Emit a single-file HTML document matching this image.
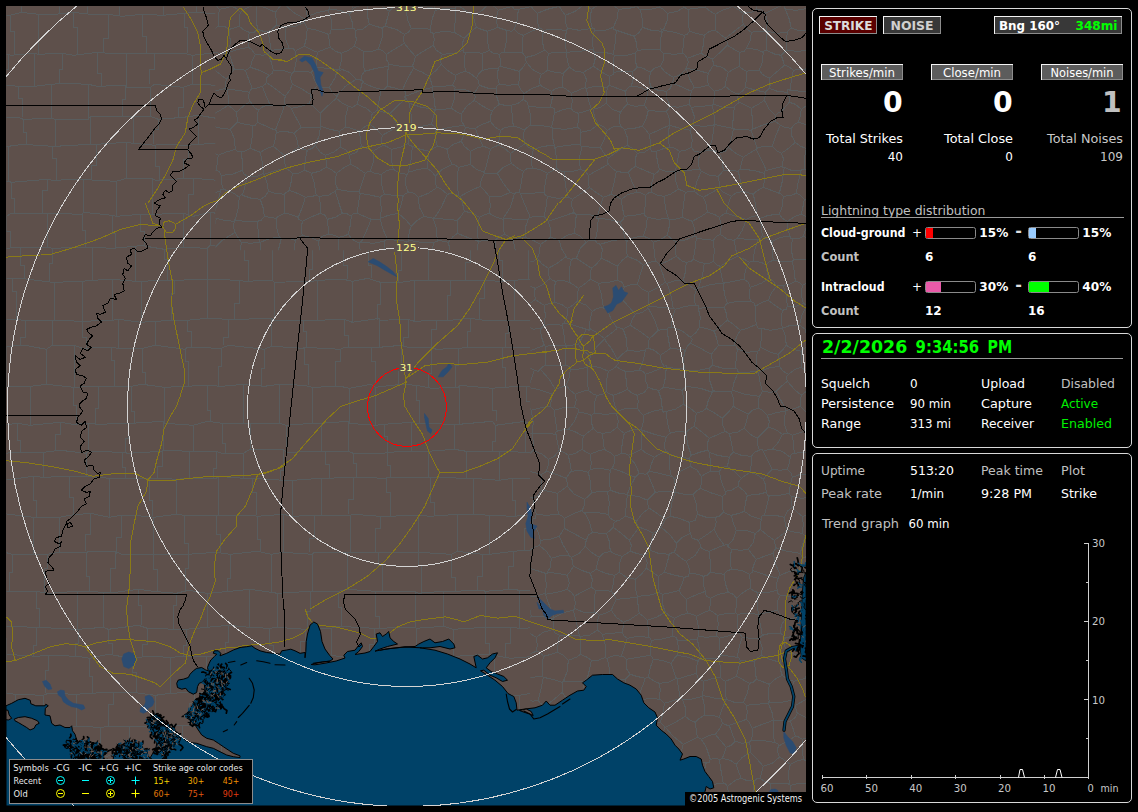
<!DOCTYPE html>
<html lang="en">
<head>
<meta charset="utf-8">
<title>Lightning detector - Astrogenic Systems</title>
<style>
html,body{margin:0;padding:0;background:#000;}
body{width:1138px;height:812px;position:relative;overflow:hidden;font-family:"DejaVu Sans","Liberation Sans",sans-serif;}
svg.map{position:absolute;left:6px;top:6px;width:800px;height:800px;display:block;}
svg.ui{position:absolute;left:0;top:0;width:1138px;height:812px;display:block;}
</style>
</head>
<body>
<svg class="map" width="800" height="800" viewBox="6 6 800 800">
<rect x="6" y="6" width="800" height="800" fill="#5e504b"/>
<defs><clipPath id="csw"><path d="M6 6H215V250H530V806H6Z"/></clipPath><clipPath id="cne"><path d="M215 6H806V806H530V250H215Z"/></clipPath></defs>
<g fill="none" stroke="#595d5e" stroke-width="1" shape-rendering="crispEdges" transform="translate(0.3 0.3)">
<path clip-path="url(#cne)" d="M533 524L522 532L511 539M533 524L532 522L532 519M532 519L521 518L510 516M518 474L519 483L521 493M521 493L518 492L517 495M523 392L525 388L528 387M523 392L523 398L523 404M523 404L529 406L531 410M531 410L542 407L550 406M528 387L541 390L552 394M552 394L551 400L550 406M573 566L572 560L571 557M573 566L581 570L590 573M571 557L579 553L585 546M599 557L591 552L585 546M599 557L597 563L596 569M590 573L593 571L596 569M590 573L592 579L591 587M596 569L605 573L614 575M614 575L613 584L611 591M611 591L603 590L595 590M591 587L594 589L595 590M639 613L638 607L637 597M639 613L630 619L623 622M637 597L627 598L616 599M616 599L613 605L611 610M611 610L616 617L623 622M533 524L538 532L540 540M540 540L540 543L539 545M516 551L521 554L526 554M539 545L532 548L526 554M540 540L550 539L559 536M559 536L563 545L569 555M569 555L561 555L551 558M539 545L546 551L551 558M573 566L570 571L567 575M567 575L557 573L547 572M571 557L569 556L569 555M551 558L550 567L547 572M834 652L835 648L834 643M810 637L808 647L806 654M810 637L815 634L822 633M829 658L833 654L834 652M829 658L819 658L808 658M808 658L808 656L806 654M822 633L827 637L834 643M810 637L807 636L805 634M806 654L796 654L787 653M787 653L784 645L784 638M805 634L796 635L784 638M828 550L823 541L820 535M704 827L706 828L705 826M726 825L715 825L705 826M749 824L760 823L772 819M772 819L776 825L778 828M778 828L789 827L798 825M770 783L770 796L773 806M770 783L764 781L760 778M760 778L757 778L754 781M754 781L753 790L751 800M751 800L763 802L773 806M789 783L780 783L770 783M789 783L788 773L790 764M763 766L761 773L760 778M763 766L772 763L779 757M779 757L783 759L790 764M763 766L756 758L750 752M741 778L738 771L736 764M741 778L746 780L754 781M750 752L742 757L736 764M722 496L722 504L723 512M722 496L712 493L700 488M723 512L719 516L715 517M700 488L696 491L693 494M715 517L706 517L697 514M693 494L696 504L697 514M523 469L523 464L523 460M523 469L533 472L541 474M548 459L548 465L546 471M548 459L542 454L533 450M541 474L545 472L546 471M533 450L529 454L523 460M559 450L557 442L556 434M559 450L554 456L548 459M556 434L545 433L532 433M533 450L533 442L532 433M523 469L520 470L518 474M523 460L515 455L506 447M531 410L533 422L532 433M556 434L555 432L557 431M557 431L555 419L554 410M550 406L552 408L554 410M532 433L532 432L532 433M558 514L546 515L536 514M558 514L557 503L557 493M536 514L534 506L533 498M557 493L549 491L541 490M533 498L538 495L541 490M532 519L535 518L536 514M521 493L528 496L533 498M541 474L541 483L541 490M523 404L516 406L510 411M532 433L521 435L510 435M507 383L516 386L523 392M829 170L827 171L823 174M823 174L823 181L824 191M827 218L823 207L819 198M824 191L822 195L819 198M830 388L831 381L831 374M809 388L808 378L810 371M809 388L816 389L826 392M810 371L815 369L823 368M826 392L827 391L830 388M831 374L827 371L823 368M818 279L810 281L802 285M818 279L817 266L817 256M817 256L805 259L793 259M802 285L799 282L795 281M795 281L794 271L792 261M792 261L793 260L793 259M828 284L832 282L835 279M828 284L824 283L818 279M817 256L818 257L817 256M823 368L824 357L823 348M823 348L823 348L825 346M825 346L827 337L829 330M832 299L825 302L817 308M817 308L819 318L823 326M829 330L825 329L823 326M800 406L792 409L786 410M800 406L800 401L801 395M801 395L794 389L787 381M787 381L781 386L776 391M776 391L780 399L786 410M559 536L562 531L564 528M558 514L561 515L564 518M564 518L564 522L564 528M585 546L585 544L586 540M564 528L575 534L586 540M619 572L619 563L622 556M619 572L616 574L614 575M599 557L603 553L610 551M610 551L615 554L622 556M675 492L675 485L674 479M675 492L664 491L655 492M649 471L648 472L647 473M649 471L659 473L671 476M671 476L673 477L674 479M647 473L651 482L655 492M636 521L642 513L649 508M636 521L632 518L625 516M649 508L647 503L647 500M625 516L626 504L627 495M627 495L638 496L647 500M584 499L588 496L591 493M584 499L574 494L567 486M591 493L590 481L588 472M588 472L580 470L571 471M567 486L567 483L566 478M571 471L569 473L566 478M557 493L560 491L567 486M582 510L574 513L564 518M582 510L584 505L584 499M610 490L607 492L607 491M610 490L609 479L610 470M607 491L598 491L591 493M610 470L600 468L590 469M590 469L590 469L588 472M546 471L556 474L566 478M559 450L565 453L568 455M568 455L570 464L571 471M616 599L614 595L611 591M595 590L594 602L594 612M611 610L605 613L599 615M594 612L598 614L599 615M559 635L558 642L557 652M559 635L568 635L579 635M580 654L580 647L580 636M580 654L576 657L568 660M568 660L563 655L557 652M579 635L580 637L580 636M700 488L701 483L701 476M675 492L675 491L675 492M674 479L680 471L690 466M675 492L684 494L693 494M701 476L697 470L690 466M686 432L689 429L694 426M686 432L687 443L691 455M694 426L702 432L709 438M709 438L707 443L707 450M707 450L699 452L691 455M669 454L669 466L671 476M669 454L679 457L689 458M690 466L691 462L689 458M365 261L371 260L380 259M389 269L384 263L380 259M193 240L200 243L209 245M216 218L213 231L209 245M216 218L214 219L213 216M198 213L206 215L213 216M220 191L207 194L196 193M220 191L217 204L213 216M223 189L221 182L221 175M223 189L220 189L220 191M221 175L219 171L216 170M216 170L206 172L198 175M230 129L234 138L235 149M230 129L221 128L213 126M213 126L209 137L208 147M235 149L225 152L218 155M218 155L213 152L208 147M216 170L217 162L218 155M198 148L203 147L208 147M319 255L328 257L339 261M319 255L319 248L318 241M328 234L322 236L318 241M328 234L334 235L338 237M338 237L338 250L339 261M365 261L363 259L358 257M358 257L349 262L343 264M314 261L317 257L319 255M314 261L304 261L295 259M302 235L310 237L318 241M302 235L300 236L295 240M295 259L294 250L295 240M526 819L533 822L538 823M526 819L517 823L512 829M505 805L512 806L521 807M521 807L525 812L526 819M540 822L540 823L538 823M540 822L546 826L554 827M545 594L549 605L554 617M545 594L557 592L567 589M554 617L564 612L573 610M567 589L571 592L574 596M574 596L575 603L574 608M573 610L574 609L574 608M567 575L569 583L567 589M591 587L583 591L574 596M594 612L583 612L574 608M599 615L597 621L597 630M597 630L589 635L580 636M579 635L576 621L573 610M523 594L521 585L521 579M523 594L526 595L529 596M529 596L536 596L545 593M545 593L546 585L545 573M521 579L524 574L529 568M545 573L536 570L529 568M497 570L509 574L521 579M511 599L518 596L523 594M547 572L547 573L545 573M545 594L545 592L545 593M526 554L526 562L529 568M677 640L678 647L677 655M677 640L687 640L697 639M700 659L699 648L697 639M700 659L698 659L698 661M698 661L688 657L677 655M623 622L623 626L622 632M597 630L600 632L602 634M602 634L612 633L622 632M700 659L710 658L718 658M718 658L720 666L720 677M696 673L696 667L698 661M696 673L698 678L703 681M703 681L713 678L720 677M826 392L825 400L823 408M809 388L806 391L801 395M800 406L805 411L810 414M823 408L816 412L810 414M828 550L825 553L824 556M805 536L813 536L819 534M805 536L802 545L800 553M819 534L821 534L820 535M800 553L801 556L802 557M802 557L813 556L824 556M828 572L825 563L824 556M829 658L830 666L831 674M808 658L808 667L805 678M805 678L812 681L817 685M817 685L825 681L831 674M819 823L819 822L819 823M819 823L810 820L803 819M803 819L802 823L798 825M748 823L739 820L732 820M748 823L750 812L751 800M732 820L729 812L726 801M751 800L740 799L727 800M727 800L728 800L726 801M749 824L748 823L748 823M726 825L728 822L732 820M774 808L772 813L772 819M774 808L773 806L773 806M751 800L750 799L751 800M705 826L707 816L707 806M707 806L716 802L726 801M727 786L735 780L741 778M727 786L728 791L727 800M773 720L772 720L773 720M773 720L762 724L752 728M752 728L752 735L751 740M751 740L761 740L774 742M773 720L773 731L774 742M750 752L750 746L749 742M779 757L777 750L778 746M749 742L749 742L751 740M774 742L778 744L778 746M801 811L794 807L789 803M801 811L808 802L815 794M789 803L791 793L790 785M790 785L799 783L808 784M808 784L810 788L813 788M815 794L814 792L813 788M774 808L782 804L789 803M803 819L801 815L801 811M828 801L823 812L819 823M828 801L820 797L815 794M789 783L788 784L790 785M810 762L809 775L808 784M810 762L808 762L803 759M803 759L796 761L790 764M557 431L564 429L568 429M554 410L564 407L574 407M568 429L574 421L578 412M574 407L578 409L578 412M819 534L822 526L824 517M824 517L830 515L835 513M802 533L803 524L802 516M802 533L805 536L805 536M824 517L819 515L815 512M802 516L809 515L815 512M763 451L769 449L772 449M763 451L767 459L772 469M772 469L780 470L787 469M787 469L789 463L790 457M772 449L782 451L790 457M795 281L789 284L783 285M792 261L783 261L773 260M769 278L767 273L766 265M769 278L774 282L776 286M783 285L780 285L776 286M773 260L768 262L766 265M832 299L830 292L828 284M825 234L820 240L816 243M817 256L817 248L816 243M827 219L825 228L825 234M827 219L827 219L827 218M785 411L777 412L767 415M785 411L784 423L787 433M787 433L786 433L782 434M782 434L775 429L768 427M768 427L769 421L767 415M776 391L770 392L762 391M786 410L785 409L785 411M762 391L760 395L759 396M759 396L758 402L758 408M758 408L762 410L767 415M810 414L809 420L810 426M810 426L801 432L792 435M792 435L789 433L787 433M772 449L778 442L782 434M790 457L791 454L794 453M794 453L793 442L792 435M670 433L667 422L666 411M670 433L677 431L686 432M696 413L690 408L683 404M696 413L695 420L694 426M683 404L675 409L666 411M690 337L692 339L690 343M690 337L681 330L671 327M690 343L687 346L685 350M671 327L668 327L667 329M667 329L668 339L670 348M685 350L679 349L670 348M738 372L747 372L757 371M738 372L737 369L735 368M735 368L736 358L737 349M737 349L747 352L757 351M757 351L756 361L757 371M732 390L745 394L759 396M732 390L734 381L738 372M762 391L760 383L758 372M758 372L756 373L757 371M731 391L731 392L732 390M731 391L721 391L713 391M709 368L709 379L713 391M709 368L711 366L712 365M712 365L723 368L735 368M714 331L720 326L727 320M714 331L716 337L718 345M718 345L728 345L734 345M734 345L736 337L740 330M727 320L733 324L740 330M699 327L706 328L714 331M699 327L700 317L698 308M698 308L710 307L724 307M724 307L726 313L727 320M699 327L696 332L690 337M690 343L702 349L711 354M711 354L715 349L718 345M712 365L712 361L711 354M737 349L736 346L734 345M758 372L767 368L779 366M760 347L770 352L778 354M760 347L759 350L757 351M778 354L779 361L779 366M810 371L805 370L801 367M787 381L786 377L788 374M801 367L795 369L788 374M788 374L783 371L779 366M823 348L814 348L807 346M823 326L814 329L805 329M805 329L807 338L807 346M778 354L782 350L786 345M801 367L801 359L801 351M786 345L793 349L801 351M807 346L804 348L801 351M606 533L610 530L613 527M606 533L600 533L592 532M584 512L589 521L592 532M584 512L595 512L608 514M608 514L610 518L615 521M613 527L613 524L615 521M610 551L609 541L606 533M629 540L631 545L630 551M629 540L621 533L613 527M622 556L625 554L630 551M586 540L588 535L592 532M582 510L583 512L584 512M607 491L609 502L608 514M625 516L619 520L615 521M610 490L619 493L627 494M627 494L628 495L627 495M636 521L637 525L639 527M639 527L635 532L629 540M612 468L614 463L614 456M612 468L623 472L635 477M614 456L617 455L621 453M621 453L624 453L628 455M628 455L635 464L639 473M635 477L636 476L639 473M627 494L630 486L635 477M610 470L611 468L612 468M647 473L645 474L639 473M655 492L650 497L647 500M568 455L575 453L582 449M568 429L576 432L583 436M582 449L582 442L583 436M590 469L591 463L590 454M582 449L586 452L590 454M614 456L611 453L604 449M590 454L597 451L604 449M763 451L762 449L759 450M768 427L761 434L757 438M759 450L757 443L757 438M750 472L751 463L751 456M750 472L756 474L763 479M763 479L768 473L772 469M759 450L754 452L751 456M701 476L706 473L710 471M707 450L708 450L709 452M691 455L690 456L689 458M710 471L710 460L709 452M738 486L731 490L725 491M738 486L738 482L741 478M741 478L734 471L727 466M725 491L721 481L719 471M719 471L722 467L727 466M750 472L745 475L741 478M751 456L741 455L733 452M733 452L730 455L729 457M729 457L728 462L727 466M722 496L725 494L725 491M710 471L715 471L719 471M729 457L717 455L709 452M763 479L765 484L766 492M738 486L744 491L747 495M766 492L758 494L747 495M731 515L727 514L723 512M731 515L739 513L744 511M744 511L745 503L747 495M802 533L795 532L787 530M787 530L785 524L784 517M802 516L797 512L792 507M784 517L787 511L792 507M766 492L767 495L769 495M761 519L761 516L764 515M761 519L751 516L744 511M764 515L767 504L769 495M566 30L565 41L566 52M566 30L567 29L567 28M566 52L580 51L593 49M593 49L592 41L594 30M594 30L594 28L592 28M567 28L579 30L592 28M208 -8L207 -10L204 -14M208 -8L222 -11L233 -11M213 126L213 125L210 122M210 122L199 124L190 124M327 219L328 228L328 234M327 219L325 215L320 213M302 235L301 229L302 221M302 221L310 217L320 213M342 213L335 217L327 219M342 213L338 201L335 191M335 191L328 195L319 196M320 213L320 204L319 196M284 213L290 214L298 217M284 213L284 204L284 194M284 194L285 193L289 190M298 217L302 207L305 197M289 190L297 193L305 197M298 217L298 219L302 221M319 196L318 196L316 195M305 197L312 196L316 195M337 189L335 182L336 173M337 189L348 191L359 191M336 173L344 167L350 164M350 164L356 167L365 173M359 191L362 182L365 173M223 189L232 192L239 197M239 197L238 207L235 220M216 218L224 220L234 221M235 220L234 219L234 221M264 216L261 220L257 221M264 216L263 208L260 199M239 197L241 194L242 195M257 221L245 221L235 220M242 195L251 198L260 199M284 213L278 216L276 218M284 194L275 193L268 191M276 218L269 217L264 216M268 191L265 196L260 199M221 175L232 174L242 170M235 149L237 151L241 151M241 151L242 161L242 170M242 195L245 185L247 176M264 174L263 174L263 173M264 174L267 184L268 191M263 173L257 176L247 176M242 170L243 173L247 176M237 122L245 124L252 125M237 122L235 124L230 129M241 151L244 151L250 148M252 125L252 136L250 148M263 173L262 162L260 152M250 148L255 150L260 152M237 122L237 118L236 112M258 110L257 116L257 122M258 110L254 107L250 101M252 125L255 125L257 122M236 112L244 105L250 101M361 242L361 241L359 243M361 242L366 231L371 219M359 243L352 239L348 234M348 234L350 225L351 216M371 219L364 216L357 213M351 216L353 213L357 213M384 241L384 251L380 259M384 241L373 243L361 242M358 257L360 251L359 243M338 237L343 236L348 234M342 213L346 213L351 216M335 191L337 188L337 189M360 193L359 193L359 191M360 193L358 204L357 213M276 218L276 226L279 237M259 242L258 232L257 221M259 242L261 243L260 242M260 242L270 238L279 237M295 240L289 238L281 238M279 237L280 237L281 238M704 827L694 824L686 823M634 823L637 826L636 826M634 823L621 823L610 820M610 820L610 820L608 822M531 616L542 616L553 619M531 616L528 619L527 621M527 621L527 626L528 632M553 629L543 632L536 637M553 629L553 622L553 619M536 637L531 634L528 632M554 617L552 619L553 619M529 596L529 606L531 616M510 618L517 620L527 621M509 642L518 635L528 632M559 635L555 633L553 629M557 652L551 654L543 656M543 656L540 652L536 651M536 651L537 645L536 637M516 657L526 655L536 651M718 658L719 657L721 655M697 639L697 638L698 636M719 638L719 647L721 655M719 638L717 636L716 636M698 636L706 637L716 636M696 673L686 676L677 679M671 663L674 658L677 655M671 663L673 670L676 678M676 678L678 679L677 679M655 746L660 737L665 727M655 746L645 742L637 736M644 720L652 722L660 722M644 720L641 723L638 725M665 727L663 725L660 722M637 736L638 730L638 725M623 701L626 699L627 699M623 701L620 710L616 720M616 720L627 724L638 725M644 720L639 709L638 700M638 700L632 700L627 699M639 613L644 617L647 620M647 620L648 629L648 637M622 632L623 635L627 638M627 638L637 636L648 637M647 620L656 617L665 612M672 636L661 639L651 640M672 636L673 625L674 618M674 618L670 616L665 612M648 637L650 638L651 640M616 720L615 723L611 724M627 746L620 743L611 738M627 746L632 741L637 736M611 738L611 730L611 724M563 681L564 680L562 682M563 681L575 681L583 681M562 682L562 687L562 692M562 692L567 700L574 707M574 707L579 703L587 697M587 697L584 690L583 681M623 701L616 698L606 694M611 724L606 720L599 717M599 717L600 707L600 700M606 694L604 698L600 700M793 681L792 690L792 700M793 681L786 678L782 675M782 675L776 678L769 684M792 700L781 702L769 702M769 702L768 694L769 684M787 653L782 656L780 662M805 678L798 680L793 681M780 662L780 669L782 675M805 634L802 624L800 617M780 633L783 635L784 638M780 633L781 625L784 620M784 620L791 618L800 617M822 633L823 625L825 616M825 616L812 614L802 615M800 617L802 615L802 615M826 614L826 607L824 598M825 616L826 616L826 614M817 434L816 441L817 449M821 452L819 452L817 449M810 426L815 429L817 434M809 453L802 452L794 453M809 453L813 450L817 449M719 638L730 635L738 632M738 632L737 622L737 614M716 636L718 624L717 615M717 615L727 613L735 613M737 614L735 612L735 613M803 574L814 575L825 574M803 574L804 583L804 593M825 574L825 584L822 596M804 593L814 596L822 596M800 570L802 562L802 557M800 570L803 573L803 574M828 572L827 573L825 574M824 598L822 597L822 596M801 596L802 605L802 615M801 596L803 594L804 593M831 775L822 782L813 788M810 762L818 763L823 760M831 775L831 769L829 764M823 760L826 762L829 764M752 728L749 722L746 719M749 742L742 743L735 741M735 741L732 734L729 725M729 725L738 722L746 719M768 703L772 713L773 720M768 703L756 704L746 705M746 719L747 711L746 705M768 703L768 701L769 702M749 683L747 693L743 702M749 683L753 682L756 679M756 679L764 682L769 684M746 705L745 704L743 702M642 430L641 441L641 449M642 430L654 434L666 437M641 449L646 453L654 457M666 437L664 444L665 451M665 451L659 454L654 457M624 433L622 442L621 453M624 433L633 429L641 429M641 429L641 430L642 430M628 455L633 453L641 449M670 433L668 434L666 437M643 415L643 422L641 429M643 415L652 411L662 409M662 409L663 412L666 411M649 471L651 464L654 457M669 454L667 451L665 451M555 389L553 393L552 394M555 389L561 387L566 385M574 407L576 400L575 394M566 385L570 390L575 394M578 412L586 413L591 415M583 436L589 431L593 428M591 415L591 422L593 428M604 449L603 441L602 433M602 433L597 432L593 428M624 433L620 430L617 427M602 433L610 432L617 427M815 512L813 504L811 497M792 507L791 501L791 496M811 497L801 498L791 496M809 453L808 465L809 474M787 469L791 473L792 477M809 474L800 474L792 477M769 495L779 495L789 493M792 477L790 484L789 493M784 517L775 515L764 515M789 493L790 495L791 496M733 406L740 410L748 414M733 406L728 412L722 418M748 414L746 422L744 428M744 428L737 432L729 433M722 418L722 424L725 431M725 431L728 433L729 433M731 391L733 398L733 406M758 408L752 410L748 414M706 408L708 400L712 392M706 408L713 412L722 418M713 391L714 390L712 392M757 438L750 434L744 428M733 452L731 442L729 433M706 408L702 411L696 413M709 438L718 434L725 431M737 238L742 230L746 219M737 238L746 239L758 239M758 239L760 239L762 235M762 235L761 226L760 218M746 219L750 217L757 215M757 215L757 216L760 218M753 261L761 262L766 265M753 261L754 251L758 239M773 260L772 252L772 241M772 241L767 239L762 235M720 234L727 239L734 240M720 234L721 225L719 217M734 240L735 239L737 238M746 219L736 216L726 213M719 217L723 214L726 213M829 170L831 162L831 151M806 148L809 146L814 144M806 148L804 159L804 169M804 169L812 170L823 174M831 151L822 148L814 144M796 193L791 195L783 196M796 193L798 181L801 170M784 167L791 170L801 170M784 167L782 181L779 193M779 193L781 194L783 196M804 169L801 169L801 170M819 198L812 198L804 199M804 199L800 195L796 193M795 142L800 146L806 148M795 142L787 149L781 153M782 166L783 158L781 153M782 166L782 167L784 167M763 187L756 191L753 194M763 187L771 190L779 193M753 194L755 203L757 215M779 214L782 206L783 196M779 214L768 215L760 218M787 221L795 216L801 214M787 221L787 229L790 236M803 236L799 238L792 238M803 236L806 227L811 221M811 221L805 216L801 214M792 238L790 238L790 236M804 199L803 205L801 214M779 214L782 218L787 221M772 241L780 237L790 236M816 243L809 239L803 236M793 259L791 250L792 238M827 219L820 220L811 221M528 387L531 379L534 370M555 389L549 379L540 369M540 369L538 371L534 370M565 365L554 365L545 365M565 365L569 366L570 369M566 385L569 377L570 369M540 369L543 366L545 365M508 372L515 367L523 362M534 370L528 367L523 362M518 349L519 351L520 352M523 362L522 356L520 352M709 368L698 370L686 370M712 392L700 388L685 386M685 386L685 378L686 370M683 404L683 397L682 390M685 386L684 388L682 390M685 350L683 358L684 368M686 370L684 369L684 368M723 283L721 275L720 266M723 283L733 281L744 279M720 266L729 260L737 256M744 279L745 270L749 262M737 256L744 259L749 262M750 287L748 282L744 279M750 287L749 294L750 301M727 303L738 301L750 301M727 303L724 293L723 283M723 283L724 282L723 283M769 278L761 283L750 287M753 261L751 261L749 262M734 240L735 247L737 256M760 347L761 338L761 328M786 345L785 335L782 328M782 328L770 330L761 328M727 303L725 305L724 307M750 301L754 303L755 306M740 330L747 328L756 324M755 306L755 315L756 324M776 286L771 293L768 300M755 306L762 302L768 300M756 324L758 328L761 328M698 636L698 626L696 616M717 615L713 612L709 610M709 610L702 613L696 616M672 636L676 637L677 640M674 618L680 615L687 613M687 613L692 614L696 616M710 598L710 604L709 610M710 598L706 596L705 591M687 613L686 606L686 599M705 591L697 594L686 599M637 597L638 598L637 596M619 572L626 577L635 579M637 596L635 588L635 579M618 9L629 8L637 6M618 9L617 18L613 27M634 36L625 33L616 30M634 36L639 32L642 27M642 27L642 19L640 9M613 27L613 29L616 30M637 6L639 9L640 9M662 31L660 40L660 49M662 31L651 30L642 27M634 36L636 42L637 50M660 49L649 49L637 50M593 49L594 52L594 52M594 30L605 30L613 27M616 30L615 42L613 54M613 54L604 52L594 52M637 50L635 53L635 53M635 53L626 55L614 55M613 54L612 54L614 55M567 28L565 21L565 15M565 15L575 11L584 4M592 28L590 20L591 9M591 9L588 7L584 4M618 9L612 4L609 -1M591 9L601 3L609 -1M613 -10L621 -12L632 -14M638 -7L636 -1L637 6M638 -7L634 -11L632 -14M609 -1L608 -2L609 -1M609 -1L610 -7L613 -10M657 -16L647 -12L638 -7M465 52L464 61L465 71M465 52L463 52L463 50M455 75L459 73L465 71M455 75L447 70L441 64M463 50L454 53L442 54M441 64L440 58L442 54M584 4L581 -2L580 -9M609 -1L598 -8L589 -15M580 -9L585 -11L589 -15M211 260L199 263L187 267M211 260L211 272L213 284M219 9L218 18L218 26M219 9L225 8L231 6M231 6L236 8L240 12M240 12L239 18L239 26M218 26L224 26L229 29M239 26L233 28L229 29M210 1L203 6L195 14M210 1L215 4L219 9M196 26L201 28L208 31M208 31L212 30L218 26M208 -8L208 -2L210 1M233 -11L234 -10L234 -10M234 -10L233 -2L231 6M248 47L248 39L249 32M248 47L238 49L229 52M249 32L244 30L239 26M229 52L230 42L229 29M359 131L365 126L370 124M359 131L360 137L361 146M370 124L377 130L382 135M361 146L367 148L373 151M373 151L379 147L383 145M383 145L381 141L382 135M372 113L371 117L370 124M372 113L366 108L357 104M345 127L345 117L348 106M345 127L351 128L359 131M357 104L352 107L348 106M345 127L342 129L339 131M349 155L356 152L361 146M349 155L346 150L340 147M340 147L340 140L339 131M349 155L350 160L350 164M370 171L368 171L365 173M370 171L373 162L373 151M391 149L391 159L393 169M391 149L386 146L383 145M393 169L387 170L381 174M381 174L374 173L370 171M393 169L400 173L406 174M381 174L381 183L384 194M406 174L405 184L408 192M408 192L406 193L403 195M403 195L394 195L384 194M360 193L371 195L380 197M384 194L382 195L380 197M349 -12L346 -12L346 -9M328 -8L329 -8L330 -6M346 -9L339 -8L330 -6M328 -8L315 -8L304 -9M302 -21L303 -15L302 -11M302 -11L303 -9L304 -9M210 122L211 120L211 115M211 115L208 108L204 102M236 112L232 108L228 105M211 115L220 110L228 105M189 84L197 88L206 94M204 102L204 98L206 94M249 92L238 90L227 89M249 92L248 97L250 101M228 105L228 97L227 89M268 53L263 55L255 54M268 53L271 62L273 70M273 70L272 73L269 75M269 75L259 70L250 67M250 67L252 60L255 54M248 47L251 49L255 54M271 50L269 39L268 31M271 50L270 51L268 53M268 31L263 31L257 29M257 29L254 32L249 32M271 50L279 49L289 48M289 48L293 48L295 51M292 73L282 70L273 70M292 73L292 73L294 71M294 71L296 60L295 51M292 73L290 77L292 84M292 84L302 89L310 94M311 72L303 71L294 71M311 72L314 79L317 85M310 94L315 88L317 85M348 106L342 103L336 98M339 131L330 129L320 126M320 126L320 118L320 113M320 113L327 106L336 98M336 173L332 170L326 167M316 195L314 183L311 173M311 173L319 171L326 167M340 147L333 152L325 155M320 126L320 126L320 127M320 127L319 135L315 145M315 145L320 152L325 155M326 167L326 161L325 155M286 168L284 161L284 155M286 168L290 171L292 173M292 173L298 173L304 170M304 170L305 159L307 150M284 155L291 152L298 147M298 147L303 149L307 150M264 174L276 170L286 168M273 146L267 148L260 152M273 146L279 151L284 155M289 190L291 181L292 173M311 173L307 171L304 170M315 145L312 148L307 150M320 127L311 127L301 127M298 147L297 140L294 133M294 133L296 131L301 127M273 146L275 139L276 132M294 133L285 131L276 132M320 113L314 107L309 103M309 103L301 106L291 108M301 127L295 116L291 108M257 122L266 126L275 130M276 132L276 130L275 130M241 242L237 236L235 232M241 242L240 252L236 261M235 232L222 240L212 250M236 261L224 258L214 255M214 255L213 251L212 250M259 242L250 243L241 242M234 221L233 227L235 232M209 245L211 248L212 250M211 260L212 258L214 255M262 86L265 84L266 82M262 86L266 96L270 105M266 82L277 90L285 96M270 105L277 105L284 106M285 96L284 100L285 105M285 105L284 106L284 106M252 88L248 78L245 70M252 88L256 88L262 86M245 70L247 69L250 67M269 75L266 78L266 82M258 110L263 106L270 105M252 88L250 90L249 92M292 84L290 89L285 96M275 130L280 117L284 106M310 94L311 97L309 103M291 108L289 106L285 105M260 242L260 249L262 258M253 264L258 260L262 258M713 240L714 251L713 261M713 240L704 239L696 238M696 238L695 247L693 259M693 259L699 262L704 263M704 263L709 263L713 261M720 234L716 236L713 240M720 266L717 265L713 261M723 283L711 284L698 288M698 288L702 276L704 263M649 338L653 335L658 330M649 338L641 332L630 325M658 330L654 319L648 308M648 308L642 312L635 314M630 325L632 319L635 314M540 822L542 813L543 804M521 807L524 801L528 798M528 798L535 803L543 804M636 806L630 800L624 797M636 806L635 815L634 823M610 820L609 811L611 804M624 797L617 800L611 804M577 786L580 791L581 798M577 786L584 781L593 774M593 774L599 778L604 782M581 798L592 797L602 797M604 782L602 789L602 797M662 836L662 832L660 828M636 826L647 825L657 826M657 826L660 826L660 828M636 806L643 805L650 801M650 801L654 802L655 803M657 826L656 815L655 803M686 823L683 819L679 817M660 828L669 822L679 817M640 779L637 768L637 761M640 779L634 784L625 787M625 787L622 782L617 777M617 777L616 773L617 766M617 766L622 761L629 756M629 756L633 759L637 761M650 801L648 793L645 781M645 781L644 781L640 779M624 797L626 792L625 787M604 782L610 780L617 777M611 804L606 802L602 797M597 758L597 757L596 759M597 758L607 763L617 766M596 759L595 765L593 774M627 746L628 750L629 756M597 758L599 751L602 744M602 744L606 741L611 738M656 754L647 756L637 761M656 754L656 749L655 746M707 806L705 802L702 800M727 786L725 783L723 783M723 783L713 784L701 783M701 783L702 783L700 784M702 800L701 793L700 784M679 817L678 811L679 806M702 800L690 802L679 806M655 803L663 800L672 797M679 806L674 802L672 797M658 777L665 779L674 784M658 777L657 765L657 755M657 755L668 756L679 758M679 779L677 782L674 784M679 779L678 769L680 760M679 758L680 759L680 760M645 781L652 780L658 777M672 797L674 791L674 784M656 754L656 755L657 755M700 784L688 781L679 779M701 783L703 774L706 762M706 762L694 762L680 760M592 824L587 812L581 800M592 824L591 826L590 828M590 828L583 829L579 830M579 830L572 825L564 820M581 800L575 804L566 810M564 820L564 814L566 810M581 798L581 798L581 800M608 822L599 823L592 824M554 827L560 824L564 820M543 804L546 801L550 799M550 799L558 804L566 810M520 677L521 677L521 678M519 694L520 686L521 678M543 656L542 665L542 676M521 678L532 677L542 676M568 660L567 671L563 681M562 682L552 679L543 677M543 677L543 677L542 676M525 719L526 709L530 700M525 719L535 719L547 717M545 706L547 712L547 717M545 706L540 703L538 700M538 700L532 701L530 700M562 692L555 698L545 706M543 677L541 687L538 700M519 694L523 698L530 700M759 638L750 638L742 637M759 638L762 648L761 655M742 637L739 646L737 657M754 661L758 657L761 655M754 661L748 661L740 660M740 660L739 658L737 657M780 633L770 633L762 635M780 662L769 659L761 655M762 635L761 636L759 638M721 655L730 656L737 657M738 632L739 633L742 637M756 679L755 669L754 661M749 683L742 679L736 676M736 676L738 669L740 660M736 676L730 679L725 681M720 677L723 680L725 681M676 678L668 682L659 683M677 679L678 687L680 698M664 703L671 701L680 698M664 703L661 700L659 699M659 699L660 689L659 683M664 703L663 712L660 722M638 700L637 701L638 700M659 699L650 698L638 700M630 674L636 676L645 678M630 674L626 668L626 659M626 659L638 657L650 655M648 677L645 678L645 678M648 677L650 667L653 659M653 659L652 657L650 655M627 699L627 690L625 679M625 679L628 676L630 674M638 700L641 689L645 678M627 638L624 647L621 656M621 656L623 656L626 659M651 640L650 648L650 655M659 683L654 681L648 677M671 663L661 660L653 659M584 721L583 726L585 733M584 721L580 718L574 715M570 717L572 715L574 715M570 717L567 729L563 743M585 733L582 737L576 744M563 743L571 743L576 744M602 744L593 739L585 733M599 717L591 720L584 721M574 707L574 711L574 715M587 697L594 699L600 700M548 718L548 717L547 717M548 718L558 717L570 717M585 757L590 757L596 759M585 757L581 749L576 744M587 678L596 681L605 685M587 678L589 670L591 660M591 660L598 660L605 657M610 679L607 683L605 685M610 679L609 668L607 658M605 657L607 659L607 658M583 681L585 680L587 678M606 694L607 689L605 685M580 654L587 657L591 660M602 634L605 645L605 657M625 679L618 680L610 679M621 656L614 655L607 658M787 530L781 535L774 540M761 519L760 525L760 529M760 529L767 535L774 540M731 515L733 523L736 530M736 530L745 530L755 533M760 529L759 530L755 533M800 553L787 551L776 548M774 540L775 545L776 548M801 596L790 596L780 595M784 620L781 616L777 610M780 595L777 601L777 610M762 635L760 624L758 614M777 610L768 612L758 614M737 614L747 613L758 614M758 614L757 614L758 614M817 685L817 689L819 694M819 694L819 696L820 696M792 700L792 702L795 705M819 694L808 698L795 705M823 760L824 751L823 741M823 741L829 738L835 738M683 744L689 741L697 737M683 744L673 736L665 727M697 737L696 730L695 722M665 727L675 722L685 716M695 722L690 720L685 716M665 727L664 727L665 727M679 758L681 751L683 744M680 698L681 698L682 699M682 699L685 707L685 716M701 739L706 747L710 759M701 739L709 735L715 734M715 734L720 740L726 747M710 759L715 758L719 759M726 747L724 753L722 758M722 758L720 759L719 759M706 762L709 762L710 759M697 737L698 737L701 739M735 741L731 745L726 747M722 723L727 725L729 725M722 723L719 729L715 734M723 783L721 772L719 759M736 764L730 760L722 758M719 717L722 708L726 699M719 717L713 715L704 715M704 715L704 705L702 696M726 699L715 698L702 695M726 699L728 700L726 699M702 695L702 695L702 696M722 723L721 719L719 717M743 702L734 702L726 699M695 722L699 718L704 715M682 699L691 699L702 696M703 681L703 689L702 695M725 681L725 690L726 699M575 394L582 391L588 390M570 369L577 369L587 367M588 390L587 380L587 367M617 359L618 363L616 366M617 359L611 348L604 339M616 366L612 369L608 371M604 339L596 347L590 356M590 356L589 361L590 366M608 371L599 367L590 366M594 413L605 414L616 413M594 413L594 402L597 395M597 395L602 394L606 391M617 411L614 404L613 395M617 411L617 413L616 413M613 395L608 393L606 391M591 415L591 415L594 413M617 427L618 421L616 413M588 390L593 394L597 395M608 371L606 382L606 391M590 366L588 366L587 367M637 408L626 408L617 411M637 408L638 401L637 395M637 395L632 393L627 389M627 389L621 392L613 395M643 415L640 412L637 408M616 366L620 369L625 371M625 371L626 381L627 389M817 492L815 482L813 476M817 492L825 492L834 493M836 475L831 473L824 471M824 471L818 473L813 476M811 497L814 496L817 492M809 474L811 476L813 476M835 513L834 502L834 493M821 452L823 460L824 471M763 187L764 181L764 173M782 166L775 168L766 170M764 173L765 170L766 170M742 191L740 180L738 171M742 191L735 193L731 196M731 196L723 192L719 188M738 171L730 170L723 170M719 188L719 183L718 176M723 170L721 173L718 176M753 194L747 192L742 191M740 169L753 170L764 173M740 169L739 169L738 171M726 213L728 203L731 196M719 217L714 214L707 212M719 188L712 192L703 197M707 212L706 204L703 197M696 238L696 236L694 236M707 212L701 216L692 221M694 236L694 228L692 221M795 142L791 135L791 128M814 144L814 137L817 128M791 128L794 124L798 122M817 128L808 125L798 122M545 365L545 356L545 346M520 352L531 350L544 345M544 345L545 346L545 346M518 331L522 328L529 327M529 327L533 329L540 328M544 345L541 336L540 328M535 299L531 302L528 304M535 299L539 302L544 305M544 305L545 315L544 325M528 304L528 315L529 327M540 328L541 328L544 325M662 409L661 399L658 390M682 390L671 388L663 387M658 390L659 390L663 387M637 395L644 392L648 387M658 390L653 389L648 387M684 368L675 368L666 367M663 387L665 378L666 367M799 325L790 325L782 328M799 325L802 314L806 306M782 328L781 319L782 310M803 303L806 305L806 306M803 303L796 306L787 306M787 306L786 309L782 310M805 329L801 326L799 325M782 328L782 329L782 328M817 308L811 308L806 306M768 300L776 306L782 310M802 285L801 295L803 303M783 285L786 295L787 306M715 517L716 522L714 529M736 530L733 539L727 546M727 546L727 544L724 545M714 529L718 537L724 545M675 492L671 504L670 516M697 514L695 520L689 522M689 522L679 518L670 516M698 540L707 534L714 529M698 540L692 538L690 533M689 522L689 527L690 533M649 508L658 514L665 519M665 519L666 518L670 516M686 561L695 555L700 547M686 561L689 568L689 573M689 573L698 574L703 576M709 551L705 550L700 547M709 551L710 562L710 572M710 572L707 575L703 576M698 540L700 544L700 547M724 545L718 547L709 551M705 591L703 584L703 576M686 599L681 594L679 590M689 573L688 576L684 577M679 590L682 583L684 577M665 612L662 603L662 594M679 590L672 592L662 594M637 596L649 595L659 592M662 594L660 593L659 592M660 -13L660 -4L659 7M660 -13L670 -11L681 -6M681 -6L681 -0L684 7M684 7L677 11L667 13M667 13L663 9L659 7M657 -16L659 -15L660 -13M640 9L650 9L659 7M689 31L688 20L688 9M689 31L687 34L684 35M684 35L674 32L663 30M663 30L667 20L667 13M688 9L687 9L684 7M662 31L661 29L663 30M673 77L681 74L686 68M673 77L665 72L660 66M660 66L663 60L663 53M663 53L674 54L682 53M682 53L684 54L687 58M687 58L688 62L686 68M686 68L688 69L686 68M684 35L683 45L682 53M660 49L661 51L663 53M706 -16L695 -15L685 -15M688 9L695 8L705 7M705 7L705 -1L708 -13M708 -13L708 -15L706 -16M681 -6L682 -10L685 -15M715 14L710 11L705 7M715 14L722 10L733 6M733 6L733 -1L733 -10M708 -13L719 -15L730 -14M733 -10L732 -12L730 -14M566 30L553 29L543 30M566 52L566 51L566 52M543 30L542 41L544 50M566 52L556 52L548 53M544 50L546 51L548 53M395 -16L406 -15L414 -12M417 -15L415 -12L414 -12M433 -6L433 1L434 8M433 -6L425 -9L417 -15M434 8L423 6L411 5M411 5L411 -3L414 -12M395 -16L394 -15L393 -12M393 -12L383 -11L374 -11M349 -12L359 -7L370 -4M370 -4L373 -7L374 -11M441 64L436 70L429 76M433 45L436 50L442 54M433 45L423 51L415 56M429 76L422 72L413 68M413 68L413 66L412 66M415 56L414 61L412 66M311 72L315 68L316 67M317 85L322 87L329 87M316 67L327 68L337 69M337 69L335 77L329 87M336 98L337 96L336 96M329 87L332 92L336 96M372 113L374 112L377 110M357 104L359 94L362 82M377 110L379 99L381 89M381 89L373 87L362 82M390 113L399 104L406 98M390 113L393 117L397 125M397 125L403 126L409 128M409 103L408 102L406 98M409 103L411 116L411 127M409 128L409 128L411 127M377 110L384 112L390 113M402 90L405 91L405 96M402 90L396 88L387 86M405 96L404 97L406 98M381 89L384 89L387 86M382 135L391 130L397 125M391 149L400 147L408 143M408 143L409 135L409 128M431 124L433 117L435 109M431 124L421 126L411 127M435 109L421 107L409 103M565 15L562 11L559 6M543 30L541 28L539 28M539 28L537 21L537 13M537 13L547 9L559 6M569 -13L574 -12L580 -9M569 -13L563 -8L559 -3M559 6L560 2L559 -3M488 -11L494 -12L503 -13M433 -6L438 -14L442 -19M830 12L829 8L825 2M828 -4L826 -3L825 2M818 -21L818 -21L818 -20M818 -20L823 -13L828 -4M694 87L689 78L686 68M694 87L699 87L708 85M686 68L697 70L708 73M708 85L707 78L708 73M725 38L727 42L727 45M725 38L720 34L715 30M727 45L721 51L712 59M704 35L709 31L715 30M704 35L703 45L701 53M701 53L706 56L712 59M739 52L739 59L739 66M739 52L732 48L727 45M739 66L733 69L728 72M728 72L722 67L713 65M713 65L713 62L712 59M689 31L696 33L704 35M715 14L715 21L715 30M687 58L695 55L701 53M708 73L711 68L713 65M208 31L208 41L210 52M229 52L230 54L229 53M229 53L221 53L210 52M245 70L240 69L234 69M229 53L231 60L234 69M186 50L199 52L209 54M210 52L210 52L209 54M408 172L418 169L427 168M408 172L411 158L412 146M427 168L428 158L429 151M412 146L420 149L429 151M408 143L409 145L412 146M406 174L407 174L408 172M437 146L433 148L429 151M437 146L435 138L435 130M431 124L434 126L435 130M515 283L520 283L524 282M535 299L534 292L535 288M511 303L520 304L528 304M524 282L530 286L535 288M495 240L496 253L499 263M495 240L487 240L478 241M478 241L477 241L478 241M478 241L477 250L474 256M482 267L478 262L474 256M268 31L272 29L276 25M289 48L285 38L285 27M276 25L281 26L285 27M262 258L269 258L274 261M295 259L294 262L292 262M281 238L278 250L276 260M669 219L675 219L682 217M669 219L669 226L667 235M682 217L686 219L692 221M694 236L684 240L675 241M667 235L672 239L675 241M671 327L672 318L675 309M698 308L698 305L695 305M675 309L685 306L695 305M698 288L697 288L696 290M695 305L694 296L696 290M545 346L555 345L565 345M544 325L554 324L562 325M562 325L564 336L565 345M590 356L583 350L578 344M565 365L565 355L566 345M578 344L571 345L566 345M566 345L565 347L565 345M562 325L562 323L564 323M578 344L583 335L586 329M586 329L574 325L564 323M548 718L548 729L546 737M563 743L562 743L560 745M560 745L553 742L546 737M510 736L520 740L531 746M511 720L516 720L523 720M523 720L530 733L534 742M534 742L533 743L531 746M525 719L524 719L523 720M546 737L540 740L534 742M780 595L777 593L777 590M758 614L757 603L757 592M757 592L768 592L777 590M816 721L815 721L815 719M816 721L814 727L815 734M815 719L805 717L797 713M815 734L809 737L802 739M802 739L797 736L795 736M795 736L793 729L790 721M790 721L795 717L797 713M820 696L818 707L815 719M823 741L820 737L815 734M795 705L796 710L797 713M803 759L802 749L802 739M778 746L785 742L795 736M773 720L782 720L790 721M740 169L741 163L743 157M766 170L761 159L756 149M743 157L749 153L756 149M719 153L722 160L723 170M719 153L725 151L728 147M743 157L734 152L728 147M719 153L714 150L708 150M708 150L712 139L714 125M732 128L722 126L714 124M732 128L734 128L733 129M728 147L731 139L733 129M714 125L712 125L714 124M734 107L723 107L713 104M734 107L735 105L739 102M739 102L737 98L738 94M738 94L731 91L725 86M725 86L721 89L714 91M713 104L714 97L714 91M732 128L733 117L734 107M714 124L714 116L712 105M712 105L713 103L713 104M745 87L756 90L765 92M745 87L743 90L738 94M751 108L745 105L739 102M751 108L758 104L764 100M765 92L765 96L764 100M746 71L741 68L739 66M746 71L746 80L745 87M728 72L726 79L725 86M708 85L712 89L714 91M660 355L661 362L664 366M660 355L654 350L648 348M664 366L656 370L645 374M645 350L643 360L639 370M645 350L645 349L648 348M639 370L643 371L645 374M670 348L666 351L660 355M666 367L666 365L664 366M667 329L663 329L658 330M649 338L648 344L648 348M648 387L645 380L645 374M627 350L637 351L645 350M627 350L622 354L617 359M625 371L632 371L639 370M627 350L626 338L623 329M630 325L626 327L623 329M690 533L682 537L676 543M686 561L681 558L674 552M674 552L676 547L676 543M665 519L662 525L661 527M676 543L670 535L661 527M639 527L645 529L653 533M653 533L658 530L661 527M694 87L693 88L691 91M673 77L673 80L672 83M672 83L680 86L691 91M519 71L508 68L500 66M519 71L522 68L526 62M526 62L525 58L526 57M500 66L500 59L499 54M522 52L512 52L504 52M522 52L524 55L526 57M504 52L502 52L499 54M523 35L522 42L522 52M523 35L518 33L514 29M506 30L511 31L514 29M506 30L506 41L504 52M539 28L531 31L523 35M544 50L534 55L526 57M562 87L562 81L563 73M562 87L556 88L551 91M563 73L555 72L547 70M551 91L545 88L540 85M540 85L539 80L541 74M541 74L543 73L547 70M566 52L567 60L569 67M569 67L565 71L563 73M548 53L547 63L547 70M526 62L532 69L541 74M489 50L493 53L499 54M489 50L485 52L482 53M482 53L482 63L482 70M500 66L498 67L498 68M498 68L491 68L482 70M465 52L473 52L482 53M465 71L470 73L476 78M482 70L478 74L476 78M451 108L443 109L435 109M451 108L454 99L454 89M435 109L434 99L432 87M452 85L455 87L454 89M452 85L443 86L432 86M432 86L432 86L432 87M435 130L450 127L464 125M435 109L435 109L435 109M464 125L461 121L461 114M461 114L454 110L451 108M474 100L475 97L474 93M474 100L466 106L461 114M474 93L464 89L454 89M405 96L418 91L432 87M455 75L455 79L452 85M474 93L477 88L479 85M476 78L478 80L479 85M429 76L431 82L432 86M413 68L406 81L402 90M434 8L435 9L435 10M435 10L445 8L455 8M461 -5L451 -14L442 -19M461 -5L460 -0L459 6M459 6L455 6L455 8M430 29L432 18L435 10M430 29L430 32L433 33M433 33L443 31L454 32M455 8L455 19L454 32M463 50L462 43L464 38M433 45L434 39L433 33M464 38L459 35L454 32M346 -9L350 1L353 8M330 -6L330 1L329 9M329 9L340 10L349 14M353 8L352 11L349 14M411 5L407 5L406 7M430 29L422 28L411 28M411 28L407 19L406 7M393 -12L395 -3L397 5M406 7L401 5L397 5M412 66L400 66L389 64M387 86L387 77L388 66M389 64L388 64L388 66M337 69L340 70L339 68M336 96L345 86L356 79M356 79L349 72L339 68M362 82L363 81L361 80M356 79L358 79L361 80M388 66L376 68L364 71M361 80L361 76L364 71M542 -12L551 -7L559 -3M520 -14L515 -10L509 -9M520 -14L525 -9L532 -2M509 -9L510 -3L512 6M531 6L530 3L532 -2M531 6L524 8L518 9M518 9L514 9L512 6M503 -13L507 -11L509 -9M542 -12L536 -7L532 -2M537 13L533 9L531 6M514 29L517 20L518 9M489 3L495 7L498 10M489 3L482 10L473 16M498 10L496 17L497 27M476 27L474 20L473 16M476 27L481 29L487 31M487 31L493 29L497 27M488 -11L488 -10L487 -10M487 -10L489 -3L489 3M512 6L505 8L498 10M487 -10L476 -10L465 -9M461 -5L463 -7L465 -9M459 6L467 11L473 16M506 30L503 29L497 27M464 38L470 32L476 27M489 50L487 40L487 31M818 -20L810 -13L804 -7M789 -11L795 -10L804 -7M825 2L819 2L810 5M804 -7L806 -2L810 5M766 31L767 21L765 13M766 31L758 31L751 32M751 32L747 29L743 24M756 9L761 9L765 13M756 9L751 12L743 13M743 13L742 19L743 24M746 48L744 51L739 52M746 48L750 40L751 32M725 38L734 31L743 24M733 6L739 10L743 13M225 88L218 90L209 92M225 88L225 84L226 79M226 79L216 71L207 66M209 92L208 80L204 69M204 69L207 69L207 66M206 94L209 93L209 92M227 89L225 89L225 88M234 69L229 75L226 79M209 54L207 60L207 66M408 192L414 193L418 197M427 168L432 172L435 176M418 197L428 193L437 187M435 176L435 183L437 187M437 146L442 147L447 149M435 176L442 169L452 164M447 149L448 156L452 164M447 194L441 189L437 187M447 194L451 193L458 195M458 195L457 180L458 167M452 164L454 164L458 167M295 51L298 49L304 46M316 67L316 60L317 52M317 52L310 49L304 46M283 3L278 8L275 12M283 3L283 -1L284 -4M278 -9L269 -8L256 -5M278 -9L279 -6L284 -4M275 12L264 7L256 5M256 5L255 3L255 4M255 4L255 -0L255 -4M256 -5L255 -4L255 -4M256 -24L256 -13L256 -5M302 -11L294 -6L284 -4M257 29L256 16L256 5M276 25L276 20L275 12M240 12L246 8L255 4M234 -10L245 -7L255 -4M667 235L659 240L653 242M675 241L675 250L676 256M653 242L654 251L655 261M655 261L657 262L659 264M659 264L667 261L676 256M693 259L691 261L686 262M696 290L690 286L683 280M683 280L685 272L686 262M686 262L682 261L676 256M673 308L671 297L667 283M673 308L660 307L649 306M649 306L648 299L648 292M648 292L656 288L665 282M665 282L666 283L667 283M675 309L675 309L673 308M683 280L676 280L667 283M648 308L647 307L649 306M659 264L663 275L665 282M589 328L590 318L592 311M589 328L596 332L604 338M604 338L611 333L617 328M617 328L611 319L606 308M592 311L597 308L603 307M603 307L603 308L606 308M604 339L605 339L604 338M586 329L589 330L589 328M623 329L618 327L617 328M635 314L628 306L621 298M621 298L613 302L606 308M507 759L514 761L523 759M531 746L530 749L530 754M523 759L527 757L530 754M506 784L517 785L526 783M523 759L524 770L526 783M528 798L527 792L526 784M526 783L525 785L526 784M800 570L789 571L780 575M776 548L774 550L773 553M773 553L775 563L780 575M777 590L776 584L778 578M780 575L779 575L778 578M735 613L736 605L736 598M757 592L754 591L750 588M750 588L743 592L736 598M710 598L718 594L728 592M728 592L733 594L736 598M710 572L716 573L724 574M728 592L725 583L724 574M772 146L763 146L757 148M772 146L776 134L780 125M757 148L754 140L751 130M775 121L779 124L780 125M775 121L762 125L752 129M752 129L751 130L751 130M781 153L777 151L772 146M756 149L757 148L757 148M791 128L784 127L780 125M733 129L742 129L751 130M798 122L800 116L801 109M801 109L795 104L789 102M789 102L783 109L775 115M775 115L776 118L775 121M751 108L752 118L752 129M775 115L769 109L764 100M714 125L703 126L693 125M712 105L701 106L691 107M693 125L694 116L691 107M691 91L690 96L689 104M691 107L689 104L689 104M669 219L669 220L668 218M668 218L657 219L647 217M653 242L649 238L643 236M647 217L646 227L643 236M598 218L608 219L620 222M598 218L597 230L595 240M600 244L597 243L595 240M600 244L613 240L625 239M620 222L623 230L625 239M708 150L703 151L700 152M700 152L694 151L691 147M693 125L690 129L690 130M691 147L692 140L690 130M718 176L709 175L701 171M700 152L698 160L699 169M701 171L700 169L699 169M703 197L699 195L694 191M701 171L697 180L694 191M682 217L683 205L685 192M694 191L691 191L685 192M669 554L658 553L650 550M669 554L667 562L664 572M646 568L652 572L658 576M646 568L647 562L644 555M644 555L649 552L650 550M664 572L661 574L658 576M674 552L670 553L669 554M653 533L651 541L650 550M684 577L675 575L664 572M635 579L641 574L646 568M659 592L658 583L658 576M630 551L636 553L644 555M614 55L613 62L613 72M594 52L595 58L593 66M613 72L613 74L609 76M609 76L602 72L593 66M569 67L575 71L583 72M593 66L588 69L583 72M571 93L578 90L585 87M571 93L572 101L571 108M591 109L588 99L586 88M591 109L585 111L578 113M585 87L585 88L586 88M571 108L573 111L578 113M562 87L566 89L571 93M583 72L586 79L585 87M606 103L606 96L607 87M606 103L600 107L593 109M593 109L591 108L591 109M607 87L595 86L586 88M609 85L609 81L609 76M609 85L609 85L607 87M530 125L530 114L528 106M530 125L540 125L551 127M528 106L539 107L550 107M551 127L553 120L554 113M554 113L554 108L550 107M525 143L528 147L533 149M525 143L523 136L524 130M533 149L543 146L554 145M552 128L552 136L554 145M552 128L552 127L551 127M524 130L527 127L530 125M552 128L565 129L577 127M577 127L578 121L578 113M571 108L563 109L554 113M551 91L552 98L550 107M370 -4L369 -1L370 -0M397 5L392 8L389 11M389 11L379 4L370 -0M353 8L360 5L367 4M370 -0L369 3L367 4M404 43L394 49L386 54M404 43L403 39L404 34M404 34L396 29L385 26M378 49L382 50L386 54M378 49L382 37L382 28M382 28L384 26L385 26M415 56L409 49L404 43M389 64L386 59L386 54M411 28L408 32L404 34M389 11L387 18L385 26M364 71L363 60L363 51M363 51L372 51L378 49M369 24L367 15L367 4M369 24L376 26L382 28M339 68L341 61L341 53M363 51L358 48L354 46M341 53L348 50L354 46M317 52L324 49L330 47M341 53L335 51L330 47M369 24L362 29L355 30M354 46L356 40L355 30M349 14L352 22L352 28M355 30L354 28L352 28M755 -12L756 -10L757 -9M757 -9L769 -9L784 -7M784 -8L785 -8L784 -7M733 -10L742 -11L755 -12M756 9L756 -1L757 -9M782 5L782 -1L784 -7M782 5L775 8L765 13M789 -11L786 -8L784 -8M810 5L810 5L808 8M782 5L784 6L785 9M808 8L796 10L785 9M823 124L823 118L821 109M817 128L818 124L823 124M801 109L805 106L811 102M811 102L815 107L821 109M811 102L811 98L811 91M811 91L810 89L813 88M813 88L821 87L832 83M832 83L833 76L832 71M805 69L806 68L808 65M805 69L809 78L813 88M832 71L832 69L830 68M830 68L820 65L808 65M811 91L801 91L790 90M805 69L798 69L793 70M793 70L791 80L790 90M789 102L789 97L787 92M765 92L766 91L769 88M769 88L777 91L787 92M787 92L787 89L790 90M504 265L510 261L515 258M524 282L527 270L528 262M528 262L521 259L515 258M504 234L508 236L513 240M504 234L498 237L495 240M515 258L515 250L513 240M503 219L503 218L503 218M503 219L503 227L504 234M503 218L515 219L528 219M528 219L525 227L525 237M513 240L519 237L525 237M503 218L510 207L514 194M519 192L516 192L514 194M519 192L519 192L520 193M528 219L529 217L530 217M530 217L524 203L520 193M547 173L539 169L532 168M547 173L545 182L544 192M532 168L527 168L523 171M523 171L521 182L519 192M544 192L531 193L520 193M489 196L484 190L480 186M489 196L490 205L489 213M480 186L469 191L460 196M489 213L483 215L479 217M479 217L473 213L464 211M460 196L462 202L464 211M503 219L496 217L489 213M514 194L513 193L510 192M510 192L501 196L489 196M478 241L477 230L479 217M478 241L467 237L457 233M457 220L457 226L457 233M457 220L460 217L464 211M434 218L447 219L457 220M434 218L441 207L447 194M458 195L459 196L460 196M564 323L567 315L567 308M592 311L586 305L577 301M577 301L571 306L567 308M544 305L550 303L554 302M554 302L561 304L567 308M598 283L601 294L603 307M598 283L596 282L590 279M577 301L577 296L578 288M590 279L584 284L578 288M600 244L602 249L601 258M595 240L589 240L586 242M601 258L596 264L591 268M586 242L580 248L576 258M591 268L582 262L576 258M389 269L398 266L408 260M408 260L409 260L411 262M384 241L385 240L387 239M408 260L407 250L406 241M406 241L397 240L387 239M371 219L377 219L380 219M387 239L382 227L380 219M403 195L401 204L398 213M380 197L381 209L380 218M398 213L388 215L380 218M380 219L380 220L380 218M328 10L331 20L331 29M328 10L318 12L307 16M307 28L317 30L328 34M307 28L306 26L304 22M331 29L330 33L328 34M304 22L304 21L305 19M307 16L307 18L305 19M329 9L329 9L328 10M352 28L341 29L331 29M304 -9L305 5L307 16M304 46L306 38L307 28M330 47L329 41L328 34M285 27L295 26L304 22M283 3L293 12L305 19M627 256L637 260L643 265M627 256L622 260L617 266M643 265L640 274L637 284M617 266L617 272L617 280M637 284L631 284L624 287M624 287L622 282L617 280M655 261L649 262L643 265M643 236L634 237L627 240M627 240L626 247L627 256M601 258L608 261L617 266M625 239L626 241L627 240M648 292L642 289L637 284M598 283L608 282L617 280M590 279L590 273L591 268M621 298L621 292L624 287M552 784L548 783L544 779M552 784L560 781L567 778M544 779L543 772L542 763M542 763L551 760L559 755M559 755L564 760L567 768M567 768L568 772L567 778M550 799L550 791L552 784M526 784L534 781L544 779M577 786L571 782L567 778M530 754L535 758L542 763M560 745L561 749L559 755M585 757L575 761L567 768M752 570L753 566L756 559M752 570L752 572L749 574M749 574L741 570L731 569M756 559L751 553L748 549M748 549L740 550L731 549M731 549L730 560L731 569M773 553L764 556L756 559M778 578L766 575L752 570M750 588L750 580L749 574M724 574L726 571L731 569M755 533L753 542L748 549M727 546L730 548L731 549M647 217L644 215L644 213M620 222L623 219L624 216M624 216L634 215L644 213M691 147L685 150L679 151M679 151L677 161L675 171M699 169L688 170L675 171M675 171L675 173L675 171M685 192L681 190L678 189M675 171L675 179L678 189M668 218L665 207L664 196M678 189L670 194L664 196M645 195L645 204L644 213M645 195L649 192L651 192M664 196L657 195L651 192M672 83L670 88L666 91M689 104L678 107L670 106M670 106L666 97L666 91M650 72L643 68L637 67M650 72L649 81L651 87M651 87L649 87L647 90M647 90L640 87L631 86M631 86L633 78L632 71M637 67L634 70L632 71M635 53L635 61L637 67M660 66L654 68L650 72M666 91L658 90L651 87M613 72L622 71L632 71M625 91L628 87L631 86M625 91L617 88L609 85M690 130L680 128L669 125M670 106L668 109L666 111M669 125L669 118L666 111M577 127L580 129L580 132M593 109L594 116L598 124M580 132L590 130L598 124M580 169L579 157L582 146M580 169L573 171L564 171M555 147L567 145L580 144M555 147L556 158L556 168M580 144L581 146L582 146M556 168L561 171L564 171M554 145L554 148L555 147M580 132L580 138L580 144M547 173L551 171L556 168M532 168L531 159L533 149M600 147L592 147L582 146M600 147L604 139L607 130M598 124L604 127L607 130M608 158L607 161L608 164M608 158L603 152L600 147M580 169L585 171L588 175M588 175L599 169L608 164M511 105L505 105L499 104M511 105L518 103L523 99M518 84L508 85L499 84M518 84L521 90L524 93M499 104L496 95L496 88M524 93L523 94L523 99M496 88L496 86L499 84M513 126L512 116L511 105M513 126L505 127L500 130M492 111L494 108L499 104M492 111L490 116L490 121M490 121L495 127L500 130M524 130L518 127L513 126M528 106L527 102L523 99M519 71L519 79L518 84M498 68L497 76L499 84M540 85L532 88L524 93M474 100L481 105L492 111M479 85L488 88L496 88M830 12L830 20L826 25M808 8L808 17L809 29M809 29L818 28L826 25M826 25L828 27L832 30M832 30L831 40L832 48M830 68L831 60L830 50M832 48L832 48L830 50M763 52L762 62L759 70M763 52L764 50L766 50M766 50L775 54L781 55M759 70L762 74L769 78M769 78L776 72L784 65M781 55L783 61L784 65M746 48L756 49L763 52M746 71L753 70L759 70M766 31L766 31L767 31M767 31L766 42L766 50M769 88L770 84L769 78M793 70L788 66L784 65M786 50L786 40L787 32M786 50L797 51L809 50M808 30L808 40L810 48M808 30L798 30L791 28M791 28L789 29L787 32M809 50L811 49L810 48M767 31L777 33L787 32M781 55L785 51L786 50M808 65L809 56L809 50M809 29L809 29L808 30M830 50L821 49L810 48M785 9L789 19L791 28M530 217L537 216L544 216M544 192L544 194L547 196M544 216L546 205L547 196M564 171L565 185L568 197M547 196L557 198L568 197M525 237L533 240L540 244M548 221L546 219L544 216M548 221L550 228L550 237M550 237L545 241L540 244M528 262L533 261L537 258M540 244L539 253L537 258M406 241L408 241L408 240M398 213L406 220L411 226M411 226L409 231L408 240M418 197L419 207L424 216M411 226L417 220L424 216M434 218L433 217L433 218M424 216L428 217L433 218M679 151L675 148L669 147M669 125L668 125L669 125M669 147L668 136L669 125M603 197L597 193L589 187M603 197L600 206L597 216M589 187L581 193L572 199M597 216L587 214L576 214M572 199L571 205L574 212M576 214L573 213L574 212M588 175L588 182L589 187M568 197L570 198L572 199M598 218L596 218L597 216M574 233L580 236L586 242M574 233L575 225L576 214M548 221L560 217L574 212M574 233L567 235L559 240M550 237L554 238L559 240M628 172L622 172L616 171M628 172L632 182L637 192M616 171L614 181L611 194M637 192L628 194L621 199M621 199L616 196L611 194M608 164L612 168L616 171M603 197L606 196L611 194M624 216L622 207L621 199M645 195L642 193L637 192M470 151L476 148L483 146M470 151L464 146L461 141M483 146L478 136L475 128M461 141L464 134L465 127M465 127L470 128L475 128M447 149L453 144L461 141M458 167L463 166L470 164M470 164L470 156L470 151M464 125L464 125L465 127M490 121L482 124L475 128M484 173L492 173L497 173M484 173L485 173L484 172M484 172L487 162L490 149M497 173L503 167L511 163M510 153L510 157L511 163M510 153L504 148L498 145M498 145L493 147L490 149M510 192L503 183L497 173M480 186L481 179L484 173M470 164L476 169L484 172M483 146L486 147L490 149M523 171L516 167L511 163M525 143L517 149L510 153M500 130L499 138L498 145M548 268L557 263L566 256M548 268L548 274L550 278M550 278L552 280L555 281M555 281L562 280L569 282M569 282L569 270L571 259M571 259L567 258L566 256M559 240L561 248L566 256M537 258L542 264L548 268M535 288L543 284L550 278M554 302L554 292L555 281M578 288L574 285L569 282M576 258L575 258L571 259M455 260L454 263L453 263M455 260L450 251L448 242M448 242L443 241L437 240M430 261L431 251L434 242M437 240L437 241L434 242M474 256L464 257L455 260M457 233L453 236L448 242M433 218L436 228L437 240M408 240L421 242L434 242M620 126L623 128L624 129M620 126L619 118L620 112M624 129L634 128L642 126M620 112L623 108L627 104M627 104L635 106L644 105M642 126L646 118L648 110M644 105L647 109L648 110M608 158L617 151L627 145M607 130L614 126L620 126M627 145L627 137L624 129M606 103L612 109L620 112M625 91L626 97L627 104M647 90L647 96L644 105M666 111L658 111L648 110M669 125L658 130L649 134M649 134L645 129L642 126M659 169L658 171L654 174M659 169L657 161L656 151M654 174L644 170L635 166M656 151L651 151L650 148M650 148L644 152L637 153M635 166L635 158L637 153M675 171L666 171L659 169M651 192L651 184L654 174M669 147L664 148L656 151M628 172L631 169L635 166M649 134L650 140L650 148M627 145L632 148L637 153"/>
<path clip-path="url(#csw)" d="M-50 -25L-21 -27L21 -25L55 -23L90 -26L122 -25L163 -27L196 -25L224 -27L257 -25L283 -26L314 -24L344 -24L387 -25L421 -23L460 -25L486 -25L517 -25L557 -23M-50 16L-32 14L-21 16L10 15L21 12L38 14L55 14L73 12L90 14L108 14L122 16L142 14L163 15L184 13L196 12L224 14L227 15L257 14L263 13L283 12L306 12L314 14L337 14L344 14L368 14L387 12L412 14L421 13L443 14L460 14L486 13L513 14L517 12L543 12L557 14M-32 55L-21 52L8 54L10 55L34 53L38 54L62 53L73 55L97 52L108 53L126 53L142 53L154 53L184 53L192 55L219 52L227 51L263 55L304 52L306 51L337 54L346 53L368 53L388 51L412 55L431 53L443 53L472 53L486 53L503 54L513 54L528 55L543 53L554 51L580 53M-41 87L-21 87L-9 84L8 85L18 86L34 86L51 84L62 83L88 84L97 86L125 85L126 87L150 87L154 84L183 87L192 84L219 85L222 85L250 85L263 85L282 85L304 84L322 85L346 86L363 84L388 84L393 85L420 85L431 85L449 87L472 85L489 83L503 86L528 85L554 86L556 85L580 86M-41 117L-35 117L-9 118L-3 117L18 117L23 119L51 118L55 119L88 119L90 116L125 116L133 116L150 116L158 119L183 117L198 115L222 119L231 116L250 116L260 117L282 116L300 117L322 117L325 115L354 118L363 119L388 118L393 116L419 116L420 117L449 117L458 118L484 118L489 115L518 118L528 117L545 117L556 118L571 115M-35 143L-24 144L-3 146L8 146L23 144L52 146L55 146L90 144L96 144L126 142L133 143L155 145L158 144L188 145L198 144L217 143L231 145L256 143L260 143L290 144L300 146L325 145L327 145L354 144L360 146L388 144L389 143L416 144L419 145L444 144L458 144L477 144L484 144L511 143L518 145L537 144L545 144L570 144L571 146M-48 180L-24 180L-15 178L8 181L11 182L47 179L52 180L83 179L96 180L116 181L126 178L152 178L155 180L188 178L193 178L217 180L222 178L254 180L256 179L290 181L293 180L320 181L327 180L358 178L360 180L386 181L389 181L416 180L444 180L457 182L477 178L496 179L511 182L529 180L537 178L568 180L570 182M-48 216L-37 212L-15 214L6 216L11 213L47 213L82 214L83 212L112 215L116 216L140 214L152 214L183 213L193 216L210 212L222 214L240 214L254 212L276 216L293 212L302 216L320 216L345 214L358 215L383 212L386 214L416 214L424 216L457 212L458 212L495 212L496 214L521 213L529 215L561 212L568 213M-40 247L-37 247L-11 247L6 248L20 247L47 247L52 248L82 247L92 247L112 248L135 246L140 245L164 249L183 247L207 248L210 245L240 247L244 246L272 245L276 247L302 247L312 249L343 247L345 245L368 247L383 247L401 246L424 247L428 245L458 248L470 247L495 247L499 246L521 247L528 249L555 246L561 248M-40 280L-27 282L-11 280L12 278L20 278L52 282L54 282L82 281L92 280L112 279L135 281L141 281L164 280L174 280L207 279L239 280L244 281L272 280L274 282L312 281L317 280L343 279L352 281L368 278L380 282L401 282L414 280L428 280L450 280L470 280L484 280L499 281L514 280L528 279L546 282L555 280L577 280M-33 322L-27 321L-2 320L12 319L25 320L52 320L54 320L82 321L112 320L118 319L141 322L155 321L174 320L187 320L207 318L228 319L239 319L271 318L274 320L303 320L317 320L344 319L352 322L379 318L380 320L408 319L414 321L436 320L450 320L470 318L484 320L508 320L514 320L540 320L546 319L577 318L578 319M-33 345L-31 347L-2 347L6 346L25 345L46 349L52 345L74 345L82 348L111 347L118 348L142 348L155 345L185 349L187 347L221 348L228 345L264 349L271 346L303 348L304 347L340 349L344 347L371 347L379 347L401 345L408 347L431 347L436 349L458 348L470 347L502 347L508 347L540 347L542 347L578 348L580 345M-36 386L-31 385L1 388L6 386L30 386L46 384L73 387L74 387L98 386L111 386L131 386L142 384L164 387L185 386L207 385L221 386L243 384L264 386L279 384L304 385L312 387L340 386L349 388L371 384L375 387L401 384L416 385L431 388L458 387L459 385L492 388L502 387L526 386L542 386L561 388L580 386M-43 423L-36 422L-12 423L1 425L17 423L30 425L60 422L73 424L88 423L98 424L128 423L131 423L163 421L164 423L193 425L207 421L222 423L243 423L250 423L279 423L286 425L312 423L321 423L348 421L349 423L375 425L384 424L411 422L416 423L454 424L459 424L492 421L495 425L525 421L526 422L561 423L562 422M-43 452L-39 449L-12 451L4 453L17 452L43 452L60 450L86 453L88 451L122 452L128 453L162 451L163 450L189 451L193 451L216 451L222 453L243 453L250 449L283 449L286 452L321 451L325 451L348 451L353 453L384 453L387 452L411 451L428 451L454 449L466 451L495 451L499 451L525 452L542 451L562 450M-39 478L-38 476L-3 478L4 480L33 476L43 477L69 476L86 476L109 478L122 478L149 478L162 478L176 479L189 478L216 478L218 476L243 478L252 478L283 480L292 480L321 478L325 478L353 477L386 478L387 477L428 477L430 477L466 478L473 478L499 480L512 478L542 478L575 479M-39 515L-38 517L-3 515L1 513L33 517L59 517L69 515L90 513L109 517L121 515L149 516L153 517L176 514L184 515L216 515L218 515L252 515L257 516L283 514L292 516L314 515L321 515L350 515L353 514L380 516L386 516L418 515L430 516L457 514L473 514L489 515L512 516L527 515L542 514L558 514L575 517M-39 554L-23 552L1 551L12 554L33 554L47 554L59 552L86 552L90 551L115 551L121 554L153 554L184 554L188 554L216 552L230 554L257 551L271 554L283 552L312 554L314 552L347 552L350 552L378 552L380 552L418 552L451 554L457 551L482 554L489 554L513 551L527 550L555 551L558 553M-40 592L-23 592L-1 592L12 591L36 591L47 593L77 591L86 591L103 592L115 592L138 589L153 591L176 593L188 590L207 593L230 591L249 589L271 592L277 593L310 591L312 591L338 591L347 589L375 591L378 591L415 591L418 593L443 591L451 591L482 590L485 591L513 589L519 590L555 589L560 593M-40 627L-29 628L-1 625L3 626L36 627L77 629L78 629L103 627L108 629L138 625L147 628L176 629L186 629L207 627L228 625L249 627L269 628L277 627L305 629L310 628L331 628L338 626L374 628L375 628L415 627L416 628L443 626L453 629L485 627L510 627L519 628L547 627L560 627M-29 657L-24 658L3 657L6 654L36 656L48 655L78 656L89 658L108 654L132 658L147 656L170 657L186 656L206 656L228 657L242 657L269 657L277 656L305 656L311 656L331 655L352 658L374 656L380 656L416 657L421 657L453 658L455 656L485 654L494 655L510 658L536 656L547 654L565 656M-24 692L-20 691L6 693L15 694L43 695L48 693L76 694L89 693L113 692L132 692L155 695L170 693L194 692L206 692L227 693L242 693L268 693L277 692L305 692L311 694L346 693L352 693L380 692L382 695L408 693L421 693L449 691L455 694L484 691L494 694L519 695L536 692L558 693L565 694M-36 726L-20 725L0 727L15 727L32 727L43 726L59 728L76 726L100 727L113 726L129 726L155 726L156 726L182 725L194 726L221 726L227 724L255 724L268 728L293 728L305 725L329 726L346 724L367 727L382 725L408 726L433 727L449 724L463 726L484 726L493 725L519 726L525 726L551 726L558 726M-39 756L-36 755L-12 756L0 756L24 756L32 756L59 756L61 756L87 756L100 758L114 754L129 758L147 757L156 756L182 754L186 755L214 756L221 756L249 756L255 756L274 756L293 756L309 756L329 756L352 756L367 756L380 756L408 754L415 756L433 756L448 756L463 754L475 757L493 756L502 756L525 757L539 758L551 756L571 758M-39 788L-30 786L-12 785L-2 786L24 786L37 788L61 786L80 786L87 786L114 788L122 787L147 788L153 785L180 786L186 786L214 784L223 784L249 786L267 787L274 787L299 786L309 787L338 786L352 787L376 787L380 786L415 788L419 786L448 784L457 788L475 787L483 788L502 785L516 788L539 788L541 786L571 786M-30 822L-23 822L-2 820L10 822L37 824L50 823L80 821L82 823L117 823L122 822L143 822L153 822L178 822L180 822L204 822L223 824L246 822L267 824L288 820L299 822L322 823L338 824L366 822L376 822L394 823L419 820L438 823L457 822L476 820L483 823L509 820L516 822L541 822L552 822M-50 -25V-9H-47V16M-21 -27V16M21 -25V12M55 -23V2H59V14M90 -26V-14H87V14M122 -25V-2H119V16M163 -27V15M196 -25V12M224 -27V14M257 -25V14M283 -26V-9H278V12M314 -24V-7H318V14M344 -24V-1H341V14M387 -25V-12H384V12M421 -23V13M460 -25V-12H464V14M486 -25V-6H481V13M517 -25V12M557 -23V1H554V14M-32 14V41H-28V55M10 15V31H14V55M38 14V54M73 12V27H77V55M108 14V38H103V53M142 14V36H146V53M184 13V27H187V53M227 15V51M263 13V55M306 12V35H301V51M337 14V37H340V54M368 14V53M412 14V35H415V55M443 14V53M486 13V31H483V53M513 14V54M543 12V32H538V53M-21 52V87M8 54V69H5V85M34 53V86M62 53V69H59V83M97 52V73H101V86M126 53V87M154 53V69H149V84M192 55V84M219 52V85M263 55V74H258V85M304 52V74H307V84M346 53V86M388 51V69H383V84M431 53V73H435V85M472 53V85M503 54V74H498V86M528 55V68H532V85M554 51V65H549V86M580 53V86M-41 87V103H-46V117M-9 84V95H-6V118M18 86V98H22V117M51 84V118M88 84V119M125 85V99H122V116M150 87V116M183 87V107H178V117M222 85V108H226V119M250 85V103H245V116M282 85V116M322 85V99H317V117M363 84V96H366V119M393 85V97H396V116M420 85V117M449 87V117M489 83V115M528 85V117M556 85V118M-35 117V134H-40V143M-3 117V146M23 119V132H26V144M55 119V146M90 116V144M133 116V143M158 119V129H153V144M198 115V144M231 116V145M260 117V134H264V143M300 117V146M325 115V132H328V145M354 118V134H357V144M388 118V133H385V144M419 116V133H422V145M458 118V144M484 118V130H488V144M518 118V134H513V145M545 117V125H542V144M571 115V132H575V146M-24 144V166H-29V180M8 146V181M52 146V158H56V180M96 144V165H91V180M126 142V178M155 145V166H159V180M188 145V159H183V178M217 143V168H220V180M256 143V179M290 144V157H285V181M327 145V161H331V180M360 146V180M389 143V168H384V181M416 144V166H413V180M444 144V180M477 144V166H481V178M511 143V182M537 144V178M570 144V182M-48 180V216M-15 178V203H-11V214M11 182V198H14V213M47 179V190H42V213M83 179V212M116 181V216M152 178V214M193 178V194H188V216M222 178V195H217V214M254 180V191H251V212M293 180V202H290V212M320 181V204H315V216M358 178V215M386 181V214M416 180V214M457 182V212M496 179V198H491V214M529 180V215M568 180V213M-37 212V236H-42V247M6 216V231H10V248M47 213V247M82 214V230H85V247M112 215V233H115V248M140 214V231H144V245M183 213V247M210 212V245M240 214V247M276 216V227H273V247M302 216V247M345 214V245M383 212V247M424 216V247M458 212V225H462V248M495 212V247M521 213V227H524V247M561 212V235H564V248M-40 247V280M-11 247V262H-16V280M20 247V265H24V278M52 248V263H49V282M92 247V280M135 246V281M164 249V259H167V280M207 248V279M244 246V260H248V281M272 245V280M312 249V269H309V281M343 247V265H347V279M368 247V265H371V278M401 246V270H398V282M428 245V280M470 247V262H465V280M499 246V260H502V281M528 249V279M555 246V280M-27 282V307H-30V321M12 278V291H16V319M54 282V320M82 281V321M112 279V320M141 281V322M174 280V293H171V320M207 279V318M239 280V303H234V319M274 282V320M317 280V320M352 281V322M380 282V304H377V320M414 280V321M450 280V295H447V320M484 280V298H479V320M514 280V320M546 282V303H550V319M577 280V318M-33 322V345M-2 320V338H2V347M25 320V337H20V345M52 320V345M82 321V337H86V348M118 319V348M155 321V345M187 320V331H191V347M228 319V337H223V345M271 318V346M303 320V331H306V348M344 319V335H348V347M379 318V347M408 319V337H403V347M436 320V329H431V349M470 318V331H467V347M508 320V333H505V347M540 320V347M578 319V348M-31 347V365H-34V385M6 346V386M46 349V384M74 345V387M111 347V360H114V386M142 348V372H145V384M185 349V361H188V386M221 348V366H218V386M264 349V368H261V386M304 347V364H308V385M340 349V361H335V386M371 347V361H375V384M401 345V371H398V384M431 347V373H428V388M458 348V365H455V387M502 347V367H505V387M542 347V386M580 345V363H584V386M-36 386V402H-41V422M1 388V425M30 386V425M73 387V405H76V424M98 386V408H95V424M131 386V411H134V423M164 387V423M207 385V410H210V421M243 384V423M279 384V423M312 387V423M349 388V423M375 387V425M416 385V400H419V423M459 385V424M492 388V410H496V421M526 386V401H530V422M561 388V410H556V423M-43 423V441H-40V452M-12 423V432H-15V451M17 423V440H20V452M60 422V434H55V450M88 423V451M128 423V438H125V453M163 421V450M193 425V451M222 423V443H225V453M250 423V449M286 425V452M321 423V451M348 421V451M384 424V436H387V453M411 422V451M454 424V449M495 425V441H492V451M525 421V452M562 422V436H565V450M-39 449V465H-42V478M4 453V480M43 452V477M86 453V476M122 452V467H125V478M162 451V466H157V478M189 451V478M216 451V468H213V478M243 453V478M283 449V470H280V480M325 451V464H329V478M353 453V463H356V477M387 452V465H390V477M428 451V477M466 451V478M499 451V480M542 451V478M-38 476V503H-43V517M-3 478V493H0V515M33 476V500H36V517M69 476V497H73V515M109 478V517M149 478V500H152V516M176 479V514M218 476V515M252 478V492H256V515M292 480V516M321 478V515M353 477V499H348V514M386 478V492H390V516M430 477V502H434V516M473 478V514M512 478V500H515V516M542 478V514M575 479V495H579V517M-39 515V554M1 513V551M33 517V554M59 517V552M90 513V534H85V551M121 515V537H116V554M153 517V554M184 515V543H188V554M216 515V534H220V552M257 516V539H260V551M283 514V552M314 515V538H309V552M350 515V552M380 516V528H375V552M418 515V552M457 514V551M489 515V554M527 515V528H524V550M558 514V553M-23 552V570H-28V592M12 554V572H9V591M47 554V568H44V593M86 552V576H89V591M115 551V568H110V592M153 554V569H157V591M188 554V568H185V590M230 554V578H227V591M271 554V592M312 554V591M347 552V589M378 552V565H382V591M418 552V565H421V593M451 554V577H455V591M482 554V576H477V590M513 551V566H508V589M555 551V573H550V589M-40 592V609H-45V627M-1 592V610H-6V625M36 591V608H39V627M77 591V629M103 592V627M138 589V605H141V625M176 593V605H173V629M207 593V627M249 589V627M277 593V627M310 591V611H307V628M338 591V607H341V626M375 591V616H379V628M415 591V627M443 591V626M485 591V627M519 590V628M560 593V605H564V627M-29 628V648H-34V657M3 626V638H6V657M36 627V645H33V656M78 629V643H75V656M108 629V643H112V654M147 628V644H142V656M186 629V645H183V656M228 625V642H225V657M269 628V645H273V657M305 629V641H300V656M331 628V655M374 628V644H369V656M416 628V657M453 629V658M485 627V643H489V654M510 627V643H505V658M547 627V654M-24 658V692M6 654V693M48 655V670H45V693M89 658V676H92V693M132 658V672H136V692M170 657V693M206 656V692M242 657V673H239V693M277 656V692M311 656V694M352 658V670H355V693M380 656V671H377V692M421 657V676H418V693M455 656V694M494 655V694M536 656V692M565 656V694M-20 691V706H-23V725M15 694V727M43 695V715H46V726M76 694V726M113 692V704H108V726M155 695V726M194 692V703H189V726M227 693V708H222V724M268 693V728M305 692V725M346 693V704H349V724M382 695V725M408 693V726M449 691V724M484 691V726M519 695V726M558 693V726M-36 726V755M0 727V756M32 727V746H29V756M59 728V743H63V756M100 727V743H97V758M129 726V758M156 726V744H159V756M182 725V738H186V754M221 726V756M255 724V756M293 728V747H297V756M329 726V744H333V756M367 727V736H362V756M408 726V745H411V754M433 727V744H436V756M463 726V741H458V754M493 725V736H490V756M525 726V746H522V757M551 726V745H554V756M-39 756V788M-12 756V785M24 756V773H27V786M61 756V769H65V786M87 756V768H82V786M114 754V788M147 757V772H144V788M186 755V786M214 756V766H218V784M249 756V765H253V786M274 756V777H269V787M309 756V772H313V787M352 756V787M380 756V786M415 756V767H412V788M448 756V773H443V784M475 757V775H470V787M502 756V785M539 758V788M571 758V775H575V786M-30 786V805H-27V822M-2 786V807H1V820M37 788V805H34V824M80 786V802H75V821M122 787V803H125V822M153 785V822M180 786V809H175V822M223 784V824M267 787V811H270V824M299 786V802H296V822M338 786V804H341V824M376 787V808H371V822M419 786V806H414V820M457 788V809H461V822M483 788V804H486V823M516 788V822M541 786V822"/>
</g>
<path d="M299.5 60 L304.5 56.2 L312 58 L315.8 65 L318.2 71.2 L323.2 72.5 L320 77.5 L320.8 85 L323.2 91.2 L322 96.2 L319 87.5 L315.8 81.2 L314.5 72.5 L310.8 65 L305.8 60 L302 62Z" fill="#2b4c72" stroke="#2b4c72" stroke-width="0.6"/>
<path d="M368.2 261.8 L373.2 258.5 L379.5 261.8 L387 266.8 L393.2 271.8 L397 276.8 L392 274.2 L384.5 270 L377 265.5 L370.8 263Z" fill="#2b4c72" stroke="#2b4c72" stroke-width="0.6"/>
<path d="M438.2 376.8 L442 370.5 L447 366.8 L449 363 L452 366.8 L448.2 371.8 L443.2 376.8Z" fill="#2b4c72" stroke="#2b4c72" stroke-width="0.6"/>
<path d="M604 306.8 L607.8 313 L612.8 310.5 L616.5 304.2 L621.5 301.8 L625.2 296.8 L627.8 293 L624 291.8 L621.5 286.8 L618.5 290.5 L616 285.5 L612.8 288 L613.5 296.8 L611.5 303 L607.8 305.5Z" fill="#2b4c72" stroke="#2b4c72" stroke-width="0.6"/>
<path d="M424.5 413.5 L428.2 418.5 L429 427.2 L432 429.8 L430.8 433.5 L427.5 431 L425.8 423.5 L424.5 417.2Z" fill="#2b4c72" stroke="#2b4c72" stroke-width="0.6"/>
<path d="M527 502.2 L530.8 508.5 L532 516 L529.5 523.5 L537 526 L533.2 532.2 L534.5 538.5 L530.8 537.2 L527 531 L525.8 523.5 L528.2 516 L527 508.5Z" fill="#2b4c72" stroke="#2b4c72" stroke-width="0.6"/>
<path d="M537 596 L540 603.5 L541.5 609 L539 609 L537 602.2 L542.5 609 L543.8 615.2 L547.5 619 L552.5 615.2 L557.5 613.5 L563.8 612.8 L563.2 610.2 L555 611 L550 609Z" fill="#2b4c72" stroke="#2b4c72" stroke-width="0.6"/>
<path d="M57.5 691.7 L60.8 690 L64.2 690.8 L65 695.8 L68.3 700 L73.3 703.3 L78.3 704.2 L83.3 705 L85 708.3 L81.7 710 L76.7 707.5 L71.7 706.7 L66.7 704.2 L63.3 701.7 L61.7 697.5 L58.3 695Z" fill="#2b4c72" stroke="#2b4c72" stroke-width="0.6"/>
<path d="M145 696.7 L149.2 695 L152.5 697.5 L154.2 701.7 L152.5 705.8 L148.3 708.3 L146.7 711.7 L143.3 713.3 L140 711.7 L140.8 707.5 L144.2 705.8 L145.8 701.7Z" fill="#2b4c72" stroke="#2b4c72" stroke-width="0.6"/>
<path d="M121.8 659 L123.8 654 L128.8 652 L134.5 654 L136.2 659 L133.8 665.2 L128.8 668.5 L123.8 666.5Z" fill="#2b4c72" stroke="#2b4c72" stroke-width="0.6"/>
<path d="M42.5 681.5 L46.2 680.2 L50 684 L51.8 689 L48 689.5 L44.5 686Z" fill="#2b4c72" stroke="#2b4c72" stroke-width="0.6"/>
<path d="M783.8 731.5 L787.5 736.5 L792.5 741.5 L796.2 747.8 L793.8 754 L790 752.8 L786.2 745.2 L783.8 737.8Z" fill="#2b4c72" stroke="#2b4c72" stroke-width="0.6"/>
<path d="M769 792 L771 789.5 L775 789 L778 790.5 L778 792Z" fill="#2b4c72" stroke="#2b4c72" stroke-width="0.6"/>
<g fill="none" stroke="#8a7a16" stroke-width="1" stroke-linejoin="round" shape-rendering="crispEdges" transform="translate(0.3 0.3)">
<path d="M182.5 6.2 L190 17.5 L197.5 32.5 L200 45 L200.8 72.5 L200 92.5 L192.5 105 L187.5 117.5 L185 132.5 L176.2 146.2 L172.5 160 L165 175 L156.2 190 L147.5 203"/>
<path d="M240 7.5 L230 17.5 L228 32.5 L226.2 52.5 L220 63.8 L210 68.8 L200.8 72.5"/>
<path d="M240 7.5 L247.5 15 L250 22.5 L258.8 32.5 L262.5 42.5 L263.8 51.2 L272.5 58.8 L284 60 L272 58.8 L287 61.2 L299.5 53.8 L308.2 53.8 L319.5 60 L337 72.5 L352 85 L367 96.2 L379.5 107.5 L392 116.2 L402 127.5 L405.8 133.8"/>
<path d="M473.2 6.2 L472 25 L467 42.5 L457 52.5 L444.5 57.5 L434.5 61.2 L429.5 75 L422 91.2 L414.5 102.5 L409.5 112.5 L409.5 122.5 L405.8 133.8 L404.5 145 L400.8 160 L398.2 175 L397 190 L398.2 203"/>
<path d="M217.5 200 L225 192.5 L237.5 186.2 L255 180 L270 173.8 L287 167.5 L312 161.2 L337 156.2 L357 148.8 L374.5 145 L387 142.5 L402 136.2 L405.8 133.8 L422 133.8 L437 132.5 L462 133.8 L482 138.8 L499.5 136.2 L517 137 L524.5 142.5 L537 150 L546 155 L551.5 158.8 L574 158.8 L594 158.8 L609 153.8 L621.5 147.5 L639 150 L659 142.5 L674 132.5 L694 122.5 L714 112.5 L731.5 102.5 L749 92.5 L769 83.8 L789 77.5 L806 72.5"/>
<path d="M405.8 133.8 L414.5 145 L427 158.8 L437 170 L444.5 182.5 L452 192.5 L462 200 L464.5 203 L474.5 215.5 L482 230.5 L494.5 235.5 L505.8 239.2 L522 235.5 L534.5 228 L546 220.5 L549 215.5 L557.8 203"/>
<path d="M365.8 135 L369.5 122.5 L379.5 110 L394.5 100 L412 101.2 L427 106.2 L435.8 115 L437 130 L433.2 145 L424.5 160 L407 165 L389.5 165 L377 157.5 L368.2 147.5 L365.8 135"/>
<path d="M588.5 6.2 L586.5 20 L591.5 32.5 L601.5 42.5 L604.5 50 L604 62.5 L600.2 75 L604 92.5 L599 102.5 L590.2 110 L595.2 122.5 L604 132.5 L610.2 140 L614 148.8 L621.5 147.5"/>
<path d="M594 160 L584 172.5 L574 185 L564 197.5 L559 203"/>
<path d="M659 142.5 L669 150 L674 162.5 L684 172.5 L686.5 185 L699 190 L716.5 187.5 L736.5 183.8 L761.5 178.8 L786.5 173.8 L806 175"/>
<path d="M716.5 188.8 L724 203 L724 203 L736.5 215.5 L749 223 L759 238 L764 258 L770.2 280.5"/>
<path d="M6 256.8 L25 255.5 L50 254.2 L75 246.8 L100 238 L120 229.2 L140 224.2 L160 225.5"/>
<path d="M145 203 L150 215.5 L152.5 223 L160 225.5"/>
<path d="M162.5 226.8 L163.8 221.8 L168.8 220.5 L174.5 223 L175.5 228 L172.5 231.8 L166.2 232.5 L162.5 226.8"/>
<path d="M175 224.2 L190 215.5 L200 208 L208.8 203"/>
<path d="M163.8 230.5 L166.2 248 L168.8 265.5 L172.5 283 L171.2 303 L173.8 320.5 L177.5 338 L180 350.5 L183.8 368 L183.8 383 L180 395.5 L176.2 406 L170 416 L163.8 428.5 L161.2 443.5 L156.2 461 L153.8 472.2 L147.5 479.8 L146.2 491 L137.5 506 L133.8 523.5 L130 543.5 L130 568.5 L128.8 588.5 L126.2 609 L127.5 624 L130 639 L133.8 651.5 L136.2 659 L132.5 669"/>
<path d="M397 203 L399 223 L398.2 238 L394.5 253 L397 275.5 L395.8 298 L399.5 320.5 L400.8 343 L403.2 358 L404.5 373 L405.8 381.8 L403.2 395.5 L404.5 406 L412 418.5 L422 433.5 L429.5 453.5 L435.8 466 L439.5 472.2 L434.5 483.5 L424.5 506 L412 526 L399.5 543.5 L384.5 561 L367 576 L347 588.5 L327 598.5 L309.5 609"/>
<path d="M405.8 378 L417 363 L437 343 L457 325.5 L469.5 308 L482 285.5 L492 265.5 L498.2 250.5 L505.8 239.2 L514.5 235.5"/>
<path d="M522 238 L532 248 L537 260.5 L539.5 275.5 L546 285.5 L551.5 303 L559 313 L567 320"/>
<path d="M405.8 378 L424.5 365.5 L442 363 L462 364.2 L487 361.8 L512 355.5 L532 353 L546 351.8 L541.5 351.8 L560 349.5"/>
<path d="M620 360.8 L636.5 363 L664 368 L699 371.8 L729 373 L754 373 L771.5 363 L789 353 L806 339.2"/>
<path d="M405.8 381.8 L392 388 L374.5 395.5 L357 400.5 L340.8 406 L327 418.5 L307 441 L292 458.5 L277 468.5 L262 473 L265 473 L257.5 474 L252.5 488.5 L245 506 L236.2 516 L236.2 526 L225 538.5 L216.2 551 L213.8 566 L215 581 L210 596 L203.8 609 L200 619 L195 629 L190 641.5 L187.5 651.5"/>
<path d="M570.2 323 L574 308 L584 294.2"/>
<path d="M592.8 336 L611.5 323 L636.5 310.5 L656.5 300.5 L674 290.5 L689 283 L709 275.5 L724 265.5 L731.5 255.5 L749 248 L764 238 L784 230.5 L806 223"/>
<path d="M599.2 380.5 L606.5 398 L611.5 406 L619 413.5 L629 423.5 L634 433.5 L631.5 451 L629 468.5 L631 488.5 L630.2 506 L634 521 L641.5 533.5 L647.8 546 L650.2 561 L652.8 578.5 L657.8 596 L661.5 609 L670 621.5 L680 634 L692.5 644 L705 659 L715 676.5 L722.5 699 L735 719 L745 739 L748.8 759 L752.5 779 L755 791.5"/>
<path d="M560 377 L559 383 L551.5 395.5 L546.5 406 L541.5 411 L531.5 418.5 L524 428.5 L532 421 L522 433.5 L512 448.5 L497 458.5 L479.5 466 L462 472.2 L439.5 472.2"/>
<path d="M578.5 337.4 L581.4 334.4 L587.3 334.4 L592.5 335.5 L593.6 338.5 L594 345.1 L595.1 351.8 L592.5 353.6 L589.6 354.7 L586.6 357 L583.7 359.9 L580.7 360.7 L577 361 L575.5 358.4 L575.2 352.5 L575.2 348.1 L575.5 342.9 L577 339.2 L578.5 337.4"/>
<path d="M578.5 337.4 L575.5 334 L572.6 329.6 L570 325.2 L567.4 320.7 L567 320"/>
<path d="M570 325.2 L571.8 320"/>
<path d="M579.2 339.2 L581.1 343.7 L583.3 345.9 L583.3 350.3 L582.5 354.7 L582.9 359.9 L584.4 363.6 L588.1 365.8 L591.8 368 L594.7 371.7 L597 376.2 L599.2 380"/>
<path d="M592.5 335.9 L589.6 340.7 L585.1 344.4 L583.3 345.9"/>
<path d="M560 349.6 L564.4 347.7 L572.6 347.7 L575.5 348.5 L582.2 350.3 L587.3 350.3 L589.6 352.5 L594 352.9 L596.2 353.6 L605.8 353.6 L608.8 356.2 L613.2 359.2 L616.2 360.7 L620 360.5"/>
<path d="M577 361 L574 364.3 L569.6 367.3 L565.9 370.3 L563.7 373.2 L560 376.9"/>
<path d="M587.3 357 L589.6 359.9 L590.7 363.6 L591.8 367.3"/>
<path d="M739 256.8 L749 268 L764 278 L779 288 L794 300.5 L806 308"/>
<path d="M626.5 421 L637.8 428.5 L646.5 438.5 L656.5 448.5 L674 456 L694 462.2 L714 466 L736.5 469.8 L761.5 473.5 L781.5 481 L799 486 L806 493.5"/>
<path d="M806 533.5 L802.8 546 L801.5 561 L796.5 576 L789 588.5 L785.2 601 L785.2 609 L785 614 L785 629 L782.5 641.5 L780 651.5 L782.5 661.5 L790 669 L797.5 679 L802.5 689 L805 696.5"/>
<path d="M6 460.5 L25 462.2 L50 466 L75 471 L92.5 476 L112.5 473.5 L135 473 L147.5 479.8 L175 479.8 L200 476.8 L225 476 L250 474.8 L265 473 L284 466"/>
<path d="M6 661.5 L15 660.2 L25 656.5 L37.5 651.5 L50 646.5 L65 643.5 L75 644 L85 646.5 L95 642.8 L110 640.2 L125 639 L140 640.2 L155 641.5 L170 646.5 L180 652.8 L190 655.2 L200 654 L212.5 650.2 L225 647.8 L240 646.5 L242.5 645.2 L262.5 644 L280 641.5 L292.5 637.8 L302.5 632.8 L308.8 626.5 L313.8 622.8 L320 625.2 L335 626.5 L350 630.2 L360 632.8 L370 637.8 L380 637.8 L387.5 634 L397.5 626.5 L410 621.5 L425 619 L445 616.5 L455 619 L464 621.5 L480 615.2 L497.5 617.8 L515 616 L530 621.5 L545 626.5 L560 631.5 L575 639 L592.5 640.2 L610 639.5 L630 642.8 L645 645.2 L664 649 L670 650.2 L690 654 L705 660.2 L720 661.5 L740 662.8 L760 657.8 L777.5 655.2 L785 651.5"/>
<path d="M6 616.5 L11.2 621.5 L12.5 634 L11.2 646.5 L15 660.2"/>
<path d="M85 646.5 L92.5 656.5 L100 666.5 L112.5 672.8 L130 674 L145 679 L155 682.8 L160 686.5 L165 681.5 L175 671.5 L185 662.8 L187.5 651.5"/>
<path d="M305 609 L307.5 616.5 L312.5 622.8"/>
<path d="M778.8 649 L780 644 L785 642 L790 645.2 L791.2 656.5 L788.8 665.2 L782.5 667 L778.8 662.8 L778 655.2 L778.8 649"/>
<path d="M208.7 203 L213 201.5 L217.5 200"/>
</g>
<path d="M6 705.8 L11.7 703.3 L18.3 699.7 L25 698.3 L30.3 700.3 L30.8 703.7 L35.8 705.8 L45 705.8 L45.8 704.2 L48.3 705.8 L45.3 708.3 L45 715 L50 715.8 L51.7 723.3 L55 725.8 L60 725 L65 727.5 L70 727.5 L71.7 725.8 L72.5 730.8 L75 734.2 L76.7 740 L73.3 739.2 L70 741.7 L65.8 743.3 L68.3 747.5 L73.3 750.8 L78.3 750 L77.5 746.7 L80 742.5 L83.3 745 L85 748.3 L86.7 754.2 L89.2 751.7 L88.3 746.7 L85 743.3 L86.7 740.8 L90.8 741.7 L93.3 745 L96.7 743.3 L97.5 747.5 L101.7 748.3 L104.2 750.8 L106.7 753.3 L103.3 755.8 L100 758 L100 760.8 L113.3 760.8 L113.3 758 L115 753.3 L116.7 749.2 L120 746.7 L122.5 744.2 L125 747.5 L127.5 745 L128.3 741.7 L131.7 743.3 L133.3 740.8 L135 745 L138.3 747.5 L141.7 746.7 L144.2 749.2 L147.5 750.8 L146.7 754.2 L150 758 L155.8 748.3 L157.5 740 L152.5 733.3 L149.2 726.7 L148.3 721.7 L153.3 718.3 L156.7 713.3 L161.7 718.3 L166.7 723.3 L173.3 730 L180 735 L185 740 L190 742.5 L196.7 743.3 L206.7 746.7 L213.3 748.3 L220 751.7 L226.7 755 L233.3 756.7 L240 757.5 L240 755.8 L233.3 753.3 L228.3 750 L223.3 746.7 L218.3 743.3 L213.3 740 L206.7 738.3 L201.7 735 L198.3 730 L195 725 L190 720 L185 716.7 L181.7 716.7 L186.7 713.3 L190 710 L193.3 703.3 L198.3 698.3 L201.7 696.7 L205 690 L204.2 683.3 L203.3 681.7 L199.2 683.3 L197.5 686.7 L196.7 692.5 L193.3 694.2 L188.3 691.7 L185.8 688.3 L181.7 689.2 L177.5 687.5 L176.7 683.3 L178.3 680 L183.3 679.2 L188.3 677.5 L190 674.2 L193.3 670.8 L196.7 668.3 L201.7 667.5 L205.8 670 L208.3 670.8 L207.5 667.5 L209.2 663.3 L210.8 660 L214.2 656.7 L216.7 654.2 L213.3 653.3 L214.2 650.8 L218.3 650.8 L220.8 653.3 L220 655.8 L226.7 653.3 L233.3 650 L240 647.5 L246.7 646.7 L251.7 645.8 L255 648.3 L260 650.8 L266.7 652.5 L273.3 653.3 L280 654.2 L281.7 650.8 L286.7 650 L290.8 649.2 L295 650.8 L300 653.3 L305 652.5 L305 657.8 L305.8 651.5 L306.2 641.5 L307.5 634 L310 625.2 L313.8 622 L317.5 624 L320.5 631.5 L322 641.5 L325 649 L329.5 655.2 L333 659 L330 661 L322.5 662 L315 663.5 L311.2 664.5 L315 664.8 L325 663.2 L336.2 661 L345 658 L343.8 655.2 L347.5 651.5 L355 650.2 L358.8 645.2 L361.2 642.8 L362.5 646.5 L358.8 651.5 L355 654.5 L365 653 L370 651.5 L373.8 646.5 L377.5 641.5 L376.2 634 L380 632.8 L382.5 636.5 L386.2 634 L388.8 631.5 L390 637.8 L393.8 641.5 L397.5 644 L387.5 646.5 L380 649 L375 651.2 L385 649.2 L395 648 L405 646.8 L415 646.5 L418.8 644 L423.8 641.5 L430 639 L435 642.8 L442.5 641.5 L448.8 639 L453.8 644 L455 647.8 L450 649 L440 646.5 L430 647.8 L422.5 647.8 L420 647.8 L435 650.2 L447.5 654 L460 659 L470 664 L476.2 667.8 L473.8 656.5 L477.5 655.2 L482.5 659 L487.5 657.8 L492.5 654 L497.5 652.8 L495 657.8 L490 662.8 L486.2 667.8 L491.2 671.5 L497.5 674 L503.8 676.5 L507.5 680.2 L502.5 681.5 L496.2 677.8 L490 675.2 L483.8 670.2 L480.5 670.8 L487.5 675.2 L495 680.2 L502.5 686.5 L508 693.5 L513.8 696.5 L516.2 702.8 L517 710.2 L525 709 L535 707.8 L542.5 705.2 L546.2 701 L550 705.2 L555 705.2 L562.5 700.2 L570 695.2 L577.5 691 L583.8 690.2 L586.2 686.5 L582.5 682.8 L586.2 680.2 L592.5 675.2 L602.5 674.5 L612.5 674.5 L617.5 679 L623.8 682.8 L630 685.2 L636.2 689 L641.2 695.2 L643.8 702.8 L648.8 707.8 L655 712 L657.5 717.8 L656.2 725.2 L661.2 730.2 L666.2 734 L671.2 739 L675 745.2 L678.8 749 L682.5 754 L680 760.2 L683.8 759 L690 756.5 L696.2 756.5 L701.2 759 L702.5 765.2 L705 771.5 L708.8 776.5 L712.5 781.5 L713.8 787.8 L710 789 L706.2 786.5 L705 791.5 L705 806.5 L705 806 L6 806Z" fill="#004268" stroke="#000" stroke-width="1" stroke-linejoin="round"/>
<path d="M806 572 L803.5 578 L802.5 590 L801.5 610 L801 630 L800 648 L801.5 658 L806 661Z" fill="#004268" stroke="#000" stroke-width="0.8"/>
<path d="M797.5 646.5 L792.5 647.5 L786.2 651 L784.5 659 L786.2 669 L787.5 679 L791.2 686.5 L793.8 696.5 L792.5 706.5 L788.8 714 L785 721.5 L784 730.2" fill="none" stroke="#000" stroke-width="3.2" stroke-linejoin="round" stroke-linecap="round"/>
<path d="M797.5 646.5 L792.5 647.5 L786.2 651 L784.5 659 L786.2 669 L787.5 679 L791.2 686.5 L793.8 696.5 L792.5 706.5 L788.8 714 L785 721.5 L784 730.2" fill="none" stroke="#004268" stroke-width="1.7" stroke-linejoin="round" stroke-linecap="round"/>
<path d="M14.2 719.2 L18.3 717.5 L25 716.7 L31.7 718.3 L37.5 720.8 L39.2 723.3 L35.8 725 L34.2 728.3 L30 730 L26.7 727.5 L22.5 725 L18.3 722.5 L15 720.8Z" fill="#5e504b" stroke="#000" stroke-width="1"/>
<path d="M6 710 L8 710.3 L9.2 715 L11.7 718.3 L8.3 720 L6 719.7Z" fill="#5e504b" stroke="#000" stroke-width="1"/>
<path d="M519.5 710.5 L526.2 709 L531.2 711.5 L533.2 715.5 L529.5 714 L524 712.2Z" fill="#5e504b" stroke="#000" stroke-width="1"/>
<g fill="none" stroke="#000" stroke-width="1.7" stroke-linecap="round" stroke-linejoin="round">
<path d="M217.802 707.103 L215.86 705.936 L214.392 707.455 L216.316 709.842 L215.038 711.208M196.671 710.541 L197.183 707.6 L196.697 705.64 L198.175 704.283M218.789 688.93 L218.949 690.417 L217.652 691.219M200.255 702.613 L199.73 699.914 L199.431 698.159M209.539 697.35 L209.9 694.173 L209.635 692.876 L207.843 692.708 L206.175 692.902M202.534 717.135 L202.749 715.836 L203.533 714.156 L202.071 713.194 L201.139 710.728M192.414 712.536 L193.642 713.265 L195.671 712.293 L197.236 712.705 L200.295 712.413M200.848 707.526 L200.195 705.541 L198.085 705.944 L195.502 704.071 L196.155 702.704M213.99 708.628 L212.13 708.308 L210.542 708.271M209.052 682.117 L210.406 682.06 L210.429 683.797 L207.532 683.854M221.051 673.522 L222.678 672.899 L223.503 671.289 L226.545 672.229M208.075 681.059 L205.593 680.893 L204.714 680.01M197.341 717.301 L194.464 716.012 L193.371 718.189M198.643 712.341 L198.495 714.902 L200.33 715.034 L202.225 714.531M215.861 679.046 L213.914 676.701 L212.045 677.692 L210.063 677.079M221.696 696.045 L223.881 694.978 L222.965 692.325 L221.959 690.709 L223.04 689.918M224.077 691.193 L222.493 690.365 L221.314 688.378 L222.084 687.098M215.266 708.399 L213.43 705.988 L214.204 703.059 L213.062 700.638 L213.894 698.934M205.703 698.44 L204.349 696.134 L202.523 694.988 L199.849 693.399M213.242 696.145 L216.258 696.965 L217.381 699.285 L219.592 698.469 L220.716 695.502M222.802 674.906 L225.736 674.986 L228.141 674.567 L229.268 673.558 L231.545 672.539M210.156 685.595 L208.394 683.532 L206.057 685.441 L206.578 688.075M221.172 670.619 L220.81 668.455 L220.037 666.651 L218.504 666.359 L217.12 667.228M225.965 682.59 L224.112 681.333 L222.75 682.84M215.472 674.883 L213.24 674.749 L212.035 675.055 L211.177 674.107 L209.039 671.759M225.087 682.503 L224.407 680.861 L223.188 679.47 L224.743 677.293 L225.039 674.561M192.538 720.427 L193.331 721.982 L194.887 723.048 L195.273 724.337 L197.272 725.707M220.239 683.451 L221.922 682.953 L223.857 684.208 L223.605 685.469 L221.466 687.6M204.971 704.237 L202.492 705.089 L201.754 703.002 L199.796 700.551M216.75 705.782 L215.116 705.085 L213.999 707.697 L212.129 709.812 L209.961 709.601M220.167 684.057 L221.57 683.831 L224.454 684.68M189.05 714.253 L191.07 714.253 L193.385 712.492 L194.616 710.489M218.146 694.375 L218.824 695.414 L220.245 696.771 L221.211 695.83M213.19 682.994 L214.988 681.364 L217.126 680.006 L218.123 678.254M220.205 668.323 L220.497 665.72 L221.744 664.126M205.143 710.144 L206.427 710.808 L206.865 713.741 L206.236 715.363 L207.473 715.987M219.581 706.316 L222.609 706.297 L224.179 708.844 L226.929 710.465 L226.314 713.223M208.801 696.795 L209.099 698.597 L211.611 698.935 L211.574 702.091 L210.859 703.598M212.702 708.214 L209.524 708.571 L207.429 710.738 L207.134 713.042M209.526 700.109 L211.463 699.743 L214.084 698.559 L216.545 697.594 L215.85 695.453M216.386 707.286 L215.868 708.503 L213.837 709.585M203.32 703.429 L204.794 701.812 L206.221 699.507 L205.924 696.865 L208 695.787M215.835 676.462 L216.31 673.823 L215.065 673.57M207.454 698.776 L207.375 697.394 L206.297 695.622M207.685 673.918 L205.861 675.911 L206.217 677.161M217.33 671.655 L218.971 670.19 L217.202 667.561 L217.499 665.425 L218.562 664.096M200.682 699.42 L198.662 701.421 L199.097 703.406M207.699 711.49 L209.875 710.554 L212.563 710.483M222.641 673.708 L221.336 673.736 L220.233 674.369 L217.846 674.255 L215.772 672.173M216.364 699.011 L218.82 699.435 L218.918 701.386M194.756 718.468 L195.331 715.987 L194.248 715.395 L193.29 714.594M206.684 706.148 L204.056 706.63 L202.709 707.11M226.681 670.307 L226.935 667.727 L227.078 665.023 L225.613 663.393M224.117 673.99 L224.02 675.246 L222.814 675.721 L220.595 677.581M209.668 688.397 L211.246 689.877 L210.156 691.947M195.238 704.735 L197.418 704.126 L199.158 704.415 L199.155 706.81 L197.487 708.548M214.529 700.475 L216.017 699.03 L217.783 698.724 L220.618 700.036 L221.614 698.323M219.416 678.193 L217.127 680.151 L215.306 681.841 L215.776 683.119 L213.662 684.707M224.513 668.838 L224.322 667.575 L221.906 667.203 L220.559 665.743M204.341 701.634 L203.169 699.422 L202.152 698.474 L200.864 699.726 L199.573 699.354M216.796 677.259 L219.194 677.803 L220.571 676.293 L219.598 674.353M221.453 677.434 L221.434 680.304 L219.897 681.837 L218.779 680.899 L216.518 682.953M206.155 707.732 L206.122 704.956 L207.524 702.458 L208.956 702.196M202.867 705.241 L199.902 705.408 L198.892 706.821 L198.903 708.317 L198.185 710.574M209.826 676.152 L207.913 677.719 L208.533 679.377 L211.541 679.94M207.327 706.815 L204.606 706.629 L204.048 708.284 L202.988 710.116M205.55 699.343 L206.436 700.796 L208.1 701.14M198.905 702.941 L200.271 702.17 L202.147 700.735M218.817 678.495 L220.249 677.707 L220.286 674.718 L217.739 673.283M222.82 684.483 L220.744 685.08 L219.788 682.869 L222.271 681.501M207.689 679.265 L209.42 678.615 L211.135 677.586 L212.934 677.978 L214.991 678.862M218.342 673.295 L220.192 674.596 L222.191 673.608 L223.053 674.548 L221.836 676.226M192.076 717.628 L190.197 715.912 L188.09 717.654M203.459 704.591 L200.568 704.731 L198.364 706.1 L196.94 707.597 L195.855 709.018M211.147 704.918 L209.917 703.2 L208.209 704.387 L207.103 705.378 L205.817 706.125M208.404 701.241 L207.944 699.715 L207.336 698.6 L204.292 698.36 L203.538 700.031M204.468 715.345 L205.295 716.481 L207.806 717.064 L209.072 716.5 L208.684 714.862M200.702 705.725 L200.116 703.595 L197.012 703.93 L194.946 701.953M208.238 694.757 L210.06 693.802 L211.739 694.081 L212.06 695.319 L209.812 696.379M224.446 674.265 L224.704 672.908 L222.376 672.094M204.765 707.903 L201.889 707.181 L201.019 706.195 L198.619 705.93M199.169 699.989 L199.478 702.679 L197.866 705.331 L195.07 704.251M210.575 671.778 L212.218 673.227 L214.242 671.49M193.662 705.314 L194.982 706.679 L196.045 707.436 L197.107 709.245M199.291 716.399 L200.167 713.967 L202.439 713.387 L203.042 714.845 L202.873 717.002M197.089 706.39 L197.969 703.457 L197.452 702.057M225.115 670.578 L226.983 669.821 L228.569 668.281M205.703 702.416 L205.284 705.505 L203.225 705.207M218.721 705.541 L218.912 707.404 L221.038 708.506 L222.162 706.346 L221.784 704.361M189.341 713.97 L189.658 712.362 L192.581 712.436 L192.65 710.306M209.986 703.439 L212.702 704.853 L212.053 706.512M216.159 671.405 L216.041 673.472 L218.009 674.689 L219.01 676.12M217.189 703.478 L216.964 706.51 L218.32 708.04 L219.607 708.144 L219.644 709.359M207.819 697.988 L207.198 695.048 L204.919 694.086 L201.926 694.701 L201.998 697.095M194.827 720.499 L193.016 722.226 L193.626 725.318 L192.305 726.326M199.642 713.052 L202.107 712.741 L204.378 713.521 L205.437 710.847 L204.533 709.843M211.32 694.435 L212.889 695.292 L212.257 697.461 L209.618 698.73M221.908 680.683 L218.871 681.214 L215.942 681.409 L214.89 678.843 L212.489 679.23M198.756 708.817 L197.18 708.881 L196.376 706.551M201.965 710.253 L201.329 708.962 L200.497 707.131 L200.962 704.402 L201.324 702.019M221.518 685.037 L223.087 682.99 L223.216 680.328 L224.714 679.765 L227.309 680.297M206.646 689.964 L205.826 691.534 L204.999 692.731M206.003 684.58 L207.128 686.429 L208.322 686.689 L210.735 686.914 L212.346 689.023M197.722 715.197 L197.398 718.013 L195.863 719.942 L193.391 721.943M223.059 692.101 L223.638 690.104 L220.97 689.115 L219.824 690.572 L216.982 689.477M198.219 707.874 L198.343 706.596 L200.08 706.63 L200.761 708.375 L201.399 710.914M219.117 687.026 L217.945 688.112 L218.46 690.043 L217.071 692.626M217.682 697.039 L217.542 695.472 L219.885 695.016 L220.038 693.437 L221.072 692.192M197.132 704.904 L199.339 706.798 L200.141 708.419 L199.298 710.099M195.029 716.567 L194.1 718.348 L192.523 719.188M200.139 702.196 L199.525 700.254 L196.522 699.255 L195.549 700.009 L194.893 701.564M221 693.297 L222.382 694.054 L225.157 694.684M207.82 675.318 L206.003 673.01 L203.262 671.928 L201.767 672.228M191.685 717.593 L194.105 718.221 L196.348 718.859 L197.476 719.753 L198.487 719.041M212.094 699.125 L213.314 696.284 L212.755 693.859M200.92 719.571 L200.114 722.432 L198.697 724.961 L199.578 727.704M226.15 677.427 L224.227 675.812 L224.075 673.456M223.544 683.222 L226.29 683.748 L227.788 681.178M218.661 674.055 L216.552 672.457 L215.333 670.547 L215.33 668.152 L213.854 667.471M205.875 692.938 L204.503 695.342 L206.463 697.641 L204.642 699.897 L203.724 702.465M196.169 715.6 L198.126 713.649 L196.901 712.24 L194.374 713.519 L195.26 716.226M199.878 710.341 L200.149 713.407 L201.943 715.664 L201.999 717.132 L202.415 718.414M198.36 701.343 L201.025 699.73 L202.637 698.011 L204.292 698.524 L203.86 699.878M218.901 691.905 L216.856 693.506 L217.38 695.832 L216.424 697.195 L216.891 698.82M214.66 698.317 L213.014 699.51 L210.962 700.023 L209.47 697.628 L207.071 697.896M209.762 704.274 L208.428 704.899 L206.823 706.274 L208.235 708.485 L208.764 711.202M195.772 715.912 L195.618 713.416 L195.388 711.503 L197.102 711.33 L198.106 710.186M226.065 680.972 L224.181 680.545 L222.477 679.544 L223.74 677.44 L222.518 676.556M224.952 687.365 L222.657 688.193 L220.98 688.238 L218.173 688.169 L216.482 687.046M219.035 692.666 L218.623 690.345 L218.789 689.092 L221.649 687.698M226.441 679.364 L229.451 679.092 L230.514 677.714 L230.273 675.881 L228.987 674.194M205.272 692.833 L207.155 694.603 L208.402 693.387 L210.527 694.287 L212.143 693.417M200.46 714.49 L198.853 711.776 L200.793 709.789M220.344 704.8 L219.931 702.033 L220.706 699.069 L222.645 696.637 L223.624 695.263M222.12 690.697 L220.98 692.737 L222.352 695.583 L221.552 697.27 L218.738 696.294M225.228 687.737 L228.19 688.698 L230.289 689.464M209.147 699.632 L209.27 696.759 L211.746 695.802M220.117 682.422 L219.763 685.14 L221.501 687.071 L222.206 690.074M194.309 722.682 L194.218 725.056 L191.916 725.621 L189.986 724.596 L190.627 721.898M225.303 685.365 L224.143 684.457 L224.174 683.156 L222.149 680.737M199.638 699.983 L201.119 697.959 L203.872 697.476 L205.361 699.331 L203.662 701.238M222.763 676.75 L220.309 676.809 L219.778 673.73 L221.108 672.738 L222.401 671.646M202.797 714.615 L203.965 717.038 L202.737 719.914 L202.739 722.168 L201.833 723.112M210.889 702.277 L210.008 699.398 L207.385 698.619 L207.414 697.312M225.131 675.629 L223.519 674.74 L222.369 673.243M213.479 695.251 L212.905 697.743 L213.297 699.387M218.32 669.21 L218.862 666.946 L221.547 667.224 L221.535 669.498 L221.783 671.855M186.926 713.986 L189.214 711.966 L192.221 712.054 L192.82 713.194 L194.508 713.379M212.685 672.769 L211.983 673.959 L209.598 674.534 L209.545 677.357 L211.927 679.152M215.363 692.166 L214.07 690.013 L212.082 688.257 L213.226 685.834 L214.822 685.322M217.345 685.985 L218.25 686.838 L218.816 689.101M217.67 702.005 L218.521 703.535 L217.237 705.462 L215.138 704.975M211.445 684.417 L209.728 682.532 L211.409 680.684 L212.847 679.535 L215.017 681.077M187.725 714.536 L188.771 713.894 L190.98 714.412 L192.094 713.962 L192.227 712.354M199.024 703.18 L200.449 703.178 L200.637 701.835 L199.469 699.099 L201.308 698.318M204.472 692.915 L204.464 695.153 L202.4 697.464 L199.89 698.107 L196.835 698.877M197.16 718.817 L196.397 717.888 L194.601 716.882 L191.817 718.384 L191.394 720.63M203.867 697.44 L203.616 699.259 L205.508 700.721 L206.379 699.681M193.649 714.628 L194.589 712.554 L196.617 711.959 L199.325 712.371 L201.049 711.735M215.172 689.629 L214.493 692.093 L214.742 693.636 L214.902 696.006 L212.862 696.894M210.727 708.727 L211.946 709.555 L213.793 711.032 L215.721 711.586M215.07 669.931 L217.836 670.079 L220.521 669.633 L221.876 667.998M220.046 694.321 L222.147 693.1 L222.692 691.006M200.232 709.922 L201.755 711.519 L201.37 712.775 L200.699 714.655M210.132 705.734 L208.239 706.096 L207.852 704.859 L208.299 703.557 L209.486 702.721M194.086 709.612 L195.426 706.928 L196.309 704.026 L198.248 703.46 L199.267 706.355M214.289 698.592 L211.941 696.515 L210.912 695.756 L209.359 694.759 L210.748 692.265M221.01 695.004 L218.819 693.518 L218.589 691.533M210.639 674.885 L208.603 677.146 L206.94 677.948 L206.413 680.196 L205.847 683.068M219.745 704.443 L220.359 703.215 L219.413 700.632 L221.103 699.808 L222.987 699.496M212.911 708.639 L211.844 709.237 L211.999 711.387M214.712 674.154 L216.351 674.39 L216.391 676.448 L213.425 677.33 L212.848 679.047M214.397 683.455 L216.68 684.742 L218.036 683.819 L219.701 685.74M202.366 712.484 L200.411 714.453 L197.452 715.411 L194.777 716.953 L193.412 714.958M212.758 704.074 L213.378 701.693 L212.842 700.393 L215.376 698.507 L213.74 695.826M204.079 692.83 L201.91 694.621 L200.323 695.124 L199.837 696.681 L201.309 697.799M214.236 697.412 L214.694 695.984 L216.859 696.568 L218.09 697.989 L220.817 697.047M200.484 715.92 L199.383 714.999 L198.169 715.393 L198.055 717.691 L196.3 719.692M202.853 707.501 L201.074 705.418 L198.819 705.901 L197.741 704.59 L195.733 702.387M212.382 685.69 L214.294 686.706 L213.917 689.61 L214.025 692.104 L216.337 693.517M217.778 702.794 L218.47 701.196 L218.133 699.321 L216.83 699.321 L214.833 697.426M217.192 688.073 L216.32 690.49 L213.634 689.969 L211.699 691.353M208.349 700.499 L209.983 702.571 L208.683 704.698 L210.361 706.599M211.696 673.513 L209.55 673.38 L208.575 675.216M198.704 713.214 L195.774 711.934 L194.184 711.35 L192.664 712.452 L191.194 712.774M223.576 678.879 L225.669 678.989 L225.725 676.715 L225.796 675.404 L223.991 674.661M201.233 710.008 L202.375 708.209 L203.038 707.121 L204.036 705.869M210.04 702.959 L209.632 704.412 L208.324 704.826 L207.771 707.158M197.397 711.692 L199.647 709.846 L202.07 708.229M203.416 713.436 L201.714 712.756 L199.313 714.649 L198.73 717.721 L201.843 718.305M218.387 684.103 L216.938 684.802 L216.797 687.264 L214.744 688.435M197.053 717.186 L195.439 716.089 L195.209 713.753 L193.152 712.236M209.983 671.353 L212.178 672.165 L214.648 672.205 L216.182 671.403M200.241 711.747 L199.426 709.111 L197.651 706.693 L196.362 706.733 L195.164 708.525M219.086 673.862 L218.384 675.014 L216.024 675.234 L214.792 674.719M217.479 687.522 L215.643 689.914 L213.308 689.382 L210.837 691.204 L209.138 692.425M210.414 703.369 L209.86 701.279 L209.407 699.411 L208.923 697.595M191.266 718.004 L193.372 719.512 L195.653 721.734 L197.282 722.836M222.506 691.61 L220.999 690.773 L218.466 691.176 L217.272 690.648 L215.287 692.482M223.723 682.029 L225.252 679.623 L227.868 678.238 L229.676 675.754"/>
<path d="M163.108 742.07 L163.963 740.074 L165.758 739.595 L167.292 738.837M153.406 733.165 L152.531 734.596 L150.495 734.781 L150.32 736.909 L152.187 738.579M168.11 728.404 L167.091 730.178 L166.547 732.657 L168.63 733.096 L170.425 733.69M154.033 717.682 L152.42 715.325 L153.868 713.49 L152.746 710.83M164.481 750.424 L164.739 749.24 L163.603 748.686 L160.513 748.806M162.453 751.295 L163.948 750.25 L164.65 749.133 L166.763 746.733M162.978 722.855 L162.319 724.422 L163.062 725.638 L160.55 727.282 L159.992 728.557M175.458 733.72 L174.623 732.186 L174.658 729.881M165.271 728.642 L163.104 730.699 L162.483 731.852 L163.003 733.079M152.996 719.914 L155.11 717.899 L154.748 715.383 L156.48 713.984 L158.037 713.545M162.831 737.689 L163.301 736.075 L163.462 733.971 L162.766 732.896 L159.89 734.265M171.756 732.901 L169.549 735.081 L167.428 734.879M162.631 726.185 L161.087 724.255 L158.644 725.89 L157.248 726.255M162.556 736.234 L162.485 738.267 L163.587 739.531M151.346 724.479 L148.33 724.786 L146.467 722.861 L145.018 723.131M162.513 738.285 L163.89 737.778 L163.552 736.034M157.722 724.596 L155.4 723.043 L155.991 720.493 L157.916 718.95 L159.595 718.873M156.009 731.645 L154.426 731.759 L153.548 732.655 L151.925 731.749M160.192 725.382 L162.289 725.101 L162.826 726.743 L160.848 727.466 L159.988 728.759M160.482 729.442 L161.684 726.506 L164.699 726.175 L165.837 723.864M173.508 744.659 L171.913 744.329 L169.378 742.906 L168.158 743.827 L166.377 744.048M172.144 734.988 L171.586 733.625 L173.031 732.759 L172.757 730.692 L171.356 730.631M165.459 751.126 L166.144 752.967 L165.073 755.013 L166.053 757.541 L163.906 758.302M161.568 722.055 L160.218 721.662 L158.181 723.641M153.318 720.151 L151.011 719.055 L148.84 719.892 L147.3 719.515 L146.724 720.981M163.399 739.726 L162.199 740.595 L162.502 742.622 L161.408 743.709 L160.085 743.446M153.197 724.399 L154.068 726.22 L154.075 727.817 L156.841 729.106M155.465 727.308 L152.714 727.717 L151.321 727.184 L151.944 725.33 L153.087 722.722M155.013 735.133 L157.562 733.55 L159.387 734.35 L159.854 736.095M167.895 735.457 L168.837 737.116 L170.329 736.682 L172.182 738.065 L172.853 739.752M164.28 747.465 L162.5 746.732 L161.669 748.693 L159.141 748.489 L157.344 749.541M159.545 752.381 L158.32 750.887 L156.931 748.077 L154.273 748.904 L152.617 749.61M157.004 723.877 L156.568 721.69 L154.202 719.961 L152.1 721.527M159.607 740.15 L158.824 737.891 L157.56 736.506 L155.133 737.266M164.719 751.405 L164.777 749.464 L166.243 748.663 L167.021 747.333 L169.645 748.686M165.057 726.725 L166.453 726.744 L167.429 728.451 L167.111 730.295 L167.347 732.633M164.969 726.504 L166.996 727.149 L167.043 730.072 L168.672 732.781 L167.462 733.693M167.839 744.008 L167.627 746.607 L168.568 748.83 L168.4 750.834 L167.2 752.488M165.113 749.107 L164.937 747.528 L162.974 747.268M161.723 730.515 L164.445 730.309 L166.463 730.245 L168.575 730.424 L170.932 732.121M166.189 733.592 L166.009 735.148 L167.244 736.24M164.811 747.616 L166.471 747.392 L166.602 746.102M162.483 753.504 L161.307 752.158 L158.996 753.686 L156.403 752.036 L154.639 749.864M179.067 744.22 L181.24 745.391 L182.943 747.539 L182.128 748.747 L180.595 750.316M172.412 744.292 L171.811 742.728 L171.578 741.18 L170.589 738.251 L169.442 737.699M162.434 728.351 L163.913 729.306 L165.936 729.019 L167.41 728.365 L170.425 728.902M155.649 731.601 L155.588 734.775 L156.404 736.237 L156.919 737.364 L155.74 738.896M175.155 733.847 L174.673 735.777 L173.295 738.639 L173.828 740.846 L174.049 743.659M170.979 738.379 L171.703 739.91 L173.285 739.21M163.843 733.943 L162.561 735.135 L160.789 736.098 L157.96 736.97 L156.083 736.824M178.706 742.482 L179.514 740.702 L180.418 737.921 L178.493 737.176M158.38 750.452 L159.322 749.331 L161.452 750.407 L162.56 749.394 L164.829 749.892M165.707 732.088 L167.328 730.544 L166.813 729.363 L164.922 729.836 L162.019 729.453M158.468 730.297 L159.576 728.322 L159.934 725.206 L159.679 723.289 L159.998 720.821M171.01 736.673 L170.846 735.339 L168.712 735M158.594 723.104 L157.237 722.106 L155.054 722.296M159.711 720.565 L158.036 717.883 L159.113 716.014M151.959 721.487 L151.971 718.612 L153.58 717.359 L153.658 716.028 L152.034 714.552M162.776 730.033 L160.844 731.86 L159.237 730.864 L157.974 729.023 L157.08 727.702M172.31 734.74 L173.845 736.163 L175.162 734.745 L177.594 735.065 L180.472 733.859M159.077 723.666 L158.444 720.596 L156.327 719.496 L155.22 720.891 L154.68 723.482M164.209 728.361 L166.545 728.744 L167.698 726.843M154.224 732.623 L155.563 735.208 L153.294 736.672M173.649 736.642 L172.112 735.196 L171.743 733.136 L172.545 732.002 L171.46 729.644M174.307 746.072 L171.5 746.62 L170.18 747.678M158.907 744.104 L157.409 743.339 L157.454 740.561 L157.51 739.324 L159.346 737.331M168.373 748.291 L169.064 751.239 L167.678 753.618 L168.142 754.948M156.579 725.077 L156.843 726.277 L158.124 728.211 L158.147 729.925M168.486 741.789 L167.729 739.828 L169.367 738.69M168.195 745.609 L166.701 744.18 L167.735 741.179M158.655 750.021 L156.202 750.07 L153.707 749.684M155.547 728.098 L154.094 725.251 L156.218 723.721 L155.692 721.81 L154.367 719.909M157.712 733.935 L159.548 732.616 L158.462 731.024 L155.759 730.564 L154.26 732.242M160.721 722.709 L161.846 721.418 L161.51 718.493 L163.834 716.817M157.944 744.198 L159.274 744.233 L159.568 742.493 L161.256 741.68 L160.586 739.652M170.708 735.514 L170.665 732.458 L170.695 731.021 L171.596 729.835 L170.492 728.994M162.238 749.953 L165.076 748.733 L166.609 747.622 L168.168 749.831 L169.832 752.184M160.105 724.596 L158.427 724.866 L157.595 726.967 L155.773 727.617 L156.201 730.684M170.039 731.493 L169.455 729.854 L167.311 729.865M167.507 744.355 L167.324 746.556 L167.18 749.075M150.545 726.333 L151.99 725.73 L151.893 724.486 L152.53 721.91 L150.919 720.123M157.085 717.496 L157.934 716.605 L160.661 716.699 L161.055 715.423M160.925 739.256 L160.074 740.958 L162.464 742.095 L163.931 744.857 L166.671 743.853M152.864 725.701 L150.143 726.141 L147.739 726.899M160.623 750.632 L158.329 750.604 L156.223 749.576M161.6 753.684 L163.293 754.995 L165.43 754.632 L166.158 756.698 L166.4 759.805M154.584 731.852 L153 732.573 L151.4 733.023M170.426 730.84 L171.064 733.943 L169.957 735.202M157.951 728.478 L158.957 730.276 L160.44 732.487 L161.58 733.086 L163.941 734.851M163.162 728.984 L162.052 730.229 L162.149 731.976M158.332 719.747 L156.854 717.646 L154.301 717.281 L151.487 715.879 L150.757 714.295M153.881 732.199 L154.336 733.354 L157.227 734.485 L158.612 732.753 L160.87 732.092M168.615 731.496 L170.149 732.122 L171.39 733.083M168.102 744.746 L166.413 744.152 L165.23 745.824 L166.242 748.189 L168.103 748.819M164.324 745.201 L165.589 747.814 L163.909 750.027 L161.274 750.637 L160.084 751.196M159.887 732.75 L160.093 734.288 L160.35 735.759 L159.952 737.817 L161.186 739.023M166.99 728.092 L165.296 728.207 L164.073 730.686M153.114 723.465 L155.726 724.894 L157.053 725.35 L158.064 727.104 L158.83 730.204M171.69 733.253 L170.708 734.454 L172.251 736.357 L174.758 735.385M157.96 745.133 L159.546 747.109 L160.668 746.167 L161.74 744.038 L162.078 742.058M157.71 734.105 L158.358 735.633 L159.386 738.612 L159.095 740.859 L160.321 742.272M160.018 741.271 L158.771 740.155 L156.708 739.494 L155.639 740.18M163.867 726.825 L164.743 725.413 L166.788 725.053 L168.169 722.982 L166.204 720.577M156.956 716.366 L157.279 717.839 L157.245 719.97M170.364 748.058 L171.049 749.411 L173.719 748.997 L175.641 749.799M155.803 720.126 L157.765 719.815 L160.139 718.013 L162.163 717.959M165.174 740.216 L164.455 738.388 L162.521 736.629 L162.172 735.457 L159.776 734.565M172.923 740.508 L172.428 739.415 L174.041 738.036 L172.547 735.652 L170.84 735.961M159.183 730.311 L156.636 732.198 L155.52 734.399 L153.45 736.289M161.804 731.427 L159.923 733.64 L159.96 735.016 L158.433 735.216M154.361 726.847 L153.869 724.26 L154.77 723.418 L153.684 721.181 L154.774 718.644M160.419 730.311 L159.132 730.736 L157.629 729.798M165.425 738.957 L164.926 740.27 L162.59 742.186 L161.401 740.987M161.871 737.474 L163.727 737.051 L163.729 734.937 L163.485 733.318 L162.209 731.4M161.81 721.228 L161.32 719.515 L158.622 718.233 L157.976 715.465 L160.173 714.694M170.608 742.667 L170.093 741.299 L168.38 740.632 L166.135 742.52 L164.326 742.922M158.22 745.889 L159.402 745.469 L161.04 744.239 L163.117 741.865 L165.666 740.293M161.124 732.019 L160.558 733.195 L158.74 734.191 L158.092 735.304 L159.115 736.763M171.718 730.328 L172.587 733.067 L171.701 734.251 L168.694 733.296 L167.819 730.364M158.195 747.32 L160.298 749.1 L159.356 750.351 L157.917 752.751 L157.204 754.487M165.916 726.61 L168.738 725.444 L171.572 724.432 L173.049 726.621 L171.688 729.219M174.881 739.624 L173.063 740.412 L171.747 743.2 L169.613 743.081 L168.775 741.267M158.835 734.395 L156.75 734.827 L153.732 734.853 L153.33 733.323 L151.688 732.44M155.695 717.508 L152.721 718.084 L150.22 717.465 L147.302 717.691M173.531 731.283 L174.783 730.839 L173.998 728.046 L174.797 726.057 L176.003 724.318M150.102 724.409 L152.588 724.841 L155.079 724.368 L155.974 723.1 L154.331 720.95M159.204 721.842 L159.247 719.526 L161.961 719.579 L163.205 720.837 L164.841 722.895M152.146 720.073 L155.039 720.415 L156.65 720.365 L158.132 721.76 L160.857 720.854M170.583 744.498 L168.567 744.076 L167.261 743.116 L165.962 744.869 L164.043 746.634M159.965 729.609 L160.502 728.213 L160.453 726.064 L162.023 724.731 L164.907 725.879M157.234 736.628 L156.327 739.385 L154.931 740.343 L154.57 742.9M174.87 742.58 L174.088 743.674 L173.017 744.273 L171.509 746.667M159.221 751.103 L157.53 751.784 L156.51 753.957 L154.47 753.39 L153.465 752.174M165.967 748.861 L166.817 751.924 L165.114 752.757M169.272 738.935 L167.167 740.545 L167.577 741.864 L166.258 743.058M160.496 743.237 L158.716 742.393 L157.967 740.696M171.088 740.854 L171.106 738.752 L170.74 737.494"/>
<path d="M118.486 751.395 L117.459 750.214 L115.439 749.821 L113.056 748.663M132.305 753.637 L131.529 752.177 L128.725 752.479 L126.603 751.319M128.761 749.418 L128.446 747.259 L127.554 745.295 L125.199 745.862M142.297 747.293 L140.941 745.74 L138.336 744.221 L136.949 745.048M133.908 751.66 L135.13 754.541 L134.369 756.1 L134.729 758.76 L134.037 760.925M131.2 744.366 L132.022 741.45 L133.427 739.671 L135.27 740.971M127.245 756.929 L125.113 757.635 L123.678 755.404 L121.457 753.424M119.322 746.214 L117.309 745.958 L116.171 747.794 L116.586 749.09M126.92 743.383 L125.192 743.128 L123.466 744.308M139.296 748.196 L140.404 747.628 L140.67 744.877 L142.686 743.681 L142.948 741.014M122.366 756.99 L123.38 754.112 L124.556 753.215 L124.825 751.22 L123.249 749.903M118.799 752.665 L119.931 751.986 L120.035 748.888 L118.15 747.957M134.361 749.092 L135.394 748.048 L137.206 749.123M123.135 750.369 L123.806 749.163 L124.832 747.929 L125.682 746.44 L126.723 744.324M116.774 752.735 L118.127 752.615 L119.342 753.331 L119.925 755.759M125.152 748.923 L125.319 750.53 L124.463 752.323 L126.623 753.632 L128.893 753.761M138.571 751.053 L138.544 748.949 L141.411 748.947 L141.422 751.206 L140.113 751.293M126.972 748.379 L130.036 747.909 L131.673 748.397 L132.984 747.233 L134.89 748.967M135.889 742.76 L135.431 744.278 L137.734 745.599 L139.055 746.629 L140.042 748.066M120.486 755.031 L118.475 753.776 L116.717 754.728 L115.649 754.137 L113.966 752.93M131.618 746.537 L134.739 746.467 L137.325 745.761M130.8 744.815 L132.582 744.964 L135.112 743.652M131.146 751.726 L133.232 754.031 L136.001 754.882 L136.85 753.995M130.886 745.67 L132.284 744.178 L130.171 741.865M140.013 757.736 L139.163 758.846 L137.556 758.18 L135.289 759.744 L135.843 762.772M126.667 751.906 L125.461 749.527 L126.807 748.782 L128.71 746.281M127.42 746.453 L127.253 749.216 L125.334 749.544 L125.456 750.98M145.702 757.78 L146.909 757.926 L148.218 759.588 L151.122 758.944M117.092 750.193 L116.714 748.071 L118.823 746.946 L118.807 744.104M119.208 756.376 L119.893 754.968 L119.806 753.593 L119.829 751.434M139.439 752.499 L137.688 749.89 L136.551 749.064M124.878 749.665 L123.902 751.939 L124.402 754.016 L125.48 755.024M136.444 751.429 L135.45 753.652 L132.935 755.153M133.074 755.49 L134.724 757.485 L134.851 759.458 L137.803 760.204 L139.678 760.153M140.734 756.986 L143.685 756.579 L146.548 757.022 L146.257 758.95M117.627 753.703 L118.818 753.211 L119.965 754.891 L122.069 754.982 L122.484 757.041M120.866 749.962 L122.24 750.163 L124.955 751.391 L126.867 753.395M123.709 749.27 L123.161 747.345 L121.644 746.613M122.971 753.841 L123.755 755.088 L126.078 753.764 L128.566 753.374 L130.862 754.666M134.027 755.699 L132.984 754.813 L132.946 753.149 L132.922 751.15 L133.047 748.215M127.376 749.283 L127.127 751.232 L125.172 752.796M135.292 755.647 L136.787 755.817 L137.136 757.405 L136.324 758.713 L133.412 758.735M139.45 754.69 L140.344 756.867 L142.862 758.643 L143.523 760.633M138.209 756.915 L136.568 756.878 L133.566 757.946 L131.731 757.147 L129.963 756.063M138.05 749.785 L138.121 748.184 L136.457 747.458 L135.002 749.08 L133.75 751.321M124.204 748.606 L126.111 749.454 L128.342 749.464 L130.335 748.353 L131.808 750.431M117.743 750.076 L119.063 748.852 L121.191 751.003M125.807 750.442 L126.705 748.706 L126.806 746.092 L127.578 743.242 L127.713 740.774M130.424 743.594 L131.331 742.543 L132.965 743.636M127.07 750.269 L124.839 749.368 L125.229 747.523 L127.047 744.908M139.275 755.307 L137.493 755.003 L134.858 754.862 L132.362 754.331M133.567 757.155 L135.389 755.022 L136.612 755.05 L138.906 756.043M125.866 754.709 L127.057 754.965 L128.453 754.698M138.385 743.811 L137.327 745.193 L135.202 744.571 L134.797 742.52 L132.47 740.672M118.186 750.43 L117.519 753.257 L120.181 753.848M130.562 747.458 L131.868 747.983 L134.225 749.554 L136.659 751.178 L137.593 753.312M133.593 744.431 L135.274 745.049 L137.257 746.294M134.927 753.625 L133.817 754.97 L135.022 757.039 L135.332 758.658M126.533 755.698 L126.751 752.551 L126.495 750.704 L128.496 748.52M136.272 749.919 L138.393 751.717 L138.838 754.754 L138.443 756.553 L139.444 758.873M137.733 756.544 L136.562 756.094 L135.539 757.565M128.82 752.401 L130.856 752.526 L133.313 754.497 L134.992 753.292 L134.699 751.912M116.915 750.782 L116.883 752.25 L116.688 753.563M146.394 753.96 L147.094 752.136 L147.034 749.368M125.129 755.993 L124.081 758.36 L125.223 760.356 L126.315 761.398 L127.501 763.836M135.502 750.852 L137.211 753.144 L139.061 753.795 L140.588 751.266M125.221 745.609 L122.806 746.628 L120.338 748.597 L118.409 749.688 L117.417 752.688M142.236 754.984 L140.697 752.896 L139.757 750.151 L137.196 749.624 L137.421 747.693M122.911 752.921 L124.828 753.124 L126.878 752.377 L129.192 753.806 L131.023 754.496M134.777 743.981 L133.122 744.745 L133.853 747.126 L136.451 746.435 L136.052 745.008M138.848 753.996 L138.76 752.632 L141.686 752.085M117.313 748.748 L116.328 750.052 L114.833 749.832 L112.401 751.307 L112.371 753.678M132.552 754.243 L133.073 752.435 L132.119 749.69 L133.561 749.092 L135.087 747.077M126.483 757.143 L125.234 754.267 L126.602 752.55M128.995 752.755 L127.494 755.055 L126.892 757.563 L125.791 758.502 L125.711 761.696"/>
<path d="M93.9788 753.228 L96.1332 751.637 L98.2341 751.336 L100.249 749.771M84.9731 742.378 L84.5015 744.918 L83.6031 746.463M95.038 755.497 L94.0839 758.068 L93.1673 759.089 L93.525 760.687 L92.6638 762.733M101.345 753.64 L100.154 752.299 L99.1001 751.245 L97.6288 750.382 L95.4052 752.454M84.818 757.926 L82.9768 756.547 L81.8248 754.927M97.9048 747.996 L97.1338 749.677 L97.4042 750.867M75.1943 744.28 L76.3168 746.352 L76.3721 748.312 L76.5591 750.164M87.5285 752.168 L86.5485 753.512 L87.8547 755.172 L89.1672 756.019 L91.3936 755.636M89.1993 752.587 L89.0451 755.044 L90.2632 755.351 L90.5143 757.792 L92.4178 758.573M77.0206 753.04 L76.6649 754.256 L74.6552 754.875 L72.4463 753.169 L70.5788 754.166M83.1992 757.615 L81.7732 760.096 L83.1153 762.086M93.5386 746.779 L96.7276 747.021 L98.0123 748.929M70.2058 740.943 L69.559 738.252 L71.0701 735.882 L70.6982 734.231M82.8015 753.817 L83.4356 751.759 L81.8437 749.789 L81.4273 747.599 L83.0453 744.886M77.0684 751.034 L78.8802 751.881 L80.0021 754.137 L80.7133 755.422 L83.4557 755.515M69.7799 744.317 L69.3563 745.856 L71.4405 747.235 L73.5476 747.212 L74.9305 748.282M83.0381 745.824 L81.165 744.452 L81.5997 742.704 L83.0652 743.086 L84.0751 744.659M94.9644 745.767 L95.1404 744.515 L92.858 743.069 L89.832 742.19 L87.6867 740.318M91.5856 756.878 L94.1869 757.333 L95.8189 758.955 L94.0872 760.822 L90.9987 760.003M78.8517 741.917 L80.1717 740.785 L81.7427 740.511 L83.8962 738.264 L83.624 736.5M74.3334 755.629 L75.4927 756.64 L77.1272 757.56 L79.3637 756.351 L82.1003 757.454M95.3085 752.575 L94.0284 751.924 L91.7506 751.21 L90.6466 749.367M87.1138 741.593 L84.912 742.149 L82.6951 743.572M99.6004 756.662 L101.901 754.441 L104.788 754.031 L105.547 752.532 L103.907 750.992M71.2223 740.463 L73.6966 740.289 L75.7627 740.697 L76.8861 741.617 L78.1341 742.562M93.334 745.422 L93.3631 743.825 L95.7403 743.642M87.987 745.39 L89.1688 747.463 L88.2218 749.82 L89.9295 750.583 L91.4698 751.382M99.026 746.839 L97.3107 748.224 L97.5355 749.828 L94.7489 750.144 L93.0506 752.599M90.6109 755.647 L92.3798 754.465 L93.8175 755.939M94.3311 753.517 L96.0986 752.448 L94.8858 749.759 L95.1058 747.939 L96.2364 745.142M78.8734 750.929 L78.723 749.409 L76.7876 748.879 L74.8294 746.975 L72.8789 748.367M69.6564 742.902 L71.5435 741.101 L74.4364 742.162 L75.4423 741.346 L77.2752 740.623M99.0369 748.32 L97.7679 750.352 L98.9442 752.432M68.0432 747.61 L66.652 748.158 L65.7441 746.714M70.5408 746.714 L71.284 745.459 L72.5744 743.567 L70.1649 741.865 L69.4668 740.12M96.9572 748.581 L97.8512 747.53 L99.512 747.489M88.2275 756.796 L88.3898 759.925 L88.6707 761.611 L89.3003 763.785 L92.1562 763.316M100.679 755.462 L102.662 755.422 L103.275 756.929 L103.765 758.789 L103.444 760.811M85.9991 756.017 L84.4898 755.366 L82.5177 757.43 L79.9854 757.46 L78.1686 756.595M78.6708 753.648 L78.5705 754.864 L79.4604 756.891 L78.4014 758.604 L78.6701 760.726M73.8768 743.361 L75.9248 743.319 L77.8622 745.817 L78.9166 746.844M88.3039 745.54 L86.0857 746.533 L84.6849 746.421 L84.6944 744.948 L83.2368 742.557M93.1018 753.652 L91.9585 754.654 L93.3107 756.642 L93.7105 757.872 L95.7396 759.365M74.2509 755.52 L71.3195 756.045 L71.4167 757.521 L73.1168 758.507 L75.1693 760.489M97.6548 750.203 L97.0937 747.876 L96.1801 746.407 L93.9332 747.609 L92.233 750.262M83.4242 743.123 L81.5805 742.41 L81.6237 740.296M101.583 752.168 L100.052 752.831 L99.7867 755.149 L97.2522 755.718 L96.5473 754.291M93.4661 757.478 L94.2268 754.972 L97.4002 754.788 L98.0809 752.47M98.854 750.583 L100.39 749.077 L102.758 748.613 L104.041 749.785 L106.885 749.324M92.4664 754.12 L92.7876 751.047 L91.9723 749.823 L90.6479 749.43 L90.238 750.869M87.6404 741.141 L88.9079 738.313 L87.448 736.879M85.2666 754.513 L85.9914 755.848 L87.9298 757.796M71.4861 746.515 L73.2334 748.794 L74.1137 750.301 L77.102 750.661 L78.6544 750.306M76.5854 750.741 L76.1689 748.885 L73.9333 747.659 L72.1385 747.575 L70.0741 745.346M95.6692 749.706 L96.0211 747.422 L98.7511 745.959M70.4757 751.139 L70.7494 749.27 L72.3364 747.546 L70.0789 745.409M81.7719 742.081 L84.0557 741.011 L85.6356 741.686M74.7352 741.151 L75.253 739.692 L76.0692 738.725M83.3894 753.264 L81.7717 752.184 L82.3451 749.426M90.4476 745.834 L92.8169 746.869 L94.2179 746.162M78.2224 752.522 L76.7262 752.704 L76.886 754.476 L79.1137 755.231M78.5374 754.802 L76.0338 753.254 L77.2101 750.364 L80.2801 750.605 L83.4562 750.456M103.56 751.438 L105.271 749.854 L106.977 751.733 L109.141 750.481 L111.63 749.704M87.6914 752.653 L85.7555 752.117 L83.6802 752.456 L81.4016 752.191 L80.6184 751.067M84.7497 755.125 L83.2758 753.682 L84.2189 751.263M71.4718 744.056 L69.4075 744.617 L67.5212 746.126 L65.0238 744.875 L63.3584 745.164M69.6704 744.871 L68.3788 742.508 L66.8759 742.822 L66.1035 745.326 L64.7233 746.702M102.003 756.219 L103.969 758.635 L104.587 760.012 L107.535 759.614M79.818 755.757 L80.8946 756.313 L81.2033 758.017 L80.3177 758.997 L78.9172 759.439M87.9284 744.92 L86.8371 746.641 L86.151 749.035 L85.7067 750.827 L83.2266 750.471M85.3651 747.858 L86.6349 746.12 L87.0537 744.767 L87.1374 742.803 L86.122 741.293M99.8292 751.489 L99.0884 749.533 L100.949 748.129 L101.558 745.765 L99.4891 743.861M84.6666 742.315 L86.5834 743.283 L89.0343 742.695 L90.7294 743.551 L93.4219 742.794M95.3021 748.86 L94.6694 745.735 L92.6845 744.248M72.6861 751.488 L73.0236 752.916 L73.4741 754.603"/>
<path d="M805.399 648.186 L806.327 649.302 L805.366 652.17 L806.574 653.05M792.145 636.35 L793.279 634.277 L793.559 632.453 L794.824 630.347 L795.355 628.282M799.045 586.834 L798.151 585.923 L798.351 584.489 L796.476 583.117M796.128 568.212 L794.055 566.57 L791.679 565.131 L790.374 564.465M794.292 575.858 L795.768 575.653 L796.597 573.348 L795.341 572.513M794.655 568.229 L793.373 566.357 L793.558 564.546 L795.968 563.604 L798.1 565.687M798.835 634.369 L801.588 634.555 L801.996 635.946M793.891 585.396 L795.131 584.073 L797.686 582.286M800.55 645.38 L797.759 643.817 L795.505 643.458M794.589 579.607 L796.719 578.159 L799.141 578.531 L801.694 577.983M798.63 652.406 L799.122 653.655 L797.367 655.18 L796.223 657.175 L794.191 656.361M796.706 638.378 L795.252 638.575 L792.975 640.12 L791.4 638.703 L789.836 640.42M796.232 649.207 L794.082 648.879 L792.765 651.19M791.913 591.875 L792.023 594.672 L792.166 596.604M803.186 643.23 L800.884 644.838 L798.62 646.744M801.726 611.024 L799.406 611.283 L798.546 613.489 L800.68 615.684M795.55 650.434 L798.379 651.233 L799.58 649.338 L799.934 646.516M793.138 634.534 L793.23 635.732 L794.898 637.467 L796.208 637.187 L797.081 638.732M805.839 615.518 L808.032 614.871 L807.976 612.93M794.672 625.958 L794.795 624.528 L795.155 622.003 L797.292 621.879M797.549 650.164 L797.944 647.45 L799.129 645.382 L801.099 645.059 L803.142 645.89M792.596 594.005 L793.935 591.915 L793.209 590.872 L792.122 591.6 L789.502 593.237M799.633 639.797 L799.157 642.809 L800.136 645.213M797.188 576.315 L795.249 578.548 L794.869 579.938 L796.228 582.406M794.455 636.239 L793.362 638.429 L795.079 639.807M803.378 630.695 L803.148 632.311 L801.166 632.121M800.781 592.399 L801.895 591.491 L802.891 592.488 L801.354 594.299M805.677 565.109 L807.445 566.626 L807.052 568.899 L809.472 570.478 L809.96 571.665M797.005 633.24 L797.261 631.471 L795.089 629.463 L793.802 630.24M800.135 633.916 L797.791 633.403 L797.241 630.955 L796.994 629.379 L797.152 627.295M798.238 565.099 L799.793 565.886 L802.139 567.047 L802.136 568.448 L801.608 571.549M800.803 643.443 L801.728 645.124 L802.351 647.454M799.193 608.186 L796.214 609.106 L795.406 610.347 L796.136 611.358 L794.669 613.084M792.064 598.063 L794.369 596.034 L796.803 596.327 L797.023 598.486 L794.943 599.074M799.4 564.63 L798.15 562.296 L797.973 560.59 L797.223 557.749M804.852 567.286 L807.46 569.043 L808.862 570.355 L811.592 569.157M801.05 656.552 L802.944 655.814 L805.659 656.346 L808.016 654.884 L809.925 654.444M798.479 571.699 L797.99 574.173 L795.542 574.539 L794.71 572.849M798.007 629.713 L795.922 629.104 L794.943 628.043 L793.903 627.079 L793.699 625.486M794.611 597.769 L792.724 597.963 L792.008 596.952M793.448 605.546 L791.981 608.316 L792.917 609.481 L792.207 611.685M798.155 595.456 L797.207 593.427 L794.162 593.32 L794.046 591.159 L792.834 589.9"/>
</g>
<g fill="none" stroke="#004268" stroke-width="1.3" stroke-linecap="round" stroke-linejoin="round">
<path d="M214.978 676.157 L217.588 676.38 L219.057 677.849M214.761 689.601 L213.347 692.351 L213.825 694.938M207.559 704.026 L205.826 702.54 L203.151 702.894M195.771 716.781 L197.123 717.82 L197.058 719.15M226.786 682.454 L227.266 683.855 L229.774 684.612M223.731 669.051 L222.485 668.417 L221.305 670.381M205.809 692.98 L207.413 690.857 L208.462 691.537M196.262 712.269 L197.444 711.956 L199.071 713.298M206.257 675.656 L208.673 676.764 L209.513 675.849M187.148 713.758 L190.039 715.075 L192.466 716.185M215.129 678.16 L213.526 677.661 L212.456 676.105M202.962 711.973 L203.716 710.719 L204.938 710.279M219.071 689.099 L219.141 686.931 L219.084 685.405M206.69 676.274 L205.138 677.934 L204.307 679.889M206.868 677.67 L208.295 680.002 L208.393 681.985M223.05 673.405 L222.041 670.772 L223.824 669.498M219.502 704.038 L217.719 703.295 L217.185 700.509M191.715 720.412 L193.041 718.818 L195.402 719.603M211.773 684.017 L214.4 684.094 L216.316 686.414M205.303 714.831 L205.894 712.378 L207.433 711.347M215.744 688.276 L213.982 689.542 L214.767 692.291M197.712 708.352 L196.237 709.981 L196.905 712.101M197.265 720.052 L198.005 721.502 L196.003 723.159M207.043 707.497 L204.13 707.828 L202.965 709.736M211.678 670.558 L211.026 668.712 L212.255 668.125M199.974 712.424 L202.062 712.608 L203.286 712.726M193.542 709.622 L192.068 708.312 L190.458 707.281M198.396 714.847 L196.105 716.907 L193.474 716.071M221.79 672.579 L223.036 671.1 L221.567 669.218M209.91 679.898 L209.348 681.219 L211.1 683.737M202.598 701.756 L205.052 701.034 L206.372 702.739M213.011 688.535 L215.31 690.491 L217.391 688.83M211.578 708.087 L210.333 708.803 L211.464 710.94M213.432 699.719 L214.661 697.807 L215.483 696.773M216.476 682.766 L214.584 683.416 L214.051 686.14M194.321 720.825 L193.309 719.481 L191.591 718.253M202.224 715.911 L201.992 717.213 L203.178 718.868M207.947 684.789 L211.05 684.228 L213.533 685.605M216.682 676.245 L217.166 675.027 L219.669 675.265M194.757 707.949 L193.225 708.877 L192.904 711.749M210.001 702.409 L207.39 703.307 L206.206 704.803M200.676 710.249 L200.673 712.317 L201.95 715.234M206.773 683.308 L208.185 681.118 L207.38 678.904M222.68 696.712 L223.65 694.328 L225.752 693.36M202.909 713.342 L205.035 711.891 L206.809 711.636M218.567 669.938 L216.174 669.554 L213.484 669.24M200.218 712.666 L201.125 714.371 L201.444 715.956M223.237 692.256 L224.893 691.219 L225.951 689.024M202.612 718.676 L201.298 716.589 L199.485 717.376M210.274 684.768 L211.548 683.768 L213.544 684.823M206.236 686.718 L206.2 684.918 L203.442 683.366M212.35 674.727 L213.802 671.961 L213.122 669.309M226.368 677.398 L228.094 678.451 L228.344 680.693M224.992 671.189 L224.67 669.325 L223.464 669.478M206.997 673.865 L209.037 671.849 L212.034 672.696M214.542 682.362 L217.466 682.766 L218.425 685.615M195.129 717.078 L197.973 716.01 L199.874 714.746M221.368 690.086 L219.664 691.476 L217.952 692.585M208.531 692.262 L209.079 690.683 L210.796 688.828M194.934 723.109 L193.651 722.801 L191.794 720.557M197.509 719.992 L200.284 719.828 L201.824 722.331M210.175 701.524 L210.583 703.593 L208.408 704.242M218.359 673.415 L215.576 673.348 L215.376 675.161M198.377 711.838 L199.808 712.486 L202.546 711.813M200.426 715.58 L199.651 716.925 L198.282 719.182M210.029 695.967 L207.843 697.5 L208.072 698.941M210.494 673.786 L208.91 673.52 L207.731 675.558M195.676 704.08 L196.812 705.938 L198.824 707.832M198.528 704.713 L199.507 705.957 L202.047 705.108M224.745 670.026 L227.616 669.25 L227.697 667.473M193.625 716.279 L196.252 716.836 L199.138 718.015M203.532 700.804 L203.347 699.481 L206.114 699.148M222.111 678.855 L221.551 680.603 L219.292 682.623M210.007 699.267 L211.939 699.947 L212.866 697.051M209.204 702.173 L210.077 700.172 L210.213 698.315M212.172 683.02 L213.9 685.007 L214.152 686.528M203.328 710.26 L204.847 711.882 L206.183 712.104M204.112 713.01 L205.681 713.069 L205.993 710.566M215.715 678.076 L214.338 679.381 L212.298 681.367M204.334 712.476 L203.22 710.024 L202.212 708.575M206.234 682.236 L206.573 680.808 L207.173 678.523M208.517 686.141 L207.813 687.449 L210.056 688.863M208.031 693.514 L209.921 694.117 L212.033 696.416M205.973 708.839 L207.614 709.181 L210.513 708.038M208.931 702.823 L207.433 703.207 L207.525 705.263M212.304 691.727 L213.263 692.514 L214.56 692.225M211.86 677.21 L211.26 678.294 L209.049 679.977M197.367 701.965 L195.172 700.686 L194.25 701.928M194.956 709.418 L193.65 711.226 L192.276 713.077M212.988 672.011 L215.666 670.623 L216.991 670.969M211.46 695.159 L211.519 696.806 L214.167 697.942M202.034 714.672 L203.446 715.437 L203.553 717.237M212.156 703.526 L211.569 705.53 L213.942 706.61M219.67 690.745 L217.904 691.091 L216.473 692.594M215.985 688.039 L218.908 688.502 L220.812 688.941M217.712 687.895 L217.101 691.035 L217.136 693.007M221.263 690.415 L218.758 690.159 L217.432 687.972M217.495 707.026 L219.441 708.437 L219.207 711.432M222.264 697.018 L220.525 698.058 L219.706 700.66M217.928 678.008 L219.514 676.566 L220.509 675.692M206.151 702.668 L206.267 704.329 L206.763 705.981M207.206 709.54 L208.145 707.95 L206.858 706.068M216.505 705.524 L214.416 704.615 L214.928 703.519M213.085 704.334 L215.09 705.999 L215.656 708.64M217.501 693.189 L217.813 690.898 L217.887 689.41M188.366 711.734 L188.808 710.278 L188.959 708.24M223.486 675.05 L223.435 672.784 L224.733 671.672M205.326 696.336 L202.733 695.546 L200.825 695.258M195.275 716.665 L195.995 718.426 L197.944 718.285M192.176 714.067 L192.943 716.392 L191.055 717.831M192.014 708.123 L193.628 705.703 L192.581 704.546M222.775 683.256 L221.857 682.35 L223.079 679.411M218.134 705.692 L216.251 705.448 L213.957 703.443M210.442 676.227 L209.083 677.404 L206.566 676.724M218.77 675.004 L218.546 673.54 L215.599 672.923M221.404 700.421 L219.724 700.999 L217.693 702.433M223.508 688.669 L223.264 685.981 L221.899 684.806M210.175 702.201 L212.554 702.859 L214.383 701.613M207.991 681.995 L207.065 684.043 L205.75 684.221M207.661 712.422 L207.296 710.393 L207.288 708.943M204.799 684.014 L203.921 682.397 L201.985 683.117M210.244 692.477 L211.152 691.316 L213.714 690.526M215.699 674.133 L213.427 674.06 L213.109 672.701M209.661 702.722 L209.097 701.431 L207.955 700.454M227.501 673.815 L226.036 671.134 L226.746 670.08M190.227 717.795 L190.616 716.344 L191.985 714.903M195.877 702.498 L196.057 705.113 L196.047 706.703M201.662 708.807 L200.884 710.552 L201.125 713.634M215.136 696.831 L213.981 698.186 L212.571 698.489M197.383 721.561 L200.141 721.438 L201.867 720.507M188.996 710.985 L191.992 710.366 L193.175 709.145M216.711 693.766 L218.05 693.254 L218.714 691.625M210.053 696.09 L211.158 696.626 L211.097 697.986M219.773 668.87 L218.987 666.811 L216.695 665.236M213.771 695.736 L211.037 695.783 L209.545 695.758M196.051 715.095 L193.243 713.741 L194.354 711.505M188.997 714.641 L187.515 716.628 L185.293 717.716M225.347 686.679 L224.121 689.432 L223.345 690.61M208.982 680.693 L208.986 679.184 L208.814 676.826M202.301 699.059 L204.074 698.452 L206.236 698.607M218.7 669.412 L216.159 669.585 L213.342 670.408M213.248 673.733 L214.405 676.026 L216.424 678.506M224.705 688.009 L224.631 685.672 L224.374 684.322M213.151 671.951 L211.498 671.497 L210.238 672.635M189.732 713.342 L189.84 715.393 L192.144 715.95M202.305 718.507 L202.309 716.224 L199.58 714.693M220.654 676.973 L223.326 678.557 L225.506 677.51M218.847 696.658 L218.82 697.902 L220.832 699.79M215.134 670.656 L214.461 668.13 L215.551 666.235M218.482 672.241 L219.476 674.369 L221.539 675.7M216.232 701.637 L216.65 703.193 L215.804 704.986M215.436 673.569 L215.997 671.313 L217.164 670.759M217.882 676.093 L215.955 674.706 L213.515 675.457M197.39 709.391 L199.781 710.11 L201.648 709.268M214.59 687.809 L214.204 689.143 L213.772 691.222M215.039 669.205 L215.194 667.349 L215.188 664.884M218.167 687.301 L219.472 688.473 L221.649 686.827M200.274 703.298 L201.606 703.371 L203.737 701.923M218.588 681.815 L220.451 682.796 L222.238 682.994M218.764 694.406 L220.033 695.69 L222.737 696.141"/>
<path d="M172.16 743.31 L169.997 743.261 L167.896 742.809M169.042 734.674 L171.214 736.314 L171.698 738.461M165.986 745.346 L167.465 747.068 L165.92 749.597M161.414 749.389 L159.686 751.03 L159.09 753.554M166.927 746.469 L165.575 748.993 L164.23 748.977M159.796 733.473 L160.254 735.545 L158.68 736.628M173.268 731.777 L174.217 729.105 L172.754 727.939M157.973 742.977 L156.297 740.674 L154.591 739.426M156.165 722.15 L155.306 721.133 L152.973 721.777M173.21 735.939 L174.199 735.159 L173.073 732.493M165.076 737.418 L164.667 736.259 L166.716 734.635M169.411 736.619 L169.217 739.429 L170.459 740.608M163.845 754.258 L164.74 752.065 L165.982 752.316M164.426 751.269 L167.342 751.011 L169.395 750M167.721 738.525 L168.572 740.198 L170.679 739.561M162.654 738.775 L164.173 736.015 L163.755 734.704M167.279 734.136 L168.9 731.491 L169.899 729.662M174.182 743.694 L176.227 744.928 L176.693 747.306M152.6 721.721 L153.047 720.276 L151.859 718.247M167.592 729.673 L166.004 731.577 L163.382 730.928M162.987 724.693 L160.709 725.532 L157.83 726.767M154.819 720.755 L153.353 720.463 L152.274 722.973M167.628 745.507 L167.598 744.303 L165.124 742.285M157.689 724.439 L158.58 722.139 L161.699 722.001M152.945 726.71 L150.743 726.156 L148.206 724.442M175.713 741.333 L177.906 740.122 L179.118 740.202M177.215 738.425 L176.787 740.314 L178.066 741.015M162.606 750.73 L165.251 749.74 L166.867 751.73M160.016 749.736 L160.819 751.286 L162.859 752.236M152.555 731.504 L151.359 730.657 L149.385 731.705M169.066 731.82 L171.687 732.054 L174.252 730.403M154.878 730.903 L152.658 729.549 L151.352 728.916M164.766 735.161 L167.386 735.934 L170.385 736.357M153.96 724.581 L155.131 723.565 L157.02 723.749M156.428 717.499 L155.698 718.957 L158.071 720.141M179.53 738.737 L176.972 737.377 L177.186 735.195M163.477 740.579 L161.885 740.941 L159.685 739.192M162.305 725.194 L160.595 727.004 L161.966 729.057M167.529 742.43 L170.39 743.747 L171.285 742.065M149.831 725.088 L149.424 723.365 L146.55 723.832M169.35 744.233 L168.401 743.076 L169.489 741.657M155.726 717.237 L158.022 717.362 L159.987 718.445M158.901 736.915 L161.407 736.096 L163.013 737.367M175.906 741.152 L177.527 739.945 L176.513 737.597M165.051 745.346 L166.163 744.828 L167.489 742.561M168.904 739.607 L168.675 741.338 L167.698 743.165M161.886 750.611 L164 750.249 L164.384 751.502M168.397 744.792 L165.317 745.521 L164.635 747.069M175.767 737.413 L175.456 735.857 L177.916 735.067M172.978 741.579 L173.041 743.786 L174.184 746.074M170.074 738.454 L169.704 740.127 L168.395 739.934M150.993 725.753 L149.02 726.893 L148.855 728.427M161.886 730.944 L160.654 731.497 L158.549 730.234M169.79 741.123 L171.54 741.738 L173.642 740.415M162.834 740.559 L162.824 742.843 L165.226 744.04M163.062 754.169 L160.647 752.398 L159.055 753.972M165.169 734.616 L163.844 735.385 L161.686 733.4M171.547 744.455 L172.42 746.125 L173.039 747.919M172.815 737.715 L174.186 737.289 L176.453 736.145M165.788 731.817 L166.554 733.6 L166.422 736.564M168.625 730.061 L169.364 731.839 L171.708 731.763M164.033 753.112 L163.931 751.295 L162.84 750.189M163.119 736.656 L163.47 734.316 L162.858 732.105M162.159 744.64 L160.912 743.053 L160.222 740.596M170.118 731.262 L168.353 732.32 L166.183 730.846M170.65 731.654 L172.052 732 L172.294 733.685M172.677 736.332 L172.967 733.605 L174.626 732.443M157.269 725.758 L157.4 722.638 L155.982 721.785M161.156 739.37 L159.529 740.228 L156.907 741.678M176.136 735.326 L177.372 734.075 L180.066 735.39M166.896 747.052 L166.099 745.32 L167.596 743.069M162.383 735.612 L164.185 733.596 L165.442 734.6M173.786 736.751 L175.63 736.718 L177.366 738.274M158.613 723.656 L156.017 722.832 L154.439 721.321M166.37 728.791 L165.154 728.528 L164.805 726.389M153.879 729.841 L155.54 730.771 L157.311 730.36M157.659 722.976 L154.667 723.969 L152.686 725.507M163.379 729.262 L163.774 730.49 L162.122 731.928M155.195 724.797 L157.55 723.75 L157.26 721.599M165.32 741.625 L165.878 739.087 L165.727 737.761M170.37 739.633 L169.019 739.125 L167.512 740.906M162.786 722.892 L163.005 724.912 L161.391 726.171M151.959 719.599 L153.638 717.561 L155.264 715.537M164.673 750.32 L166.863 748.805 L169.615 749.352M164.373 729.705 L164.225 727.168 L162.157 725.601M161.599 730.864 L159.443 731.004 L158.801 732.722M161.397 730.781 L161.858 733.646 L161.855 735.588M173.347 735.632 L175.055 737.283 L177.556 737.602M170.522 731.257 L170.081 730.059 L167.559 728.73M162.155 724.462 L162.035 725.853 L163.613 726.315M174.5 744.699 L176.613 744.477 L177.989 743.002M155.201 729.181 L152.317 730.44 L151.579 729.049M161.749 732.458 L160.693 731.31 L160.397 729.867M158.397 744.114 L160.534 745.63 L161.472 748.242M162.973 729.459 L165.298 729.849 L167.036 730.285M164.632 746.346 L164.861 747.804 L162.565 749.758M159.705 732.023 L159.742 733.7 L162.234 735.193M164.432 742.606 L161.616 741.596 L160.098 742.586M155.341 731.027 L153.003 732.731 L153.014 734.682M150.313 723.578 L148.127 721.249 L146.335 719.519M173.293 730.92 L172.702 733.951 L171.919 736.071M167.904 728.829 L167.868 726.408 L168.229 724.817M159.864 733.141 L156.988 734.095 L156.815 735.321M163.328 744.628 L161.667 742.97 L160.806 741.484M170.998 732.618 L172.032 731.85 L174.504 732.596M162.844 750.773 L162.638 749.282 L162.147 746.807M158.541 738.172 L158.287 739.847 L155.898 740.235M160.768 728.825 L162.56 727.736 L164.845 727.374M168.087 742.268 L169.958 742.249 L170.21 744.147M166.663 731.575 L165.899 733.937 L166.124 735.896"/>
<path d="M140.036 751.89 L139.635 749.935 L137.552 750.043M135.796 744.106 L137.181 745.725 L137.23 748.34M114.906 756.246 L116.252 755.471 L117.257 756.516M136.053 744.1 L134.954 746.601 L132.395 745.628M125.417 747.841 L123.544 748.096 L123.091 745.765M143.541 752.451 L146.257 753.669 L148.325 755.122M138.704 748.442 L139.74 746.354 L139.01 745.369M137.145 754.434 L135.304 751.991 L133.269 751.709M143.048 757.415 L145.372 758.159 L147.35 756.97M146.242 751.929 L147.844 749.505 L149.505 750.251M132.164 742.847 L130.029 742.391 L129.202 739.402M141.533 747.118 L138.629 748.293 L137.177 747.616M126.331 745.217 L125.966 743.746 L127.094 743.229M118.183 756.813 L118.719 753.935 L120.05 752.664M128.227 743.775 L126.297 745.407 L124.848 747.577M139.249 745.712 L140.254 743.293 L142.516 743.629M125.358 753.446 L123.762 751.641 L122.238 751.151M135.104 743.672 L134.907 741.755 L136.505 740.612M137.983 755.598 L138.936 753.795 L138.462 752.179M139.672 746.23 L138.511 747.506 L139.882 748.865M128.582 749.792 L127.559 747.532 L127.617 746.3M144.164 755.219 L142.149 754.415 L140.836 755.737M131.373 750.961 L133.796 750.584 L134.521 751.847M121.427 753.273 L121.187 756.187 L122.531 756.367M132.428 751.942 L134.992 750.04 L133.696 747.395M124.941 754.32 L122.493 754.601 L121.043 756.491M133.603 752.075 L134.93 752.702 L134.372 753.97M134.592 747.5 L135.236 749.802 L136.322 751.823M126.746 747.434 L125.806 744.73 L127.805 742.588M133.159 742.4 L136.052 742.566 L137.67 744.463M118.939 746.012 L118.908 743.953 L120.981 743.062M141.416 752.256 L142.993 750.218 L143.527 748.501M135.702 753.621 L137.304 755.801 L138.436 756.894M130.298 756.593 L132.109 755.484 L133.836 754.845M128.45 743.864 L129.295 742.064 L131.137 742.631M140.3 754.183 L138.515 756.174 L138.249 758.385M147.377 751.847 L144.713 752.389 L143.118 749.904M120.108 754.538 L122.596 756.073 L121.355 757.998M141.282 756.268 L142.664 755.183 L144.877 754.282M122.784 755.321 L125.324 755.303 L126.791 757.358M141.422 750.373 L141.996 751.657 L143.949 750.786M141.173 753.177 L141.779 755.774 L144.522 755.934M145.484 757.157 L147.021 756.714 L148.937 759.091M122.107 752.88 L124.926 754.201 L127.385 755.399M126.663 743.351 L125.448 742.128 L125.668 740.296M130.83 755.934 L129.377 754.01 L130.977 752.543M140.361 744.99 L139.812 743.364 L141.734 742.336M145.347 753.633 L145.145 756.008 L142.331 756.163M117.671 755.54 L118.963 753.736 L117.339 751.419M139.633 751.052 L138.927 749.991 L137.405 749.414M134.107 757.422 L133.098 759.784 L134.289 760.848M116.101 756.708 L113.261 755.585 L113.518 754.38M132.582 756.442 L134.641 756.771 L136.109 756.841M136.405 751.826 L135.892 750.144 L137.806 749.381M125.582 751.232 L125.315 749.402 L126.17 748.467M129.022 756.218 L130.979 756.049 L133.524 755.038M128.494 745.552 L125.698 745.615 L125.047 748.129M130.429 757.961 L130.67 760.243 L132.781 760.004M141.836 748.933 L141.533 746.145 L141.657 743.891M115.504 757.699 L115.013 759.751 L117.632 761.095"/>
<path d="M89.3377 743.827 L88.9104 741.111 L88.0627 740.007M79.5397 744.706 L78.2285 745.225 L77.1519 743.412M71.2644 749.238 L73.1487 751.388 L75.1917 751.705M74.2415 744.748 L73.2044 743.889 L74.4443 741.168M78.8545 742.488 L80.9843 743.953 L82.2636 745.467M97.8646 754.298 L98.8398 752.966 L98.0987 751.945M69.0996 744.64 L68.9613 742.052 L66.0344 741.261M82.338 754.237 L81.0974 753.689 L80.8443 752.061M92.7725 749.52 L95.2017 750.667 L96.6633 752.342M85.2201 741.94 L82.3275 742.595 L79.4205 743.586M75.8052 743.109 L74.4273 745.655 L74.9027 747.46M79.8059 755.799 L79.6211 752.885 L81.1871 751.71M77.5943 744.76 L75.4888 746.334 L73.3957 746.189M76.7395 746.993 L76.601 744.329 L75.6866 743.438M74.6575 741.78 L74.2337 744.681 L77.0503 745.662M74.4827 740.913 L73.1897 743.598 L71.5082 745.519M67.6005 744.612 L67.9739 746.153 L65.3539 747.603M75.9058 749.709 L74.7017 751.702 L73.0639 751.782M101.296 754.974 L103.37 756.638 L101.795 758.787M73.0757 748.371 L72.0817 750.848 L71.1925 753.861M82.1913 748.843 L83.1327 747.155 L82.3933 746.184M96.8137 753.115 L95.5617 752.562 L92.8834 752.224M99.9173 753.035 L102.079 752.842 L102.299 755.31M93.3491 753.312 L91.8998 752.029 L89.6942 751.731M94.406 744.311 L96.6835 742.572 L97.5402 743.755M102.241 753.416 L104.113 751.147 L106.61 751.548M67.867 744.739 L66.5059 744.341 L65.5758 743.277M93.5681 750.921 L91.9828 749.34 L90.4011 749.21M80.9142 751.209 L80.3197 749.851 L77.9144 748.054M73.942 756.169 L74.8134 757.345 L74.2537 759.571M89.0446 747.654 L89.8631 748.608 L88.4986 750.988M83.3384 750.292 L85.1686 751.347 L86.9218 753.413M94.1605 746.195 L95.785 745.722 L96.7056 744.841M92.0841 750.592 L92.5425 752.24 L94.2183 753.466M83.9092 750.694 L82.6455 750.262 L79.9992 750.673M101.006 752.519 L102.982 754.104 L101.734 755.74M78.5646 743.804 L76.7076 743.973 L75.1846 742.424M87.483 750.87 L86.314 752.143 L85.0692 753.037M96.6031 750.058 L96.2775 752.455 L95.0619 753.511M73.1291 741.328 L71.3894 739.2 L68.3625 739.147M71.6248 743.739 L72.9651 740.982 L75.3003 740.357M97.3631 751.937 L97.3356 754.938 L95.47 756.159M83.849 744.353 L82.7429 742.506 L82.6828 740.903M84.7993 741.159 L82.4712 740.621 L80.9079 740.714M75.1834 754.963 L74.6954 756.705 L72.6974 756.127M91.9742 745.183 L93.9001 745.78 L93.3727 748.928M78.779 753.051 L77.3203 754.239 L75.4818 756.138M95.5163 745.492 L95.8902 742.593 L97.6059 742.497M80.7328 747.159 L83.2449 746.012 L83.4318 743.388M87.3531 742.197 L89.0625 739.755 L89.3369 738.179M87.2426 748.828 L88.7592 748.936 L91.0283 748.984M91.5353 748.09 L93.3056 749.361 L94.4818 751.224M69.2682 742.237 L67.8625 742.46 L65.7752 740.574M72.217 753.24 L73.4428 755.595 L72.655 758.565M90.2098 753.08 L88.4944 752.812 L85.4228 751.922M77.3472 746.517 L75.1506 744.857 L74.1305 741.988M81.2761 743.946 L83.2836 745.745 L82.272 746.924M93.8833 753.056 L93.5729 754.438 L91.5387 754.867M81.0731 753.399 L82.6598 750.659 L81.6237 749.738M88.7018 745.125 L89.9994 747.898 L88.9977 748.752"/>
<path d="M796.954 569.546 L798.284 570.852 L798.536 572.346M792.018 628.432 L791.05 627.163 L789.432 626.732M803.114 644.414 L800.912 643.44 L800.515 642.041M791.962 605.476 L793.514 608.105 L792.072 610.455M805.976 658.512 L808.557 657.965 L809.731 658.403M802.246 638.414 L802.717 636.356 L804.685 634.556M797.057 613.983 L796.107 615.306 L795.017 616.471M798.369 563.229 L800.952 565.075 L803.726 564.929M805.064 635.681 L802.63 636.857 L801.771 635.319M802.008 652.75 L801.545 651.122 L802.573 649.271M802.177 620.02 L801.541 622.197 L802.174 623.934M795.908 596.306 L794.4 597.557 L792.293 596.243M803.001 566.445 L805.18 565.388 L805.59 562.686M800.124 601.938 L802.118 603.907 L801.441 605.569M793.758 630.832 L792.466 629.024 L789.952 628.832M794.549 566.451 L794.424 564.482 L794.17 561.481M798.915 616.137 L797.616 618.954 L796.447 619.302M799.885 657.738 L799.483 660.038 L801.482 662.412M800.247 571.369 L798.049 572.161 L798.284 573.875M802.514 585.029 L800.26 584.72 L798.729 582.877M801.532 587.155 L798.556 587.01 L797.73 588.549M798.394 621.486 L798.676 618.922 L797.846 618.032M796.296 647.075 L795.362 648.482 L795.673 650.252M798.987 617.802 L796.734 616.253 L794.905 613.828M804.524 630.554 L804.759 629.239 L803.427 627.735M801.411 609.057 L801.105 611.759 L803.017 613.215M802.025 654.682 L801.353 657.193 L801.096 659.18M797.784 624.42 L800.323 625.365 L800.946 628.339M802.361 653.503 L802.777 651.673 L802.542 650.248M803.956 621.271 L801.895 622.454 L800.546 620.604M801.011 610.962 L802.454 611.584 L803.806 612.096M803.373 599.085 L806.362 598.66 L807.569 598.781M804.109 633.184 L803.39 631.219 L802.171 629.442M798.015 604.759 L797.117 605.763 L795.028 607.315"/>
</g>
<g fill="none" stroke="#000" stroke-width="1.0" stroke-linecap="round" stroke-linejoin="round">
<path d="M219.731 699.427 L217.792 698.774 L215.196 700.039 L213.144 701.508M219.894 689.507 L218.621 688.912 L216.721 691.154 L218.383 693.181M208.511 697.669 L210.34 695.294 L212.66 693.096M200.977 717.348 L202.101 715.984 L204.56 715.309 L206.044 713.094M214.624 701.996 L215.397 702.989 L216.596 702.412 L216.872 700.163M210.16 696.433 L212.045 697.311 L213.523 699.513 L212.858 701.228M222.245 685.24 L223.408 684.78 L225.105 687.39 L226.167 688.223M204.929 678.763 L203.553 680.704 L205.671 683.082 L207.214 684.91M209.415 687.831 L211.12 685.515 L209.139 684.023 L207.742 683.314M222.704 672.752 L224.395 670.318 L222.81 668.275 L222.223 667.051M221.336 676.495 L221.854 679.573 L224.046 681.279 L222.773 683.738M218.787 684.474 L215.657 684.533 L214.702 681.851M189.132 711.218 L187.008 713.093 L188.17 715.326M211.061 687.724 L209.672 688.453 L207.511 690.589 L205.841 691.734M207.327 682.62 L207.074 683.91 L205.627 685.468 L204.316 686.543M224.247 671.862 L222.749 670.976 L221.712 671.894 L219.549 671.668M218.396 671.171 L216.911 673.751 L214.586 673.237 L213.005 671.117M207.926 709.375 L209.121 709.728 L211.318 707.945 L212.384 706.208M205.488 706.635 L206.526 709.064 L204.534 711.43 L205.117 713.066M216.579 695.526 L215.697 694.611 L214.341 693.926 L213.348 693.205M208.048 704.426 L207.536 706.395 L207.627 708.991 L206.992 710.621M216.873 687.533 L215.802 686.61 L216.331 685.503M200.096 708.784 L198.184 707.302 L197.138 704.843 L199.124 702.693M217.598 695.823 L215.093 694.784 L213.415 695.064M205.213 699.444 L203.256 696.971 L201.838 697.522 L202.705 700.364M212.489 706.103 L211.007 708.903 L209.715 708.603 L209.333 706.709M210.204 697.821 L211.068 699.886 L209.404 700.564M198.067 707.98 L199.185 706.715 L199.672 704.592M221.966 686.714 L223.956 688.586 L223.517 690.426 L223.114 691.956M216.737 686.583 L216.635 688.882 L217.682 689.471 L217.473 691.292M207.507 674.288 L209.341 673.997 L210.099 671.669M207.187 697.951 L209.297 698.916 L210.657 699.765M219.425 677.902 L216.864 679.384 L214.205 678.424 L211.769 678.604M205.883 705.604 L205.872 703.826 L203.341 703.371 L201.478 702.781M224.506 676.291 L226.162 675.643 L227.824 675.659 L230.997 675.886M226.196 680.145 L226.009 681.765 L227.836 683.296 L229.374 683.343M194.375 715.511 L196.897 715.933 L198.39 718.752 L198.419 720.228M192.753 720.746 L193.784 719.596 L195.177 717.283 L195.895 714.911M195.633 704.139 L194.308 703.521 L192.971 701.391M225.41 686.18 L226.838 685.944 L228.065 685.134 L228.014 683.321M221.398 682.671 L219.496 682.657 L218.12 680.286 L217.448 677.722M220.975 680.573 L222.753 678.085 L221.777 675.598M224.645 690.727 L225.516 689.059 L228.21 690.232M199.665 703.085 L198.977 701.01 L200.123 698.623M201.301 709.293 L202.32 707.667 L204.017 707.697 L205.67 706.712M218.753 698.983 L218.34 696.865 L215.76 695.295 L215.751 692.359M205.449 693.699 L206.036 691.413 L204.129 689.487 L201.468 689.005M220.22 682.954 L221.04 680.463 L222.307 679.871 L224.385 681.473M207.892 698.157 L209.177 697.38 L210.682 699.069 L210.542 700.272M214.75 707.539 L213.887 706.549 L212.246 706.652M220.675 673.91 L222.194 673.431 L223.064 672.296 L225.089 671.175M198.514 715.125 L196.557 716.513 L194.199 717.212 L192.223 717.642M200.66 708.331 L200.758 711.116 L202.582 712.421M217.755 691.799 L217.538 690.55 L218.307 687.522 L216.217 686.015M221.263 690.866 L222.091 692.185 L224.329 693.136 L224.178 695.407M207.921 697.014 L205.296 697.922 L206.139 700.626M206.153 675.165 L209.17 674.21 L209.316 671.964 L210.012 670.451M215.893 690.992 L216.569 689.417 L217.692 688.833M215.78 671.478 L217.247 672.714 L218.207 673.787 L217.643 674.946M212.067 698.555 L212.044 697.298 L213.621 697.055 L214.715 695.19M217.451 679.171 L217.491 676.15 L217.416 673.702 L219.745 672.994M201.215 707.533 L201.555 706.341 L203.017 705.133M198.516 710.743 L196.733 709.04 L196.712 707.84 L194.132 706.262M222.173 683.258 L223.821 682.673 L224.667 683.963M197.575 715.253 L198.482 717.483 L197.196 718.041M211.12 683.131 L209.489 684.95 L210.066 686.144 L212.827 686.706M186.894 716.515 L188.205 716.626 L190.098 718.767 L190.287 721.227M226.815 670.873 L229.09 669.211 L231.249 671.277 L230.31 672.681M216.93 672.14 L219.282 671.254 L221.766 671.242M216.463 699.513 L215.204 698.028 L216.205 695.13 L219.298 694.334M216.549 698.562 L215.583 696.851 L217.252 695.493M203.759 711.706 L205.461 713.988 L207.087 714.547 L208.987 713.806M224.672 679.842 L225.911 677.474 L224.596 674.956 L226.278 673.469M211.397 687.885 L212.642 688.881 L214.36 689.269M209.424 672.89 L211.002 671.53 L212 669.454 L213.662 668.756M219.524 697.594 L217.637 697.36 L215.103 696.485 L212.12 696.567M198.294 707.656 L196.637 707.267 L196.074 709.586 L197.297 711.371M206.987 712.354 L206.447 714.563 L204.648 715.793M221.613 672.717 L221.307 674.018 L219.329 675.373 L219.496 677.796M200.383 719.133 L200.002 717.432 L202.297 716.259 L204.511 718.005M193.554 719.267 L190.979 720.252 L190.238 722.586 L188.093 722.418M205.998 709.86 L206.961 708.355 L208.453 706.545 L210.331 705.708M215.563 697.575 L217.364 697.615 L219.223 699.234 L221.408 697.593M191.654 715.196 L190.05 714.879 L188.501 713.344M215.665 701.842 L216.365 704.836 L217.976 706.031 L219.315 705.847M205.02 698.985 L202.825 701.01 L200.911 702.571 L201.829 704.723M207.146 682.747 L205.679 683.015 L204.948 681.543 L206.447 680.326M201.195 710.074 L204 711.524 L205.266 711.098 L207.228 713.189M207.461 684.366 L207.815 681.949 L206.771 680.97 L204.855 682.219M202.606 695.776 L201.96 697.545 L202.711 699.358M202.742 711.033 L200.464 708.878 L198.9 708.946 L198.552 706.302M194.058 721.116 L194.331 723.545 L193.359 725.681 L192.516 726.594M219.003 677.868 L217.545 676.413 L216.402 675.191M198.568 706.435 L197.392 707.269 L195.218 705.863 L193.552 704.122M210.839 676.527 L212.037 674.686 L214.03 675.603M203.787 704.888 L203.4 703.254 L202.072 703.534 L200.189 704.521"/>
<path d="M164.077 732.45 L165.94 731.765 L166.654 733.168 L165.525 735.441M172.211 742.624 L173.427 740.22 L172.473 739.463M151.295 726.777 L153.5 724.629 L154.339 722.26 L152.477 721.543M153.165 730.297 L153.151 728.601 L151.929 727.256 L150.466 725.569M158.946 730.271 L156.962 731.842 L155.062 734.174M157.483 750.008 L158.27 749.097 L160.56 747.434 L160.86 745.863M171.208 747.378 L170.947 744.835 L169.705 744.972 L169.524 747.587M172.979 742.627 L172.014 744.212 L171.43 745.519M162.823 724.424 L159.813 724.115 L157.779 724.68 L157.518 725.857M150.394 722.215 L149.191 722.229 L148.373 721.04 L147.778 719.382M160.412 744.309 L159.437 741.318 L158.25 740.607 L156.895 740.074M157.464 725.567 L157.289 723.977 L154.573 722.883 L152.9 724.325M157.497 722.844 L155.998 721.733 L155.897 719.071 L158.751 718.278M163.394 745.466 L165.719 743.454 L168.615 742.555 L167.906 739.666M161.918 731.594 L160.959 733.477 L158.133 734.623 L157.406 732.725M155.027 720.873 L153.732 719.99 L153.431 718.375M155.841 728.343 L156.211 726.644 L157.53 726.688 L159.525 727.842M170.327 740.706 L169.148 742.61 L168.777 744.244 L167.234 744.29M166.298 726.696 L163.994 726.146 L162.037 725.681 L162.033 723.964M158.056 744.256 L159.496 741.608 L160.561 740.064 L162.577 740.655M166.875 749.176 L164.986 747.316 L165.634 745.745 L167.849 746.039M169.46 735.593 L170.898 734.535 L172.192 734.922 L173.488 736.836M164.619 742.413 L164.582 739.764 L163.125 737.918 L162.778 735.044M160.002 751.562 L161.65 750.497 L161.647 747.394 L163.543 746.632M162.183 738.859 L161.006 738.431 L159.254 739.776M173.569 733.588 L174.705 731.38 L177.417 732.083 L179.318 734.507M158.027 722.686 L157.152 719.838 L158.864 718.286M166.11 733.142 L166.466 731.486 L166.678 729.889 L165.681 729.104M159.906 726.738 L160.796 723.907 L159.282 722.051M167.052 736.201 L164.084 736.082 L163.764 732.929M165.986 743.612 L167.164 743.074 L167.325 741.838 L166.397 740.317M163.113 751.166 L163.004 749.187 L162.465 746.822M165.678 745.529 L167.606 745.733 L169.67 744.683M150.047 723.655 L151.054 722.421 L152.351 720.788 L154.15 720.234M167.096 747.775 L168.274 745.995 L168.692 743.816 L170.188 743.965M168.561 735.472 L168.96 732.53 L167.691 729.784M163.254 733.993 L164.474 732.081 L166.359 731.973 L168.711 731.665M167.481 728.076 L167.395 726.858 L165.993 726.313 L167.159 723.526M164.721 732.121 L164.756 733.356 L167.503 733.912 L168.311 732.928M163.49 751.526 L163.56 754.309 L164.447 757.223 L162.086 758.762M163.056 751.779 L162.521 749.044 L162.688 747.429M176.02 736.436 L177.209 737.141 L179.104 739.519M152.323 718.63 L153.423 717.788 L154.833 717.876 L157.889 718.25M175.102 742.56 L175.038 744.94 L173.456 745.009 L171.673 744.278M160.544 745.991 L161.058 744.655 L163.313 742.683 L165.389 742.5M171.904 734.628 L170.388 736.868 L167.677 737.368 L167.975 740.309M171.162 734.389 L169.813 734.825 L169.458 737.164 L166.905 737.882M174.474 734.652 L172.51 733.014 L171.194 733.218 L169.599 734.226M164.352 752.606 L165.685 750.966 L167.768 748.91 L169.936 746.886M164.554 746.243 L165.681 745.315 L164.627 743.79 L165.758 741.063M159.072 736.264 L156.58 734.636 L155.654 736.048 L156.452 737.175M164.077 747.371 L165.981 747.643 L166.059 749.201 L163.995 750.497M161.907 739.945 L160.103 737.648 L159.183 736.586 L157.15 737.671M172.079 737.317 L174.976 736.721 L176.152 737.283 L177.46 735.199M160.084 734.794 L157.247 735.015 L154.827 735.195M158.466 726.911 L159.309 729.585 L161.382 731.589 L161.516 733.553M155.802 733.797 L154.007 732.057 L153.916 730.659 L151.53 728.857M160.513 748.947 L160.963 750.447 L159.367 752.584 L157.035 752.574M160.967 726.27 L162.818 725.185 L164.561 723.802 L166.489 723.292M165.816 751.226 L165.921 754.293 L163.995 755.101 L161.62 755.935M164.769 749.838 L164.664 747.143 L167.088 746.491 L168.652 745.796M164.67 742.642 L161.854 743.45 L160.686 741.411M160.053 721.515 L158.211 722.703 L158.207 724.684 L160.95 724.904M159.273 739.099 L158.386 737.599 L156.599 737.051 L154.475 735.857M159.521 732.38 L162.468 732.06 L163.727 734.685M167.012 751.237 L166.225 753.862 L167.474 755.638 L165.828 757.64"/>
<path d="M135.781 747.777 L134.138 749.746 L132.63 749.422 L131.454 747.278M130.301 754.972 L132.21 755.814 L133.452 757.703 L134.178 759.995M132.846 745.943 L132.681 743.616 L134.978 741.945 L135.157 739.841M117.968 753.446 L118.517 752.095 L120.59 752.586 L121.74 753.634M137.827 747.131 L139.072 746.386 L138.798 743.902 L138.921 741.531M134.09 752.915 L135.312 753.847 L138.038 754.717 L140.57 754.34M133.346 745.697 L132.096 748.198 L133.822 750.119 L135.061 749.599M123.037 745.278 L121.629 744.832 L118.843 745.443 L117.078 744.283M127.225 745.381 L128.216 746.974 L131.283 747.707 L133.909 746.021M139.27 757.824 L142.053 757.886 L142.041 760.02M125.2 752.791 L126.106 754.193 L127.839 756.191 L130.464 756.957M130.628 756.05 L130.276 757.358 L128.316 758.542 L126.999 759.003M137.189 743.136 L135.526 742.502 L133.353 742.579 L131.799 740.706M139.977 750.147 L137.915 749.414 L137.73 747.679 L135.398 747.987M136.917 752.252 L135.688 750.958 L133.032 750.365 L130.145 751.012M137.319 757.033 L135.735 757.761 L133.131 758.788 L130.96 759.809M146.412 752.043 L144.186 753.402 L141.468 752.527 L140.586 753.94M134.234 751.813 L131.398 751.712 L129.541 750.525M120.749 752.636 L121.921 755.59 L125.005 756.144 L126.42 754.181M128.939 749.452 L126.519 751.333 L125.133 750.049 L124.892 748.705M115.995 751.489 L116.303 750.012 L117.822 749.724 L119.03 749.886M122.817 755.843 L124.543 757.832 L126.718 759.427 L127.117 760.658M133.534 755.812 L134.452 754.423 L134.266 753.151 L133.382 751.868M132.149 752.929 L133.43 753.056 L134.536 755.999 L137.156 756.632M144.827 748.712 L147.399 748.285 L147.768 749.443 L149.704 748.843M127.156 747.105 L126.44 746.073 L124.992 745.977 L123.846 744.888M126.31 743.248 L126.04 741.587 L124.976 740.955 L123.767 740.054M115.424 756.785 L114.426 755.417 L112.716 756.724 L111.159 755.832M134.012 743 L134.978 745.971 L132.661 747.069 L131.987 750.027M136.046 750.605 L135.975 753.378 L136.365 755.247 L135.672 757.4M128.144 744.14 L129.353 741.809 L129.445 739.768 L130.169 737.971M134.089 749.16 L134.772 751.723 L135.845 753.066M124.83 751.426 L125.126 753.287 L122.945 753.714 L122.969 755.025M137.422 753.532 L139.364 753.314 L140.66 751.722 L143.408 751.719M134.874 747.676 L133.384 746.526 L133.059 743.849 L134.829 743.302M118.408 752.433 L120.962 753.597 L121.767 752.464 L121.085 751.229"/>
<path d="M75.586 746.155 L77.1871 748.286 L79.2736 750.681 L77.9022 753.221M94.9831 756.106 L94.4084 757.418 L94.9433 758.831 L97.0545 758.986M97.6028 747.871 L100.55 746.793 L101.642 747.305M92.3477 754.286 L92.7718 756.169 L90.6826 757.581 L89.8073 756.442M82.0276 757.011 L80.2895 755.462 L80.2145 754.053 L78.999 753.459M86.054 752.691 L85.0886 753.593 L83.6282 754.313 L83.3967 755.77M73.8785 749.109 L71.7191 750.244 L71.9727 751.621 L73.766 753.967M75.9533 756.835 L75.094 759.112 L77.1506 761.153 L79.3155 761.545M95.4308 756.712 L93.0078 757.408 L91.2876 755.085M80.8611 755.488 L83.2741 757.126 L82.5331 758.521 L82.9 759.73M87.4844 741.341 L88.3079 742.662 L86.9705 744.705 L86.484 745.842M94.3152 743.166 L96.442 743.364 L97.6453 740.724M90.8381 743.403 L92.938 744.563 L92.3711 745.785 L90.0225 746.551M93.2196 753.468 L91.348 755.574 L89.0929 756.512 L87.2777 757.635M71.6752 745.189 L69.9219 745.903 L66.8719 746.575M99.3756 756.97 L97.9412 759.011 L96.8276 761.282 L94.665 762.948M91.8087 750.837 L93.0172 750.801 L93.0232 753.856 L93.1993 756.35M96.6942 752.649 L97.0858 751.065 L98.7834 748.386 L100.593 747.325M94.5103 749.169 L92.68 749.261 L92.7529 751.025 L91.8281 752.077M90.6101 756.162 L90.2652 753.125 L91.0103 752.111 L93.109 752.115M97.1666 750.139 L98.7931 748.119 L100.557 746.021M96.9449 756.027 L95.2885 757.498 L93.5311 757.052M80.4964 749.965 L77.8498 751.095 L75.7481 752.641 L74.6839 751.258M71.0418 741.638 L69.2996 740.767 L66.5164 740.175 L66.0233 742.029M68.6273 744.27 L66.1151 744.566 L64.9828 745.259 L65.375 747.879M74.6667 755.055 L75.0338 756.705 L73.1555 758.868 L72.2007 760.495M85.0965 747.481 L86.2235 747.937 L86.6157 750.239 L87.7319 750.912M87.4831 742.544 L89.3789 742.324 L90.7852 742.505 L90.7484 743.871M70.7307 746.937 L69.6547 749.109 L71.5571 750.797M80.6256 756.561 L80.9307 757.991 L79.0157 759.469 L77.629 759.504M83.0922 754.076 L82.5555 755.32 L81.2271 757.303 L79.499 758.043M73.6484 741.723 L75.439 743.616 L77.178 744.039 L79.1599 741.883M92.5297 749.595 L91.2548 746.747 L91.5767 743.892M92.7653 743.14 L92.6495 745.042 L92.3804 748.132 L93.1424 750.282M98.9927 754.289 L97.6592 753.454 L96.1508 750.765 L93.9 751.169M82.7677 755.286 L84.6331 756.4 L83.953 758.371 L85.8513 760.418"/>
<path d="M792.312 601.584 L791.241 600.697 L788.465 602.142M803.65 570.068 L804.113 572.728 L805.486 573.287M798.591 574.244 L798.843 572.507 L801.822 572.396 L803.128 572.734M796.801 611.729 L796.392 609.099 L794.709 607.215 L793.117 607.14M805.771 582.18 L805.088 583.861 L804.431 585.194 L806.922 587.152M798.24 604.552 L798.258 601.767 L801.193 600.792M801.131 616.143 L798.996 616.063 L797.807 615.033 L795.922 616.356M805.71 583.674 L803.459 581.488 L802.961 579.521 L801.582 579.602M799.783 640.168 L798.432 638.519 L798.189 636.393 L798.086 633.368M804.714 597.42 L803.848 598.377 L800.881 597.683 L800.373 596.519M805.109 618.614 L806.175 619.303 L807.603 618.383M800.438 594.494 L798.586 593.329 L797.236 595.537M802.548 633.873 L799.828 632.574 L799.573 630.602 L798.098 630.754M794.932 629.084 L793.288 631.037 L792.401 632.732 L793.639 633.532M796.345 604.989 L795.8 607.31 L795.468 610.051 L793.103 609.814M799.915 582.988 L799.365 581.494 L799.36 579.985 L797.856 579.232M794.672 571.351 L791.883 571.839 L790.332 569.185 L791.961 568M794.134 614.414 L792.815 612.688 L791.547 610.136 L791.588 607.786M804.042 602.922 L804.402 605.345 L803.877 607.114 L805.465 609.549M801.637 634.477 L801.528 632.176 L801.489 629.057 L802.051 626.472"/>
</g>
<g fill="none" stroke="#6a5a50" stroke-width="1.0" stroke-linecap="round" stroke-linejoin="round">
<path d="M209.874 687.259 L206.882 687.164M208.656 703.039 L211.248 702.128M211.838 672.235 L210.482 674.696M213.446 690.016 L215.917 691.291M220.146 669.7 L219.61 668.063M213.459 694.522 L214.812 693.687M201.055 713.254 L200.636 714.704M190.812 712.073 L193.397 711.588M191.13 718.628 L191.751 716.853M197.615 714.25 L198.651 713.333M211.122 696.261 L211.08 694.904M212.979 691.82 L215.829 690.486M222.756 673.486 L221.792 672.363M184.172 715.474 L185.239 718.467M220.466 695.442 L220.256 693.028M207.414 702.774 L206.706 700.48M221.845 683.072 L221.192 680.467M204.198 700.491 L202.357 700.125M222.575 686.701 L221.695 684.025M227.519 676.784 L229.138 679.09M196.74 712.313 L195.092 711.787M197.656 708.661 L197.164 706.118M226.998 674.858 L227.358 673.563M224.815 684.077 L222.864 682.931M217.262 694.807 L218.865 697.472M217.408 679.004 L217.112 681.837M193.394 708.481 L193.53 710.887M220.216 690.258 L218.641 689.361M213.287 683.168 L213.115 685.429M192.308 713.585 L194.036 715.634M194.793 708.155 L194.81 706.103M225.406 674.407 L225.532 677.48M211.609 682.946 L211.869 684.712M200.279 715.5 L198.501 714.202M215.447 673.144 L217.256 671.599M208.149 702.478 L207.537 701.095M203.381 709.019 L201.164 710.236M216.631 686.366 L218.522 687.91M216.282 671.119 L215.245 671.983M216.075 707.843 L219.053 708.329M205.411 702.61 L203.636 701.472M222.546 674.06 L220.881 673.818M208.276 692.451 L206.265 690.924M213.278 696.365 L211.728 695.247M213.1 669.533 L214.792 668.915M217.232 680.436 L217.028 683.106M226.315 682.863 L227.354 681.274M194.667 722.718 L194.304 721.371"/>
<path d="M160.94 747.617 L158.664 745.513M168.338 748.516 L168.956 747.095M171.691 733.669 L168.641 733.205M178.112 739.32 L179.294 738.84M172.602 742.876 L172.614 744.246M165.018 732.104 L164.628 730.152M173.745 731.71 L172.074 730.926M168.92 749.284 L167.586 751.191M157.198 732.667 L156.202 734.933M161.425 753.908 L163.523 755.031M171.963 747.372 L172.721 748.401M163.491 734.481 L162.961 732.392M169.629 736.97 L171.997 737.495M156.492 718.738 L157.809 719.552M167.207 738.792 L167.073 735.64M153.737 723.506 L151.365 722.57M159.93 750.375 L158.339 750.306M164.111 752.238 L163.206 751.1M164.409 744.829 L163.951 743.334M165.132 734.618 L164.321 736.88M154.993 721.237 L153.397 720.401M166.904 744.057 L164.518 743.483M153.148 723.353 L153.985 722.45M174.417 741.442 L176.875 739.753M165.757 741.112 L165.336 739.916M176.297 743.199 L177.113 744.92M158.207 744.789 L158.021 746.551M174.264 732.894 L177.039 733.569M175.051 736.162 L174.756 734.779M165.176 744.841 L162.682 746.39M165.541 733.774 L165.892 732.088M172.701 733.51 L171.514 735.256M153.321 721.434 L156.142 720.648"/>
<path d="M132.671 748.967 L132.672 747.372M136.408 750.206 L135.274 749.554M143.022 748.953 L140.459 749.662M129.862 757.147 L131.39 756.533M130.243 750.055 L131.455 752.25M122.87 754.645 L121.141 754.06M142.507 748.468 L140.863 749.478M143.645 756.527 L144.907 757.606M128.347 755.456 L128.658 754.268M144.126 752.683 L146.461 752.508M129.381 756.786 L129.955 753.957M138.972 749.065 L136.904 748.445M124.137 746.742 L123.802 748.697M142.48 753.429 L141.437 754.694M147.715 754.911 L147.685 756.815M134.085 742.474 L132.483 743.347M142.685 749.16 L143.667 750.949M133.457 741.348 L133.367 739.722"/>
<path d="M86.0376 747.169 L84.667 747.042M90.1127 747.43 L91.0292 748.635M93.3111 754.89 L91.0655 756.572M90.6165 754.167 L89.4526 756.892M90.9462 743.135 L89.8991 743.865M75.0527 742.988 L73.2895 743.543M92.588 751.206 L91.6959 752.187M99.2859 752.154 L96.9319 752.233M84.8259 742.704 L83.4244 740.121M101.399 753.464 L101.07 751.213M91.0292 751.731 L93.7927 751.245M92.0852 749.157 L91.681 751.972M82.2355 754.329 L80.0103 752.06M72.0897 753.279 L70.6709 753.904M84.8629 754.11 L86.0531 752.983M101.128 751.948 L101.234 754.643M88.109 747.546 L88.0339 745.432M90.3586 745.662 L89.6186 747.393"/>
<path d="M793.008 603.69 L793.744 606.226M797.863 598.481 L795.875 599.213M805.965 641.076 L806.402 642.566M803.083 627.243 L805.302 625.568M803.158 637.457 L802.728 636.292M796.304 601.537 L798.627 601.391M799.615 566.458 L799.585 569.271M795.063 583.54 L794.729 580.54M799.79 563.194 L801.502 562.252M798.329 657.982 L799.05 655.72"/>
</g>
<g fill="none" stroke="#000" stroke-width="1.1" stroke-linecap="round" stroke-linejoin="round">
<path d="M249.2 678.3 L252.5 683.3 L254.2 690 L253.3 697.5 L250.8 703.3"/>
<path d="M249.2 705.3 L246.7 708.3 L242.5 713.3 L238.3 717.5"/>
<path d="M236.7 721.7 L234.2 725"/>
<path d="M227.5 729.7 L223.3 731.7"/>
<path d="M256.7 660.8 L263.3 661.7 L270 663.3"/>
<path d="M275 664.7 L285 665"/>
<path d="M228.3 662.5 L235 661.3"/>
<path d="M240.8 665 L246.7 662.5"/>
<path d="M313.3 663.3 L321.7 662 L329.7 661.3"/>
<path d="M506.2 694 L507.5 701.5 L509.5 709 L512.5 712 L516.2 709.5"/>
<path d="M523.8 711 L530 714 L533.8 719 L540 717.8 L547.5 714 L555 709.5 L560 706.5"/>
<path d="M562.5 704 L570 699"/>
<path d="M380 650.2 L390 648.5 L405 647 L420 647.8"/>
</g>
<g fill="none" stroke="#000" stroke-width="1" stroke-linejoin="round" shape-rendering="crispEdges" transform="translate(0.3 0.3)">
<path d="M6 105 L155 105 L156.2 110 L160 113.8 L161.2 118.8 L158.8 123.8 L155 127.5 L151.2 132.5 L147.5 137.5 L142.5 143.8 L138 149.5 L187.5 149.5"/>
<path d="M202.5 6.2 L203.8 11.2 L206.2 17.5 L208 25 L202.5 31.2 L203.8 37.5 L207.5 43.8 L211.2 50 L213.8 56.2 L217.5 60 L221.2 58.8 L223.8 55 L226.2 58.8 L228.8 62.5 L231.2 66.2 L231.2 72.5 L228.8 76.2 L230 80 L227.5 83.8 L226.2 88.8 L223.8 93.8 L221.2 97.5 L217.5 96.2 L213.8 93 L211.2 97.5 L208.8 103.8 L205 107.5 L203.8 102.5 L202.5 98.8 L198.8 98.8 L197.5 102.5 L200 106.2 L203.8 108.8 L200 113.8 L197.5 117.5 L193.8 120 L197.5 123.8 L192.5 127.5 L188.8 128.8 L192.5 132.5 L196.2 136.2 L192.5 140 L188.8 143.8 L187.5 149.5 L191.2 153.8 L192.5 157.5 L186.2 158.8 L183.8 162.5 L188.8 165 L183.8 168.8 L178.8 171.2 L172.5 171.2 L170 175 L173.8 178.8 L176.2 181.2 L172.5 185 L172.5 190 L168.8 192.5 L165 190 L162.5 193.8 L165 197.5 L160 198.8 L156.2 201.2 L153.8 203 L153.8 203 L160 205.5 L156.2 210.5 L155 215.5 L160 218 L158.8 223 L161.2 226.8 L156.2 228 L152.5 231.8 L150 235.5 L145 234.2 L142.5 239.2 L146.2 243 L147.5 248 L142.5 250.5 L137.5 251.8 L133.8 248 L130 249.2 L131.2 254.2 L126.2 256.8 L127.5 263 L131.2 265.5 L127.5 270.5 L123.8 268 L122.5 274.2 L125 278 L122.5 283 L123.8 290.5 L118.8 293 L113.8 294.2 L116.2 299.2 L110 298 L107.5 303 L102.5 305.5 L105 311.8 L100 314.2 L96.2 313 L97.5 318 L101.2 321.8 L96.2 325.5 L91.2 326.8 L86.2 329.2 L88.8 333 L92.5 335.5 L88.8 339.2 L86.2 344.2 L91.2 346.8 L87.5 350.5 L82.5 348 L80 353 L85 356.8 L80 359.2 L75 355.5 L76.2 361.8 L80 365.5 L75 369.2 L76.2 374.2 L82.5 375.5 L86.2 378 L83.8 383 L80 385.5 L82.5 391.8 L87.5 393 L86.2 398 L82.5 400.5 L78.8 404.2 L78.8 406 L82.5 411 L77.5 417.2 L76.2 422.2 L81.2 424.8 L85 421 L86.2 427.2 L81.2 431 L80 437.2 L83.8 441 L80 446 L81.2 452.2 L87.5 449.8 L91.2 452.2 L87.5 457.2 L83.8 459.8 L86.2 466 L92.5 464.8 L93.8 469.8 L97.5 473.5 L100 472.2 L98.8 477.2 L93.8 478.5 L90 483.5 L85 486 L81.2 489.8 L86.2 492.2 L90 491 L88.8 496 L83.8 498.5 L86.2 503.5 L81.2 506 L77.5 511 L73.8 514.8 L70 518.5 L66.2 521 L67.5 527.2 L72.5 526 L70 522.2 L65 524.8 L62.5 529.8 L61.2 536 L56.2 537.2 L53.8 541 L58.8 543.5 L61.2 541 L60 546 L55 548.5 L52.5 553.5 L48.8 557.2 L47.5 562.2 L51.2 566 L53.8 569.8 L45 571 L46.2 577.2 L48.8 583.5 L45 586 L47.5 591 L45 594"/>
<path d="M208.8 103.8 L265 104.5 L284 105 L287 104.5 L312 104.5 L312.8 98.8 L310.8 88.8 L315.8 89.2 L324.5 92 L362 91.2 L402 90 L422 89.5 L422 92 L452 91.2 L477 93 L512 94.5 L546 94.5 L574 96.2 L636.5 96.2 L699 96.2 L774 95 L786.5 95 L806 98"/>
<path d="M304.5 6.2 L308.2 11.2 L309 16.2 L302 20 L294.5 22.5 L287 22.5 L280.8 25 L277.5 31.2 L278.2 37.5 L282 42.5 L283.2 47.5 L280.8 52.5 L275.8 53.8 L270.8 51.2 L265.8 47.5 L262 43.8 L260 46.2 L252.5 42.5 L246.2 40 L240 40 L235 43.8 L231.2 47.5 L227.5 53.8 L226.2 58.8"/>
<path d="M636.5 96.2 L649 88.8 L664 85 L675.2 82.5 L680.2 75 L689 72.5 L696.5 68.8 L697.8 61.2 L706.5 56.2 L709 48.8 L721.5 42.5 L734 36.2 L744 28.8 L754 20 L760.2 13.8 L764 11.2"/>
<path d="M747.8 6.2 L752.8 10 L760.2 11.2 L765.2 13.8 L764 18.8 L767.8 25 L774 31.2 L779 36.2 L785.2 41.2 L794 40 L801.5 37.5 L806 32.5"/>
<path d="M786.5 95 L782.8 102.5 L781.5 110 L782.8 117.5 L776.5 117.5 L770.2 121.2 L764 128.8 L759 137.5 L752.8 138.8 L746.5 136.2 L736.5 137.5 L730.2 142.5 L724 150 L717.8 152.5 L715.2 145 L710.2 145 L704 150 L699 153.8 L694 156.2 L691.5 163.8 L686.5 168.8 L677.8 170 L671.5 173.8 L664 178.8 L656.5 182.5 L649 187.5 L641.5 187 L631.5 188.8 L621.5 192.5 L614 197.5 L610.2 203 L610.2 203 L609 210.5 L601.5 214.2 L594 215.5 L590.2 220.5 L589 239.2"/>
<path d="M145 238.5 L284 238.5 L299.5 237.5 L397 238.5 L469.5 238.8 L493.2 240 L546 239.2 L589 239.2 L679 238.8 L699 231.8 L714 226.8 L731.5 221 L744 220 L774 221.8 L806 223"/>
<path d="M299.5 238 L303.2 243 L307.5 248 L305.8 265.5 L302 303 L297 348 L290.8 406 L287 443.5 L283.2 481 L280 516 L280.8 556 L283.2 609 L283.8 609 L284.5 646.5"/>
<path d="M493.2 240 L497 260.5 L502 290.5 L508.2 323 L513.2 353 L517 378 L520.8 406 L525.8 428.5 L530.8 441 L534.5 451 L539.5 463.5 L538.2 474.8 L544.5 481 L539.5 486 L533.2 494.8 L534.5 506 L530.8 518.5 L533.2 531 L533.2 546 L530.8 561 L529.5 576 L534.5 588.5 L538.2 598.5 L542 609 L546.2 614 L547.5 619.5"/>
<path d="M679 238.8 L674 245.5 L666.5 253 L660.2 263 L666.5 269.2 L676.5 275.5 L684 283 L694 283 L699 293 L705.2 305.5 L709 315.5 L716.5 325.5 L721.5 333 L731.5 339.2 L739 345.5 L745.2 353 L751.5 361.8 L759 368 L766.5 375.5 L765.2 383 L771.5 389.2 L776.5 396.8 L780.2 406 L784 406 L794 411 L799 418.5 L801.5 428.5 L806 433.5"/>
<path d="M6 415.5 L79.5 415.5"/>
<path d="M45 594 L186.2 594 L185 599.8 L182.5 606 L180 609 L177.5 616.5 L178.8 624 L182.5 631.5 L186.2 639 L190 646.5 L191.2 654 L193.8 661.5 L197.5 666.5"/>
<path d="M361.2 644 L358.8 646.5 L356.2 641.5 L360 634 L358.8 626.5 L355 619 L350 614 L345 609 L343.2 601 L344.5 594 L537 594"/>
<path d="M547.5 619.5 L664 626.5 L745 632.8 L746.2 646.5 L750 651 L757.5 650.2 L758.8 639 L757.5 626.5 L758.8 616.5 L763.8 610.2 L770 611.5 L780 615.2 L790 619 L797.5 620.2"/>
</g>
<g fill="none" stroke="#d4d4d4" stroke-width="1" shape-rendering="crispEdges">
<circle cx="407" cy="407" r="159.5"/>
<circle cx="407" cy="407" r="279.5"/>
<circle cx="407" cy="407" r="399.5"/>
<circle cx="407" cy="407" r="519.5"/>
</g>
<circle cx="407" cy="407" r="39.5" fill="none" stroke="#ff0000" stroke-width="1" shape-rendering="crispEdges"/>
<g font-family="'DejaVu Sans','Liberation Sans',sans-serif" font-size="9.2" fill="#ffff8c" text-anchor="middle">
<rect x="395.0" y="3.0" width="23" height="9" fill="#5e504b"/>
<text x="406.3" y="11.1" textLength="20.5" lengthAdjust="spacingAndGlyphs">313</text>
<rect x="395.0" y="123.0" width="23" height="9" fill="#5e504b"/>
<text x="406.3" y="131.1" textLength="20.5" lengthAdjust="spacingAndGlyphs">219</text>
<rect x="395.0" y="243.0" width="23" height="9" fill="#5e504b"/>
<text x="406.3" y="251.1" textLength="20.5" lengthAdjust="spacingAndGlyphs">125</text>
<rect x="399.0" y="363.0" width="15" height="9" fill="#5e504b"/>
<text x="406.3" y="371.1" textLength="13" lengthAdjust="spacingAndGlyphs">31</text>
</g>
</svg>
<svg class="ui" width="1138" height="812" viewBox="0 0 1138 812" font-family="'DejaVu Sans','Liberation Sans',sans-serif">
<rect x="812.5" y="8.5" width="319" height="319" rx="4.5" ry="4.5" fill="#000" stroke="#d8d8d8" stroke-width="1"/>
<rect x="812.5" y="333.5" width="319" height="114" rx="4.5" ry="4.5" fill="#000" stroke="#d8d8d8" stroke-width="1"/>
<rect x="812.5" y="453.5" width="319" height="349" rx="4.5" ry="4.5" fill="#000" stroke="#d8d8d8" stroke-width="1"/>
<rect x="819" y="16" width="58" height="18" fill="#5a0000"/>
<path d="M819 33.5H876.5V16" fill="none" stroke="#8c8c8c" stroke-width="1" shape-rendering="crispEdges"/>
<path d="M819.5 34V16.5H877" fill="none" stroke="#f4f4f4" stroke-width="1" shape-rendering="crispEdges"/>
<text x="848.3" y="29.5" font-size="12" fill="#dcdcdc" font-weight="bold" text-anchor="middle" textLength="48.3" lengthAdjust="spacingAndGlyphs">STRIKE</text>
<rect x="883" y="16" width="58" height="18" fill="#383838"/>
<path d="M883 33.5H940.5V16" fill="none" stroke="#8c8c8c" stroke-width="1" shape-rendering="crispEdges"/>
<path d="M883.5 34V16.5H941" fill="none" stroke="#f4f4f4" stroke-width="1" shape-rendering="crispEdges"/>
<text x="912" y="29.5" font-size="12" fill="#d0d0d0" font-weight="bold" text-anchor="middle" textLength="43" lengthAdjust="spacingAndGlyphs">NOISE</text>
<rect x="994" y="16" width="128" height="18" fill="#383838"/>
<path d="M994 33.5H1121.5V16" fill="none" stroke="#8c8c8c" stroke-width="1" shape-rendering="crispEdges"/>
<path d="M994.5 34V16.5H1122" fill="none" stroke="#f4f4f4" stroke-width="1" shape-rendering="crispEdges"/>
<text x="999" y="29.5" font-size="12" fill="#fff" font-weight="bold" textLength="61" lengthAdjust="spacingAndGlyphs">Bng 160°</text>
<text x="1117.5" y="29.5" font-size="12" fill="#00ff00" font-weight="bold" text-anchor="end" textLength="42" lengthAdjust="spacingAndGlyphs">348mi</text>
<rect x="821" y="64" width="82" height="16" fill="#5c5c5c"/>
<path d="M821 79.5H902.5V64" fill="none" stroke="#8c8c8c" stroke-width="1" shape-rendering="crispEdges"/>
<path d="M821.5 80V64.5H903" fill="none" stroke="#f4f4f4" stroke-width="1" shape-rendering="crispEdges"/>
<text x="862" y="76.8" font-size="12" fill="#fff" text-anchor="middle" textLength="66" lengthAdjust="spacingAndGlyphs">Strikes/min</text>
<rect x="931" y="64" width="82" height="16" fill="#5c5c5c"/>
<path d="M931 79.5H1012.5V64" fill="none" stroke="#8c8c8c" stroke-width="1" shape-rendering="crispEdges"/>
<path d="M931.5 80V64.5H1013" fill="none" stroke="#f4f4f4" stroke-width="1" shape-rendering="crispEdges"/>
<text x="972" y="76.8" font-size="12" fill="#fff" text-anchor="middle" textLength="58" lengthAdjust="spacingAndGlyphs">Close/min</text>
<rect x="1041" y="64" width="82" height="16" fill="#5c5c5c"/>
<path d="M1041 79.5H1122.5V64" fill="none" stroke="#8c8c8c" stroke-width="1" shape-rendering="crispEdges"/>
<path d="M1041.5 80V64.5H1123" fill="none" stroke="#f4f4f4" stroke-width="1" shape-rendering="crispEdges"/>
<text x="1082" y="76.8" font-size="12" fill="#fff" text-anchor="middle" textLength="63" lengthAdjust="spacingAndGlyphs">Noises/min</text>
<text x="902.8" y="111.6" font-size="28.3" fill="#fff" font-weight="bold" text-anchor="end">0</text>
<text x="1012.8" y="111.6" font-size="28.3" fill="#fff" font-weight="bold" text-anchor="end">0</text>
<text x="1121.8" y="111.6" font-size="28.3" fill="#c0c0c0" font-weight="bold" text-anchor="end">1</text>
<text x="903" y="143" font-size="12" fill="#fff" text-anchor="end" textLength="77" lengthAdjust="spacingAndGlyphs">Total Strikes</text>
<text x="903" y="161" font-size="12" fill="#fff" text-anchor="end">40</text>
<text x="1013" y="143" font-size="12" fill="#fff" text-anchor="end" textLength="69" lengthAdjust="spacingAndGlyphs">Total Close</text>
<text x="1013" y="161" font-size="12" fill="#fff" text-anchor="end">0</text>
<text x="1123" y="143" font-size="12" fill="#c8c8c8" text-anchor="end" textLength="76" lengthAdjust="spacingAndGlyphs">Total Noises</text>
<text x="1123" y="161" font-size="12" fill="#c8c8c8" text-anchor="end">109</text>
<text x="821" y="215" font-size="12" fill="#c0c0c0" textLength="164.5" lengthAdjust="spacingAndGlyphs">Lightning type distribution</text>
<rect x="821" y="217" width="303" height="1" fill="#9a9a9a"/>
<text x="821" y="236.8" font-size="12" fill="#fff" font-weight="bold" textLength="84.5" lengthAdjust="spacingAndGlyphs">Cloud-ground</text>
<text x="912" y="236.8" font-size="12" fill="#fff">+</text>
<rect x="925.5" y="227.5" width="50" height="11" rx="2" ry="2" fill="#000" stroke="#8a8a8a"/>
<rect x="926" y="228" width="7" height="10" fill="#ff0000"/>
<text x="979.3" y="236.8" font-size="12" fill="#fff" font-weight="bold" textLength="29" lengthAdjust="spacingAndGlyphs">15%</text>
<text x="1015.2" y="235.70000000000002" font-size="16" fill="#e0e0e0" font-weight="bold">-</text>
<rect x="1028.5" y="227.5" width="50" height="11" rx="2" ry="2" fill="#000" stroke="#8a8a8a"/>
<rect x="1029" y="228" width="7" height="10" fill="#99ccff"/>
<text x="1082.3" y="236.8" font-size="12" fill="#fff" font-weight="bold" textLength="29" lengthAdjust="spacingAndGlyphs">15%</text>
<text x="821" y="260.8" font-size="12" fill="#c0c0c0" font-weight="bold" textLength="38" lengthAdjust="spacingAndGlyphs">Count</text>
<text x="925" y="260.8" font-size="12" fill="#fff" font-weight="bold">6</text>
<text x="1028" y="260.8" font-size="12" fill="#fff" font-weight="bold">6</text>
<text x="821" y="290.8" font-size="12" fill="#fff" font-weight="bold" textLength="63.5" lengthAdjust="spacingAndGlyphs">Intracloud</text>
<text x="912" y="290.8" font-size="12" fill="#fff">+</text>
<rect x="925.5" y="281.5" width="50" height="11" rx="2" ry="2" fill="#000" stroke="#8a8a8a"/>
<rect x="926" y="282" width="15" height="10" fill="#e85aa8"/>
<text x="979.3" y="290.8" font-size="12" fill="#fff" font-weight="bold" textLength="29" lengthAdjust="spacingAndGlyphs">30%</text>
<text x="1015.2" y="289.7" font-size="16" fill="#e0e0e0" font-weight="bold">-</text>
<rect x="1028.5" y="281.5" width="50" height="11" rx="2" ry="2" fill="#000" stroke="#8a8a8a"/>
<rect x="1029" y="282" width="20" height="10" fill="#00ff00"/>
<text x="1082.3" y="290.8" font-size="12" fill="#fff" font-weight="bold" textLength="29" lengthAdjust="spacingAndGlyphs">40%</text>
<text x="821" y="314.8" font-size="12" fill="#c0c0c0" font-weight="bold" textLength="38" lengthAdjust="spacingAndGlyphs">Count</text>
<text x="925" y="314.8" font-size="12" fill="#fff" font-weight="bold">12</text>
<text x="1028" y="314.8" font-size="12" fill="#fff" font-weight="bold">16</text>
<text y="353.2" font-size="16.8" font-weight="bold" fill="#00ff00" lengthAdjust="spacingAndGlyphs"><tspan x="822" textLength="85.3" lengthAdjust="spacingAndGlyphs">2/2/2026</tspan> <tspan x="915.6" textLength="63.6" lengthAdjust="spacingAndGlyphs">9:34:56</tspan> <tspan x="987.5" textLength="24.6" lengthAdjust="spacingAndGlyphs">PM</tspan></text>
<rect x="821" y="358" width="302" height="1" fill="#9a9a9a"/>
<text x="821" y="388" font-size="12" fill="#fff" textLength="49" lengthAdjust="spacingAndGlyphs">Squelch</text>
<text x="910" y="388" font-size="12" fill="#fff">0</text>
<text x="981" y="388" font-size="12" fill="#fff" textLength="44" lengthAdjust="spacingAndGlyphs">Upload</text>
<text x="1061" y="388" font-size="12" fill="#c0c0c0" textLength="54" lengthAdjust="spacingAndGlyphs">Disabled</text>
<text x="821" y="408" font-size="12" fill="#fff" textLength="73" lengthAdjust="spacingAndGlyphs">Persistence</text>
<text x="910" y="408" font-size="12" fill="#fff" textLength="41" lengthAdjust="spacingAndGlyphs">90 min</text>
<text x="981" y="408" font-size="12" fill="#fff" textLength="51" lengthAdjust="spacingAndGlyphs">Capture</text>
<text x="1061" y="408" font-size="12" fill="#00f000" textLength="37" lengthAdjust="spacingAndGlyphs">Active</text>
<text x="821" y="428" font-size="12" fill="#fff" textLength="40" lengthAdjust="spacingAndGlyphs">Range</text>
<text x="910" y="428" font-size="12" fill="#fff" textLength="41" lengthAdjust="spacingAndGlyphs">313 mi</text>
<text x="981" y="428" font-size="12" fill="#fff" textLength="53" lengthAdjust="spacingAndGlyphs">Receiver</text>
<text x="1061" y="428" font-size="12" fill="#00f000" textLength="51" lengthAdjust="spacingAndGlyphs">Enabled</text>
<text x="821" y="475" font-size="12" fill="#c0c0c0" textLength="44" lengthAdjust="spacingAndGlyphs">Uptime</text>
<text x="910" y="475" font-size="12" fill="#fff" textLength="44" lengthAdjust="spacingAndGlyphs">513:20</text>
<text x="981" y="475" font-size="12" fill="#c0c0c0" textLength="62" lengthAdjust="spacingAndGlyphs">Peak time</text>
<text x="1061" y="475" font-size="12" fill="#c0c0c0" textLength="24" lengthAdjust="spacingAndGlyphs">Plot</text>
<text x="821" y="498" font-size="12" fill="#c0c0c0" textLength="61" lengthAdjust="spacingAndGlyphs">Peak rate</text>
<text x="910" y="498" font-size="12" fill="#fff" textLength="34" lengthAdjust="spacingAndGlyphs">1/min</text>
<text x="981" y="498" font-size="12" fill="#fff" textLength="51" lengthAdjust="spacingAndGlyphs">9:28 PM</text>
<text x="1061" y="498" font-size="12" fill="#fff" textLength="36" lengthAdjust="spacingAndGlyphs">Strike</text>
<text x="822" y="528" font-size="12" fill="#c0c0c0" textLength="77" lengthAdjust="spacingAndGlyphs">Trend graph</text>
<text x="908.5" y="528" font-size="12" fill="#fff" textLength="41" lengthAdjust="spacingAndGlyphs">60 min</text>
<g stroke="#d0d0d0" stroke-width="1" shape-rendering="crispEdges" fill="none">
<path d="M822 777.5H1089"/>
<path d="M1088.5 543V778"/>
<path d="M822.5 775V779"/>
<path d="M866.5 775V779"/>
<path d="M911.5 775V779"/>
<path d="M955.5 775V779"/>
<path d="M1000.5 775V779"/>
<path d="M1044.5 775V779"/>
<path d="M1088.5 775V779"/>
<path d="M1086 738.5H1088"/>
<path d="M1084 699.5H1088"/>
<path d="M1086 660.5H1088"/>
<path d="M1084 621.5H1088"/>
<path d="M1086 582.5H1088"/>
<path d="M1084 543.5H1088"/>
</g>
<path d="M1018.5 777.5L1020 769.5H1022.5L1024.5 777.5M1055.5 777.5L1057.5 769.5H1060L1062 777.5" fill="none" stroke="#fff" stroke-width="1"/>
<text x="820.5" y="792" font-size="11" fill="#c8c8c8" textLength="13" lengthAdjust="spacingAndGlyphs" font-family="'DejaVu Sans Condensed','Liberation Sans',sans-serif">60</text>
<text x="864.9" y="792" font-size="11" fill="#c8c8c8" textLength="13" lengthAdjust="spacingAndGlyphs" font-family="'DejaVu Sans Condensed','Liberation Sans',sans-serif">50</text>
<text x="909.3" y="792" font-size="11" fill="#c8c8c8" textLength="13" lengthAdjust="spacingAndGlyphs" font-family="'DejaVu Sans Condensed','Liberation Sans',sans-serif">40</text>
<text x="953.7" y="792" font-size="11" fill="#c8c8c8" textLength="13" lengthAdjust="spacingAndGlyphs" font-family="'DejaVu Sans Condensed','Liberation Sans',sans-serif">30</text>
<text x="998.1" y="792" font-size="11" fill="#c8c8c8" textLength="13" lengthAdjust="spacingAndGlyphs" font-family="'DejaVu Sans Condensed','Liberation Sans',sans-serif">20</text>
<text x="1042.5" y="792" font-size="11" fill="#c8c8c8" textLength="13" lengthAdjust="spacingAndGlyphs" font-family="'DejaVu Sans Condensed','Liberation Sans',sans-serif">10</text>
<text x="1087.4" y="792" font-size="11" fill="#c8c8c8" font-family="'DejaVu Sans Condensed','Liberation Sans',sans-serif">0</text>
<text x="1100.5" y="792" font-size="11" fill="#c8c8c8" textLength="18" lengthAdjust="spacingAndGlyphs" font-family="'DejaVu Sans Condensed','Liberation Sans',sans-serif">min</text>
<text x="1092" y="546.5" font-size="11" fill="#c8c8c8" textLength="13" lengthAdjust="spacingAndGlyphs" font-family="'DejaVu Sans Condensed','Liberation Sans',sans-serif">30</text>
<text x="1092" y="624.5" font-size="11" fill="#c8c8c8" textLength="13" lengthAdjust="spacingAndGlyphs" font-family="'DejaVu Sans Condensed','Liberation Sans',sans-serif">20</text>
<text x="1092" y="703.5" font-size="11" fill="#c8c8c8" textLength="13" lengthAdjust="spacingAndGlyphs" font-family="'DejaVu Sans Condensed','Liberation Sans',sans-serif">10</text>
<rect x="9.5" y="759.5" width="243" height="44" fill="#000" stroke="#8c8c8c" stroke-width="1"/>
<g font-family="'DejaVu Sans Condensed','Liberation Sans',sans-serif" font-size="10">
<text x="13.3" y="771" font-size="9.5" fill="#e8e8e8" textLength="35.5" lengthAdjust="spacingAndGlyphs">Symbols</text>
<text x="53" y="771" font-size="9.5" fill="#e8e8e8" textLength="16.7" lengthAdjust="spacingAndGlyphs">-CG</text>
<text x="78" y="771" font-size="9.5" fill="#e8e8e8" textLength="14" lengthAdjust="spacingAndGlyphs">-IC</text>
<text x="98.7" y="771" font-size="9.5" fill="#e8e8e8" textLength="20" lengthAdjust="spacingAndGlyphs">+CG</text>
<text x="124" y="771" font-size="9.5" fill="#e8e8e8" textLength="17.2" lengthAdjust="spacingAndGlyphs">+IC</text>
<text x="153" y="771" font-size="9.5" fill="#e8e8e8" textLength="89.6" lengthAdjust="spacingAndGlyphs">Strike age color codes</text>
<text x="13.5" y="784" font-size="9.5" fill="#e8e8e8" textLength="27.5" lengthAdjust="spacingAndGlyphs">Recent</text>
<text x="13.5" y="796.5" font-size="9.5" fill="#e8e8e8" textLength="14.2" lengthAdjust="spacingAndGlyphs">Old</text>
<text x="153.5" y="784" font-size="9.5" fill="#f5d400" textLength="16.5" lengthAdjust="spacingAndGlyphs">15+</text>
<text x="153.5" y="796.5" font-size="9.5" fill="#e07808" textLength="16.5" lengthAdjust="spacingAndGlyphs">60+</text>
<text x="187.8" y="784" font-size="9.5" fill="#f0a800" textLength="16.5" lengthAdjust="spacingAndGlyphs">30+</text>
<text x="187.8" y="796.5" font-size="9.5" fill="#e05a10" textLength="16.5" lengthAdjust="spacingAndGlyphs">75+</text>
<text x="222.8" y="784" font-size="9.5" fill="#f09000" textLength="16.5" lengthAdjust="spacingAndGlyphs">45+</text>
<text x="222.8" y="796.5" font-size="9.5" fill="#e23c10" textLength="16.5" lengthAdjust="spacingAndGlyphs">90+</text>
</g>
<g stroke="#00ffff" stroke-width="1" fill="none">
<circle cx="60.5" cy="780.5" r="4"/><path d="M58 780.5H63"/>
<path d="M82 780.5H89"/>
<circle cx="110.5" cy="780.5" r="4"/><path d="M108 780.5H113M110.5 778.0V783.0"/>
<path d="M131.5 780.5H139.5M135.5 776.5V784.5"/>
</g>
<g stroke="#ffff00" stroke-width="1" fill="none">
<circle cx="60.5" cy="793.5" r="4"/><path d="M58 793.5H63"/>
<path d="M82 793.5H89"/>
<circle cx="110.5" cy="793.5" r="4"/><path d="M108 793.5H113M110.5 791.0V796.0"/>
<path d="M131.5 793.5H139.5M135.5 789.5V797.5"/>
</g>
<rect x="685" y="792" width="121" height="14" fill="#000"/>
<text x="689" y="801.7" font-size="9.6" fill="#f4f4f4" textLength="113" lengthAdjust="spacingAndGlyphs" font-family="'DejaVu Sans Condensed','Liberation Sans',sans-serif">©2005 Astrogenic Systems</text>
</svg>
</body>
</html>
